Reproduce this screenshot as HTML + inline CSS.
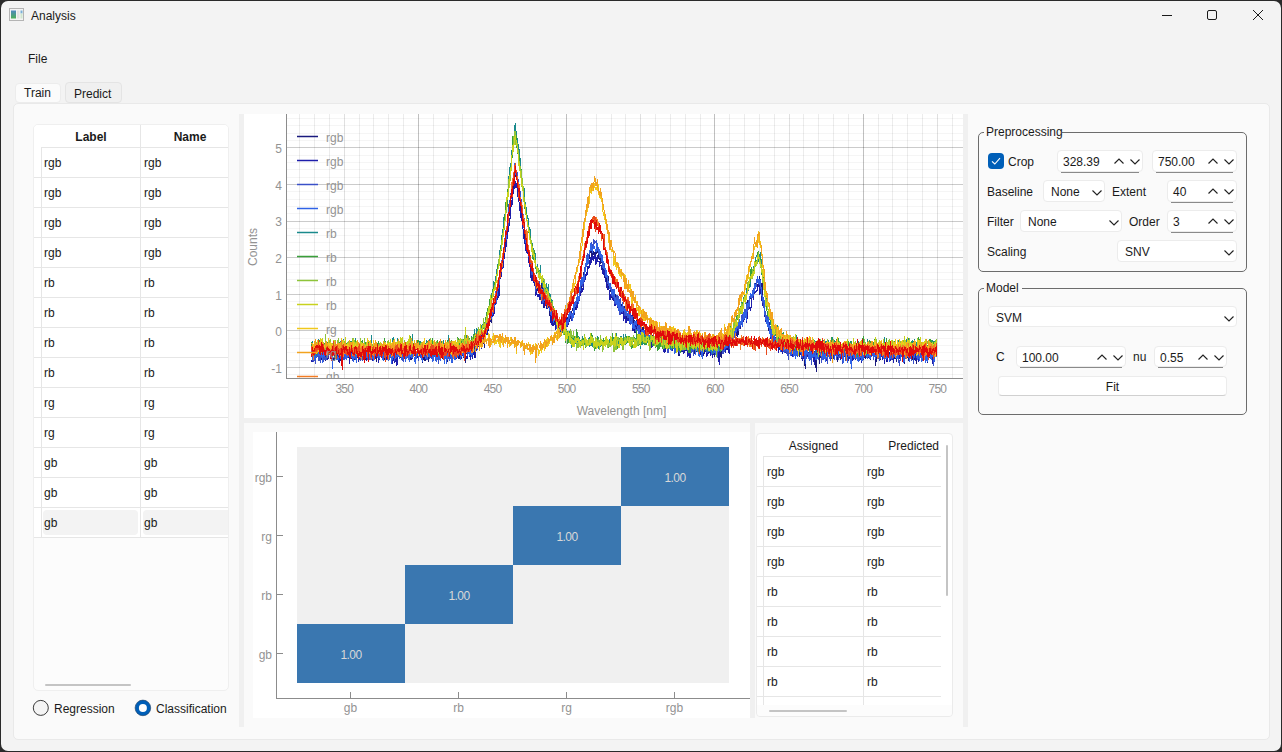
<!DOCTYPE html>
<html><head><meta charset="utf-8"><style>
html,body{margin:0;padding:0;}
body{width:1282px;height:752px;position:relative;overflow:hidden;background:#2a2a2a;font-family:"Liberation Sans",sans-serif;}
.t{position:absolute;white-space:nowrap;line-height:14px;font-family:"Liberation Sans",sans-serif;}
.r{position:absolute;}
</style></head><body>
<div class="r" style="left:1px;top:1px;width:1280px;height:750px;background:#f3f3f3;border-radius:7px;"></div>
<svg class="r" style="left:9px;top:8px" width="16" height="14" viewBox="0 0 16 14"><rect x="0.5" y="0.5" width="14" height="12" fill="#f4f4f4" stroke="#b4b4b4"/><defs><linearGradient id="ig" x1="0" y1="0" x2="0" y2="1"><stop offset="0" stop-color="#4f88c0"/><stop offset="1" stop-color="#4caf58"/></linearGradient></defs><rect x="2" y="2.5" width="5" height="8" fill="url(#ig)"/><rect x="8" y="2.5" width="2.5" height="8" fill="#e2e2e2"/><rect x="11.5" y="2.5" width="2" height="3" fill="#7ab0d8"/><rect x="11.5" y="5.5" width="2" height="5" fill="#cfe6cf"/></svg>
<div class="t" style="left:31px;top:8.86px;font-size:12px;color:#1a1a1a;font-weight:normal;">Analysis</div>
<svg class="r" style="left:1150px;top:0px" width="130" height="30" viewBox="0 0 130 30"><line x1="12" y1="15.5" x2="22" y2="15.5" stroke="#1a1a1a" stroke-width="1"/><rect x="57.5" y="10.5" width="9" height="9" rx="1.5" fill="none" stroke="#1a1a1a" stroke-width="1"/><path d="M103 10 L113 20 M113 10 L103 20" stroke="#1a1a1a" stroke-width="1"/></svg>
<div class="t" style="left:28px;top:51.86px;font-size:12px;color:#1a1a1a;font-weight:normal;">File</div>
<div class="r" style="left:13px;top:103px;width:1257px;height:637px;background:#fafafa;border:1px solid #e9e9e9;border-radius:5px;box-sizing:border-box;"></div>
<div class="r" style="left:15px;top:83px;width:46px;height:20px;background:#fbfbfb;border:1px solid #ececec;border-radius:4px;box-sizing:border-box;"></div>
<div class="r" style="left:65px;top:82px;width:57px;height:21px;background:#f0f0f0;border:1px solid #e4e4e4;border-radius:4px;box-sizing:border-box;"></div>
<div class="t" style="left:24px;top:85.86px;font-size:12px;color:#1a1a1a;font-weight:normal;">Train</div>
<div class="t" style="left:74px;top:86.86px;font-size:12px;color:#1a1a1a;font-weight:normal;">Predict</div>
<div class="r" style="left:33px;top:124px;width:196px;height:567px;background:#fcfcfc;border:1px solid #efefef;border-radius:5px;box-sizing:border-box;"></div>
<div class="r" style="left:34px;top:125px;width:194px;height:412px;background:#fff;border-radius:4px 4px 0 0;"></div>
<div class="t" style="left:41.0px;top:129.86px;width:100px;text-align:center;font-size:12px;color:#1a1a1a;font-weight:bold;">Label</div>
<div class="t" style="left:140.0px;top:129.86px;width:100px;text-align:center;font-size:12px;color:#1a1a1a;font-weight:bold;">Name</div>
<div class="r" style="left:140px;top:125px;width:1px;height:412px;background:#e6e6e6;"></div>
<div class="r" style="left:41px;top:147px;width:1px;height:390px;background:#e6e6e6;"></div>
<div class="r" style="left:41px;top:147px;width:187px;height:1px;background:#e6e6e6;"></div>
<div class="t" style="left:44px;top:155.86px;font-size:12px;color:#1a1a1a;font-weight:normal;">rgb</div>
<div class="t" style="left:144px;top:155.86px;font-size:12px;color:#1a1a1a;font-weight:normal;">rgb</div>
<div class="r" style="left:34px;top:177px;width:194px;height:1px;background:#e6e6e6;"></div>
<div class="t" style="left:44px;top:185.86px;font-size:12px;color:#1a1a1a;font-weight:normal;">rgb</div>
<div class="t" style="left:144px;top:185.86px;font-size:12px;color:#1a1a1a;font-weight:normal;">rgb</div>
<div class="r" style="left:34px;top:207px;width:194px;height:1px;background:#e6e6e6;"></div>
<div class="t" style="left:44px;top:215.86px;font-size:12px;color:#1a1a1a;font-weight:normal;">rgb</div>
<div class="t" style="left:144px;top:215.86px;font-size:12px;color:#1a1a1a;font-weight:normal;">rgb</div>
<div class="r" style="left:34px;top:237px;width:194px;height:1px;background:#e6e6e6;"></div>
<div class="t" style="left:44px;top:245.86px;font-size:12px;color:#1a1a1a;font-weight:normal;">rgb</div>
<div class="t" style="left:144px;top:245.86px;font-size:12px;color:#1a1a1a;font-weight:normal;">rgb</div>
<div class="r" style="left:34px;top:267px;width:194px;height:1px;background:#e6e6e6;"></div>
<div class="t" style="left:44px;top:275.86px;font-size:12px;color:#1a1a1a;font-weight:normal;">rb</div>
<div class="t" style="left:144px;top:275.86px;font-size:12px;color:#1a1a1a;font-weight:normal;">rb</div>
<div class="r" style="left:34px;top:297px;width:194px;height:1px;background:#e6e6e6;"></div>
<div class="t" style="left:44px;top:305.86px;font-size:12px;color:#1a1a1a;font-weight:normal;">rb</div>
<div class="t" style="left:144px;top:305.86px;font-size:12px;color:#1a1a1a;font-weight:normal;">rb</div>
<div class="r" style="left:34px;top:327px;width:194px;height:1px;background:#e6e6e6;"></div>
<div class="t" style="left:44px;top:335.86px;font-size:12px;color:#1a1a1a;font-weight:normal;">rb</div>
<div class="t" style="left:144px;top:335.86px;font-size:12px;color:#1a1a1a;font-weight:normal;">rb</div>
<div class="r" style="left:34px;top:357px;width:194px;height:1px;background:#e6e6e6;"></div>
<div class="t" style="left:44px;top:365.86px;font-size:12px;color:#1a1a1a;font-weight:normal;">rb</div>
<div class="t" style="left:144px;top:365.86px;font-size:12px;color:#1a1a1a;font-weight:normal;">rb</div>
<div class="r" style="left:34px;top:387px;width:194px;height:1px;background:#e6e6e6;"></div>
<div class="t" style="left:44px;top:395.86px;font-size:12px;color:#1a1a1a;font-weight:normal;">rg</div>
<div class="t" style="left:144px;top:395.86px;font-size:12px;color:#1a1a1a;font-weight:normal;">rg</div>
<div class="r" style="left:34px;top:417px;width:194px;height:1px;background:#e6e6e6;"></div>
<div class="t" style="left:44px;top:425.86px;font-size:12px;color:#1a1a1a;font-weight:normal;">rg</div>
<div class="t" style="left:144px;top:425.86px;font-size:12px;color:#1a1a1a;font-weight:normal;">rg</div>
<div class="r" style="left:34px;top:447px;width:194px;height:1px;background:#e6e6e6;"></div>
<div class="t" style="left:44px;top:455.86px;font-size:12px;color:#1a1a1a;font-weight:normal;">gb</div>
<div class="t" style="left:144px;top:455.86px;font-size:12px;color:#1a1a1a;font-weight:normal;">gb</div>
<div class="r" style="left:34px;top:477px;width:194px;height:1px;background:#e6e6e6;"></div>
<div class="t" style="left:44px;top:485.86px;font-size:12px;color:#1a1a1a;font-weight:normal;">gb</div>
<div class="t" style="left:144px;top:485.86px;font-size:12px;color:#1a1a1a;font-weight:normal;">gb</div>
<div class="r" style="left:34px;top:507px;width:194px;height:1px;background:#e6e6e6;"></div>
<div class="r" style="left:43px;top:510px;width:95px;height:25px;background:#f3f3f3;border-radius:4px;"></div>
<div class="r" style="left:143px;top:510px;width:85px;height:25px;background:#f3f3f3;border-radius:4px 0 0 4px;"></div>
<div class="t" style="left:44px;top:515.86px;font-size:12px;color:#1a1a1a;font-weight:normal;">gb</div>
<div class="t" style="left:144px;top:515.86px;font-size:12px;color:#1a1a1a;font-weight:normal;">gb</div>
<div class="r" style="left:34px;top:537px;width:194px;height:1px;background:#e6e6e6;"></div>
<div class="r" style="left:45px;top:684px;width:86px;height:2px;background:#c4c4c4;border-radius:1px;"></div>
<svg class="r" style="left:32px;top:699px" width="18" height="18"><circle cx="8.8" cy="8.9" r="7.5" fill="#f4f4f4" stroke="#3b3b3b" stroke-width="1"/></svg>
<div class="t" style="left:54px;top:701.86px;font-size:12px;color:#1a1a1a;font-weight:normal;">Regression</div>
<svg class="r" style="left:134px;top:699px" width="18" height="18"><circle cx="8.9" cy="8.9" r="7.8" fill="#005fb8" stroke="#1c3a5e" stroke-width="0.6"/><circle cx="8.9" cy="8.9" r="4" fill="#fff"/></svg>
<div class="t" style="left:156px;top:701.86px;font-size:12px;color:#1a1a1a;font-weight:normal;">Classification</div>
<div class="r" style="left:239px;top:114px;width:5px;height:613px;background:#f0f0f0;"></div>
<div class="r" style="left:963px;top:114px;width:5px;height:613px;background:#f0f0f0;"></div>
<div class="r" style="left:244px;top:418px;width:719px;height:5px;background:#f0f0f0;"></div>
<div class="r" style="left:750px;top:423px;width:5px;height:295px;background:#f0f0f0;"></div>
<div class="r" style="left:244px;top:114px;width:719px;height:304px;background:#fff;"></div>
<svg class="r" style="left:0;top:0" width="1282" height="752" viewBox="0 0 1282 752"><defs><clipPath id="pc"><rect x="287" y="114" width="676" height="264"/></clipPath></defs><g clip-path="url(#pc)"><g shape-rendering="crispEdges"><line x1="299.5" y1="114" x2="299.5" y2="378" stroke="#000" stroke-opacity="0.075" stroke-width="1"/><line x1="314.5" y1="114" x2="314.5" y2="378" stroke="#000" stroke-opacity="0.075" stroke-width="1"/><line x1="329.5" y1="114" x2="329.5" y2="378" stroke="#000" stroke-opacity="0.075" stroke-width="1"/><line x1="344.5" y1="114" x2="344.5" y2="378" stroke="#000" stroke-opacity="0.122" stroke-width="1"/><line x1="359.5" y1="114" x2="359.5" y2="378" stroke="#000" stroke-opacity="0.075" stroke-width="1"/><line x1="373.5" y1="114" x2="373.5" y2="378" stroke="#000" stroke-opacity="0.075" stroke-width="1"/><line x1="388.5" y1="114" x2="388.5" y2="378" stroke="#000" stroke-opacity="0.075" stroke-width="1"/><line x1="403.5" y1="114" x2="403.5" y2="378" stroke="#000" stroke-opacity="0.075" stroke-width="1"/><line x1="418.5" y1="114" x2="418.5" y2="378" stroke="#000" stroke-opacity="0.247" stroke-width="1"/><line x1="433.5" y1="114" x2="433.5" y2="378" stroke="#000" stroke-opacity="0.075" stroke-width="1"/><line x1="448.5" y1="114" x2="448.5" y2="378" stroke="#000" stroke-opacity="0.075" stroke-width="1"/><line x1="462.5" y1="114" x2="462.5" y2="378" stroke="#000" stroke-opacity="0.075" stroke-width="1"/><line x1="477.5" y1="114" x2="477.5" y2="378" stroke="#000" stroke-opacity="0.075" stroke-width="1"/><line x1="492.5" y1="114" x2="492.5" y2="378" stroke="#000" stroke-opacity="0.122" stroke-width="1"/><line x1="507.5" y1="114" x2="507.5" y2="378" stroke="#000" stroke-opacity="0.075" stroke-width="1"/><line x1="522.5" y1="114" x2="522.5" y2="378" stroke="#000" stroke-opacity="0.075" stroke-width="1"/><line x1="537.5" y1="114" x2="537.5" y2="378" stroke="#000" stroke-opacity="0.075" stroke-width="1"/><line x1="551.5" y1="114" x2="551.5" y2="378" stroke="#000" stroke-opacity="0.075" stroke-width="1"/><line x1="566.5" y1="114" x2="566.5" y2="378" stroke="#000" stroke-opacity="0.247" stroke-width="1"/><line x1="581.5" y1="114" x2="581.5" y2="378" stroke="#000" stroke-opacity="0.075" stroke-width="1"/><line x1="596.5" y1="114" x2="596.5" y2="378" stroke="#000" stroke-opacity="0.075" stroke-width="1"/><line x1="611.5" y1="114" x2="611.5" y2="378" stroke="#000" stroke-opacity="0.075" stroke-width="1"/><line x1="625.5" y1="114" x2="625.5" y2="378" stroke="#000" stroke-opacity="0.075" stroke-width="1"/><line x1="640.5" y1="114" x2="640.5" y2="378" stroke="#000" stroke-opacity="0.122" stroke-width="1"/><line x1="655.5" y1="114" x2="655.5" y2="378" stroke="#000" stroke-opacity="0.075" stroke-width="1"/><line x1="670.5" y1="114" x2="670.5" y2="378" stroke="#000" stroke-opacity="0.075" stroke-width="1"/><line x1="685.5" y1="114" x2="685.5" y2="378" stroke="#000" stroke-opacity="0.075" stroke-width="1"/><line x1="700.5" y1="114" x2="700.5" y2="378" stroke="#000" stroke-opacity="0.075" stroke-width="1"/><line x1="714.5" y1="114" x2="714.5" y2="378" stroke="#000" stroke-opacity="0.247" stroke-width="1"/><line x1="729.5" y1="114" x2="729.5" y2="378" stroke="#000" stroke-opacity="0.075" stroke-width="1"/><line x1="744.5" y1="114" x2="744.5" y2="378" stroke="#000" stroke-opacity="0.075" stroke-width="1"/><line x1="759.5" y1="114" x2="759.5" y2="378" stroke="#000" stroke-opacity="0.075" stroke-width="1"/><line x1="774.5" y1="114" x2="774.5" y2="378" stroke="#000" stroke-opacity="0.075" stroke-width="1"/><line x1="789.5" y1="114" x2="789.5" y2="378" stroke="#000" stroke-opacity="0.122" stroke-width="1"/><line x1="803.5" y1="114" x2="803.5" y2="378" stroke="#000" stroke-opacity="0.075" stroke-width="1"/><line x1="818.5" y1="114" x2="818.5" y2="378" stroke="#000" stroke-opacity="0.075" stroke-width="1"/><line x1="833.5" y1="114" x2="833.5" y2="378" stroke="#000" stroke-opacity="0.075" stroke-width="1"/><line x1="848.5" y1="114" x2="848.5" y2="378" stroke="#000" stroke-opacity="0.075" stroke-width="1"/><line x1="863.5" y1="114" x2="863.5" y2="378" stroke="#000" stroke-opacity="0.247" stroke-width="1"/><line x1="878.5" y1="114" x2="878.5" y2="378" stroke="#000" stroke-opacity="0.075" stroke-width="1"/><line x1="892.5" y1="114" x2="892.5" y2="378" stroke="#000" stroke-opacity="0.075" stroke-width="1"/><line x1="907.5" y1="114" x2="907.5" y2="378" stroke="#000" stroke-opacity="0.075" stroke-width="1"/><line x1="922.5" y1="114" x2="922.5" y2="378" stroke="#000" stroke-opacity="0.075" stroke-width="1"/><line x1="937.5" y1="114" x2="937.5" y2="378" stroke="#000" stroke-opacity="0.122" stroke-width="1"/><line x1="952.5" y1="114" x2="952.5" y2="378" stroke="#000" stroke-opacity="0.075" stroke-width="1"/><line x1="287" y1="374.5" x2="963" y2="374.5" stroke="#000" stroke-opacity="0.04" stroke-width="1"/><line x1="287" y1="367.5" x2="963" y2="367.5" stroke="#000" stroke-opacity="0.204" stroke-width="1"/><line x1="287" y1="360.5" x2="963" y2="360.5" stroke="#000" stroke-opacity="0.04" stroke-width="1"/><line x1="287" y1="352.5" x2="963" y2="352.5" stroke="#000" stroke-opacity="0.04" stroke-width="1"/><line x1="287" y1="345.5" x2="963" y2="345.5" stroke="#000" stroke-opacity="0.04" stroke-width="1"/><line x1="287" y1="338.5" x2="963" y2="338.5" stroke="#000" stroke-opacity="0.04" stroke-width="1"/><line x1="287" y1="330.5" x2="963" y2="330.5" stroke="#000" stroke-opacity="0.204" stroke-width="1"/><line x1="287" y1="323.5" x2="963" y2="323.5" stroke="#000" stroke-opacity="0.04" stroke-width="1"/><line x1="287" y1="316.5" x2="963" y2="316.5" stroke="#000" stroke-opacity="0.04" stroke-width="1"/><line x1="287" y1="308.5" x2="963" y2="308.5" stroke="#000" stroke-opacity="0.04" stroke-width="1"/><line x1="287" y1="301.5" x2="963" y2="301.5" stroke="#000" stroke-opacity="0.04" stroke-width="1"/><line x1="287" y1="294.5" x2="963" y2="294.5" stroke="#000" stroke-opacity="0.204" stroke-width="1"/><line x1="287" y1="286.5" x2="963" y2="286.5" stroke="#000" stroke-opacity="0.04" stroke-width="1"/><line x1="287" y1="279.5" x2="963" y2="279.5" stroke="#000" stroke-opacity="0.04" stroke-width="1"/><line x1="287" y1="272.5" x2="963" y2="272.5" stroke="#000" stroke-opacity="0.04" stroke-width="1"/><line x1="287" y1="264.5" x2="963" y2="264.5" stroke="#000" stroke-opacity="0.04" stroke-width="1"/><line x1="287" y1="257.5" x2="963" y2="257.5" stroke="#000" stroke-opacity="0.204" stroke-width="1"/><line x1="287" y1="250.5" x2="963" y2="250.5" stroke="#000" stroke-opacity="0.04" stroke-width="1"/><line x1="287" y1="242.5" x2="963" y2="242.5" stroke="#000" stroke-opacity="0.04" stroke-width="1"/><line x1="287" y1="235.5" x2="963" y2="235.5" stroke="#000" stroke-opacity="0.04" stroke-width="1"/><line x1="287" y1="228.5" x2="963" y2="228.5" stroke="#000" stroke-opacity="0.04" stroke-width="1"/><line x1="287" y1="221.5" x2="963" y2="221.5" stroke="#000" stroke-opacity="0.204" stroke-width="1"/><line x1="287" y1="213.5" x2="963" y2="213.5" stroke="#000" stroke-opacity="0.04" stroke-width="1"/><line x1="287" y1="206.5" x2="963" y2="206.5" stroke="#000" stroke-opacity="0.04" stroke-width="1"/><line x1="287" y1="199.5" x2="963" y2="199.5" stroke="#000" stroke-opacity="0.04" stroke-width="1"/><line x1="287" y1="191.5" x2="963" y2="191.5" stroke="#000" stroke-opacity="0.04" stroke-width="1"/><line x1="287" y1="184.5" x2="963" y2="184.5" stroke="#000" stroke-opacity="0.204" stroke-width="1"/><line x1="287" y1="177.5" x2="963" y2="177.5" stroke="#000" stroke-opacity="0.04" stroke-width="1"/><line x1="287" y1="169.5" x2="963" y2="169.5" stroke="#000" stroke-opacity="0.04" stroke-width="1"/><line x1="287" y1="162.5" x2="963" y2="162.5" stroke="#000" stroke-opacity="0.04" stroke-width="1"/><line x1="287" y1="155.5" x2="963" y2="155.5" stroke="#000" stroke-opacity="0.04" stroke-width="1"/><line x1="287" y1="147.5" x2="963" y2="147.5" stroke="#000" stroke-opacity="0.204" stroke-width="1"/><line x1="287" y1="140.5" x2="963" y2="140.5" stroke="#000" stroke-opacity="0.04" stroke-width="1"/><line x1="287" y1="133.5" x2="963" y2="133.5" stroke="#000" stroke-opacity="0.04" stroke-width="1"/><line x1="287" y1="125.5" x2="963" y2="125.5" stroke="#000" stroke-opacity="0.04" stroke-width="1"/><line x1="287" y1="118.5" x2="963" y2="118.5" stroke="#000" stroke-opacity="0.04" stroke-width="1"/></g><path d="M311.6 350.2L312.1 350.7L312.6 356.7L313.1 356.0L313.6 356.8L314.1 353.0L314.6 355.2L315.1 352.4L315.6 361.4L316.1 349.5L316.6 355.3L317.1 352.6L317.6 355.4L318.1 356.3L318.6 353.3L319.1 352.1L319.6 355.7L320.1 355.5L320.6 352.6L321.1 358.0L321.6 360.2L322.1 353.6L322.6 357.3L323.1 361.6L323.6 357.8L324.1 356.6L324.6 359.1L325.1 360.1L325.6 354.8L326.1 351.8L326.6 355.8L327.1 357.5L327.6 352.8L328.1 352.5L328.6 356.0L329.1 353.1L329.6 351.3L330.1 355.7L330.6 357.8L331.1 353.7L331.6 354.1L332.1 351.1L332.6 359.4L333.1 357.3L333.6 357.9L334.1 361.0L334.6 354.5L335.1 353.1L335.6 357.5L336.1 350.1L336.6 352.1L337.1 352.8L337.6 353.6L338.1 351.6L338.6 362.4L339.1 352.8L339.6 352.9L340.1 361.1L340.6 353.7L341.1 355.8L341.6 352.2L342.1 356.5L342.6 355.0L343.1 353.8L343.6 358.0L344.1 352.9L344.6 355.3L345.1 353.2L345.6 356.8L346.1 351.2L346.6 352.9L347.1 355.6L347.6 352.8L348.1 350.6L348.6 348.7L349.1 360.4L349.6 351.9L350.1 353.3L350.6 355.3L351.1 358.5L351.6 350.6L352.1 359.3L352.6 353.0L353.1 350.4L353.6 360.5L354.1 356.0L354.6 359.5L355.1 354.1L355.6 349.7L356.1 343.7L356.6 361.1L357.1 357.0L357.6 352.5L358.1 349.5L358.6 353.5L359.1 357.6L359.6 353.9L360.1 355.0L360.6 355.7L361.2 357.5L361.7 353.6L362.2 353.9L362.7 355.3L363.2 355.7L363.7 359.4L364.2 356.6L364.7 350.8L365.2 355.6L365.7 360.0L366.2 350.3L366.7 353.1L367.2 347.6L367.7 354.7L368.2 356.6L368.7 360.0L369.2 350.4L369.7 346.0L370.2 357.8L370.7 357.2L371.2 352.9L371.7 357.8L372.2 355.9L372.7 356.2L373.2 353.9L373.7 351.1L374.2 354.9L374.7 351.8L375.2 356.4L375.7 353.8L376.2 362.4L376.7 360.0L377.2 352.2L377.7 357.0L378.2 352.9L378.7 353.1L379.2 350.4L379.7 350.4L380.2 351.4L380.7 355.3L381.2 357.4L381.7 357.5L382.2 356.7L382.7 358.9L383.2 356.9L383.7 355.3L384.2 353.6L384.7 356.1L385.2 361.6L385.7 355.2L386.2 354.2L386.7 351.2L387.2 351.7L387.7 358.5L388.2 357.5L388.7 348.0L389.2 352.3L389.7 348.6L390.2 347.6L390.7 357.8L391.2 353.6L391.7 353.4L392.2 353.0L392.7 353.1L393.2 354.3L393.7 354.4L394.2 360.2L394.7 355.5L395.2 357.6L395.7 354.5L396.2 356.6L396.7 352.8L397.2 352.1L397.7 353.9L398.2 353.9L398.7 354.6L399.2 356.5L399.7 355.5L400.2 356.7L400.7 353.6L401.2 354.9L401.7 352.9L402.2 359.6L402.7 351.9L403.2 357.6L403.7 357.5L404.2 355.6L404.7 356.9L405.2 353.9L405.7 357.0L406.2 358.7L406.7 357.9L407.2 350.4L407.7 354.8L408.2 359.0L408.7 354.9L409.2 360.4L409.7 345.0L410.2 360.3L410.7 353.3L411.2 353.1L411.7 360.0L412.2 353.9L412.7 351.5L413.2 353.3L413.7 354.0L414.2 351.7L414.7 354.4L415.2 353.8L415.7 355.4L416.2 352.8L416.7 358.2L417.2 352.2L417.7 356.7L418.2 358.7L418.7 353.7L419.2 349.1L419.7 351.6L420.2 356.7L420.7 352.5L421.2 356.5L421.7 355.4L422.2 354.6L422.7 363.0L423.2 354.3L423.7 358.5L424.2 357.4L424.7 360.1L425.2 360.2L425.7 358.2L426.2 352.1L426.7 349.2L427.2 355.0L427.7 351.2L428.2 355.9L428.7 361.6L429.2 354.4L429.7 353.4L430.2 357.3L430.7 353.9L431.2 353.0L431.7 358.0L432.2 360.1L432.7 355.7L433.2 355.7L433.7 356.2L434.2 351.5L434.7 349.0L435.2 356.4L435.7 352.5L436.2 351.7L436.7 352.5L437.2 351.3L437.7 356.3L438.2 352.4L438.7 347.9L439.2 352.2L439.7 357.1L440.2 351.6L440.7 350.6L441.2 353.7L441.7 356.9L442.2 349.6L442.7 359.3L443.2 353.2L443.7 355.0L444.3 359.1L444.8 350.7L445.3 353.7L445.8 359.0L446.3 352.9L446.8 356.5L447.3 361.6L447.8 357.4L448.3 354.0L448.8 352.7L449.3 354.4L449.8 354.8L450.3 353.3L450.8 355.7L451.3 350.9L451.8 354.4L452.3 353.9L452.8 353.1L453.3 358.6L453.8 357.3L454.3 349.4L454.8 353.4L455.3 355.5L455.8 353.2L456.3 356.0L456.8 353.2L457.3 356.4L457.8 353.0L458.3 359.4L458.8 349.1L459.3 355.5L459.8 359.1L460.3 354.2L460.8 354.7L461.3 352.7L461.8 357.1L462.3 351.7L462.8 340.4L463.3 357.3L463.8 351.6L464.3 353.7L464.8 351.9L465.3 362.5L465.8 356.3L466.3 350.6L466.8 352.3L467.3 346.3L467.8 354.4L468.3 351.2L468.8 341.6L469.3 354.3L469.8 354.7L470.3 351.6L470.8 351.5L471.3 347.9L471.8 349.9L472.3 352.5L472.8 348.7L473.3 339.8L473.8 344.0L474.3 357.6L474.8 348.0L475.3 350.1L475.8 344.4L476.3 346.7L476.8 338.8L477.3 341.8L477.8 341.5L478.3 343.5L478.8 343.8L479.3 342.0L479.8 338.2L480.3 340.3L480.8 342.9L481.3 336.8L481.8 340.1L482.3 340.5L482.8 342.5L483.3 341.3L483.8 341.0L484.3 347.8L484.8 332.9L485.3 332.8L485.8 333.9L486.3 327.9L486.8 328.4L487.3 327.0L487.8 335.3L488.3 325.9L488.8 321.6L489.3 316.2L489.8 313.8L490.3 313.6L490.8 321.0L491.3 322.9L491.8 311.7L492.3 311.9L492.8 307.1L493.3 309.5L493.8 306.4L494.3 310.7L494.8 302.3L495.3 303.8L495.8 298.6L496.3 295.4L496.8 294.7L497.3 290.4L497.8 288.8L498.3 283.3L498.8 281.5L499.3 282.4L499.8 279.7L500.3 268.9L500.8 272.5L501.3 266.0L501.8 265.3L502.3 265.8L502.8 263.1L503.3 256.5L503.8 252.5L504.3 247.7L504.8 250.8L505.3 244.9L505.8 239.6L506.3 230.2L506.8 240.4L507.3 227.2L507.8 226.9L508.3 219.6L508.8 218.9L509.3 212.0L509.8 204.0L510.3 204.3L510.8 200.1L511.3 196.4L511.8 196.7L512.3 189.0L512.8 188.4L513.3 187.3L513.8 181.4L514.3 178.8L514.8 172.2L515.3 172.0L515.8 176.6L516.3 172.6L516.8 177.1L517.3 179.0L517.8 184.1L518.3 189.5L518.8 194.3L519.3 196.4L519.8 195.0L520.3 201.5L520.8 210.7L521.3 209.3L521.8 217.7L522.3 215.9L522.8 224.3L523.3 228.1L523.8 226.8L524.3 230.5L524.8 239.0L525.3 233.6L525.8 231.7L526.3 247.4L526.9 239.0L527.4 252.1L527.9 253.0L528.4 254.9L528.9 262.4L529.4 255.8L529.9 260.7L530.4 267.0L530.9 267.4L531.4 273.7L531.9 271.6L532.4 269.1L532.9 280.3L533.4 277.9L533.9 277.9L534.4 276.7L534.9 277.7L535.4 285.9L535.9 288.8L536.4 285.8L536.9 289.4L537.4 290.7L537.9 285.9L538.4 284.6L538.9 290.3L539.4 292.6L539.9 290.7L540.4 300.1L540.9 294.3L541.4 298.7L541.9 282.5L542.4 294.0L542.9 296.8L543.4 298.8L543.9 307.7L544.4 297.3L544.9 294.9L545.4 303.9L545.9 299.8L546.4 300.5L546.9 309.2L547.4 301.4L547.9 300.8L548.4 305.9L548.9 308.2L549.4 306.3L549.9 315.6L550.4 311.0L550.9 308.7L551.4 317.8L551.9 311.0L552.4 317.9L552.9 323.8L553.4 318.0L553.9 322.1L554.4 318.6L554.9 324.9L555.4 318.2L555.9 325.5L556.4 322.7L556.9 327.1L557.4 327.2L557.9 323.0L558.4 327.3L558.9 329.6L559.4 332.7L559.9 324.5L560.4 326.2L560.9 330.0L561.4 328.2L561.9 332.2L562.4 331.4L562.9 330.0L563.4 325.2L563.9 324.7L564.4 327.5L564.9 321.6L565.4 320.7L565.9 322.1L566.4 318.4L566.9 322.2L567.4 320.9L567.9 318.1L568.4 319.1L568.9 315.5L569.4 321.9L569.9 311.8L570.4 318.8L570.9 315.9L571.4 319.2L571.9 311.4L572.4 308.1L572.9 307.9L573.4 307.8L573.9 315.2L574.4 313.2L574.9 309.4L575.4 309.7L575.9 301.2L576.4 303.2L576.9 302.6L577.4 299.5L577.9 303.2L578.4 301.8L578.9 300.4L579.4 293.9L579.9 292.3L580.4 289.4L580.9 285.5L581.4 291.8L581.9 286.9L582.4 282.3L582.9 285.3L583.4 280.3L583.9 272.8L584.4 270.3L584.9 268.3L585.4 269.7L585.9 268.8L586.4 262.6L586.9 266.0L587.4 261.9L587.9 256.9L588.4 261.1L588.9 260.3L589.4 256.6L589.9 252.8L590.4 252.1L590.9 252.7L591.4 250.8L591.9 257.8L592.4 254.7L592.9 250.6L593.4 253.8L593.9 254.8L594.4 253.8L594.9 252.9L595.4 250.9L595.9 254.5L596.4 250.7L596.9 246.3L597.4 253.3L597.9 249.0L598.4 253.0L598.9 258.5L599.4 256.2L599.9 260.2L600.4 253.9L600.9 263.7L601.4 256.5L601.9 260.6L602.4 271.1L602.9 262.7L603.4 261.5L603.9 271.1L604.4 266.5L604.9 278.0L605.4 272.7L605.9 281.2L606.4 275.5L606.9 285.2L607.4 290.0L607.9 281.2L608.4 276.5L608.9 288.3L609.4 285.2L610.0 289.1L610.5 291.6L611.0 289.3L611.5 286.7L612.0 297.6L612.5 292.3L613.0 294.1L613.5 301.2L614.0 291.6L614.5 291.3L615.0 302.4L615.5 294.0L616.0 300.8L616.5 302.5L617.0 297.6L617.5 302.7L618.0 303.0L618.5 299.5L619.0 301.0L619.5 303.0L620.0 311.6L620.5 312.8L621.0 304.1L621.5 311.9L622.0 308.8L622.5 313.7L623.0 311.2L623.5 315.7L624.0 306.2L624.5 316.1L625.0 313.6L625.5 314.5L626.0 310.3L626.5 320.0L627.0 315.8L627.5 317.1L628.0 315.1L628.5 315.9L629.0 320.8L629.5 318.0L630.0 320.7L630.5 318.4L631.0 321.0L631.5 323.6L632.0 322.0L632.5 321.3L633.0 315.3L633.5 325.5L634.0 323.3L634.5 319.9L635.0 332.9L635.5 332.3L636.0 331.0L636.5 327.9L637.0 319.6L637.5 327.4L638.0 325.2L638.5 330.8L639.0 339.2L639.5 339.3L640.0 326.2L640.5 331.8L641.0 337.6L641.5 329.8L642.0 339.5L642.5 330.5L643.0 326.6L643.5 337.6L644.0 339.1L644.5 332.6L645.0 339.6L645.5 333.0L646.0 340.4L646.5 333.7L647.0 336.5L647.5 338.6L648.0 340.5L648.5 336.8L649.0 344.4L649.5 339.1L650.0 339.8L650.5 336.3L651.0 343.3L651.5 333.2L652.0 340.5L652.5 343.7L653.0 335.2L653.5 334.5L654.0 341.2L654.5 343.9L655.0 341.0L655.5 343.7L656.0 342.6L656.5 336.4L657.0 340.7L657.5 341.5L658.0 341.3L658.5 342.8L659.0 339.8L659.5 339.7L660.0 344.2L660.5 342.6L661.0 334.7L661.5 341.7L662.0 343.9L662.5 336.2L663.0 343.4L663.5 349.6L664.0 341.3L664.5 346.9L665.0 345.6L665.5 342.8L666.0 344.5L666.5 346.8L667.0 346.1L667.5 346.4L668.0 340.3L668.5 347.0L669.0 346.6L669.5 337.6L670.0 346.7L670.5 339.7L671.0 340.4L671.5 345.6L672.0 350.1L672.5 343.7L673.0 343.0L673.5 342.1L674.0 345.3L674.5 341.4L675.0 340.9L675.5 349.5L676.0 341.0L676.5 345.4L677.0 348.1L677.5 347.3L678.0 339.8L678.5 343.0L679.0 356.4L679.5 346.3L680.0 347.2L680.5 347.4L681.0 348.7L681.5 352.0L682.0 344.1L682.5 352.4L683.0 348.5L683.5 349.4L684.0 351.5L684.5 343.4L685.0 346.3L685.5 350.0L686.0 351.0L686.5 349.4L687.0 344.4L687.5 347.4L688.0 347.1L688.5 349.0L689.0 348.8L689.5 347.2L690.0 354.4L690.5 342.4L691.0 350.8L691.5 350.1L692.0 340.7L692.6 347.4L693.1 348.1L693.6 350.3L694.1 353.7L694.6 347.7L695.1 344.2L695.6 351.6L696.1 343.7L696.6 352.4L697.1 351.1L697.6 346.8L698.1 348.6L698.6 346.2L699.1 351.3L699.6 352.3L700.1 355.2L700.6 353.0L701.1 352.6L701.6 353.8L702.1 347.8L702.6 351.3L703.1 355.9L703.6 340.4L704.1 352.0L704.6 353.5L705.1 344.8L705.6 345.1L706.1 353.2L706.6 354.4L707.1 352.8L707.6 345.4L708.1 350.4L708.6 352.2L709.1 349.6L709.6 345.3L710.1 354.3L710.6 350.9L711.1 354.4L711.6 342.1L712.1 343.3L712.6 346.4L713.1 350.2L713.6 347.5L714.1 357.1L714.6 348.8L715.1 354.5L715.6 354.5L716.1 352.3L716.6 351.1L717.1 347.9L717.6 347.2L718.1 348.5L718.6 352.5L719.1 346.7L719.6 349.2L720.1 344.5L720.6 351.6L721.1 357.8L721.6 349.6L722.1 340.2L722.6 345.9L723.1 348.0L723.6 344.0L724.1 345.1L724.6 345.0L725.1 348.2L725.6 345.9L726.1 345.2L726.6 347.6L727.1 348.7L727.6 343.8L728.1 340.4L728.6 341.0L729.1 341.0L729.6 340.5L730.1 332.7L730.6 340.3L731.1 337.0L731.6 333.3L732.1 339.2L732.6 337.6L733.1 334.0L733.6 330.9L734.1 334.8L734.6 333.7L735.1 333.8L735.6 337.4L736.1 328.4L736.6 332.3L737.1 336.5L737.6 330.2L738.1 334.7L738.6 331.2L739.1 326.6L739.6 328.8L740.1 320.8L740.6 328.6L741.1 321.6L741.6 319.5L742.1 315.4L742.6 316.2L743.1 317.6L743.6 317.1L744.1 316.5L744.6 311.3L745.1 316.2L745.6 310.7L746.1 311.5L746.6 309.0L747.1 309.4L747.6 299.7L748.1 308.1L748.6 303.6L749.1 302.1L749.6 299.6L750.1 298.8L750.6 297.6L751.1 294.3L751.6 301.7L752.1 295.2L752.6 298.3L753.1 291.9L753.6 295.6L754.1 293.6L754.6 289.3L755.1 283.0L755.6 283.5L756.1 284.6L756.6 279.6L757.1 286.6L757.6 289.5L758.1 282.5L758.6 281.7L759.1 278.1L759.6 276.6L760.1 290.3L760.6 278.7L761.1 284.2L761.6 289.2L762.1 293.3L762.6 283.5L763.1 299.6L763.6 304.9L764.1 306.2L764.6 314.8L765.1 311.8L765.6 317.1L766.1 317.1L766.6 318.5L767.1 325.0L767.6 318.3L768.1 327.9L768.6 321.0L769.1 333.0L769.6 327.7L770.1 333.4L770.6 331.7L771.1 335.2L771.6 341.6L772.1 338.9L772.6 335.9L773.1 335.0L773.6 343.4L774.1 346.7L774.6 343.4L775.1 341.7L775.7 343.6L776.2 344.6L776.7 339.3L777.2 339.3L777.7 340.5L778.2 346.8L778.7 343.7L779.2 345.1L779.7 349.8L780.2 342.2L780.7 345.4L781.2 347.8L781.7 341.6L782.2 344.3L782.7 344.4L783.2 343.6L783.7 345.7L784.2 353.1L784.7 350.4L785.2 346.0L785.7 352.3L786.2 349.6L786.7 348.5L787.2 345.0L787.7 345.6L788.2 347.1L788.7 351.0L789.2 347.2L789.7 348.7L790.2 351.2L790.7 346.0L791.2 349.2L791.7 353.6L792.2 346.7L792.7 352.1L793.2 349.3L793.7 356.7L794.2 351.6L794.7 355.0L795.2 355.2L795.7 358.5L796.2 344.6L796.7 352.6L797.2 351.4L797.7 348.5L798.2 352.9L798.7 350.8L799.2 357.4L799.7 352.1L800.2 354.4L800.7 351.3L801.2 352.5L801.7 358.1L802.2 359.8L802.7 357.0L803.2 351.0L803.7 352.1L804.2 352.2L804.7 360.6L805.2 368.6L805.7 355.8L806.2 354.8L806.7 355.7L807.2 352.4L807.7 354.3L808.2 357.8L808.7 356.8L809.2 353.2L809.7 353.5L810.2 354.0L810.7 345.9L811.2 354.7L811.7 353.4L812.2 357.2L812.7 355.0L813.2 352.0L813.7 351.9L814.2 354.4L814.7 352.5L815.2 353.7L815.7 360.4L816.2 372.1L816.7 345.9L817.2 351.0L817.7 354.1L818.2 360.0L818.7 358.4L819.2 349.2L819.7 363.7L820.2 355.1L820.7 351.0L821.2 353.5L821.7 351.4L822.2 354.5L822.7 345.7L823.2 357.6L823.7 358.8L824.2 353.1L824.7 349.1L825.2 354.3L825.7 350.5L826.2 356.0L826.7 358.3L827.2 349.3L827.7 348.7L828.2 348.8L828.7 355.7L829.2 358.2L829.7 358.3L830.2 355.0L830.7 352.2L831.2 352.5L831.7 359.2L832.2 353.6L832.7 354.2L833.2 353.8L833.7 354.4L834.2 355.0L834.7 352.3L835.2 353.9L835.7 353.6L836.2 356.8L836.7 353.0L837.2 354.8L837.7 361.8L838.2 352.7L838.7 355.3L839.2 351.2L839.7 355.0L840.2 354.8L840.7 353.7L841.2 354.5L841.7 356.0L842.2 360.7L842.7 348.1L843.2 360.0L843.7 355.7L844.2 352.3L844.7 353.2L845.2 352.6L845.7 351.9L846.2 350.2L846.7 353.6L847.2 344.5L847.7 358.2L848.2 353.9L848.7 355.9L849.2 356.6L849.7 353.7L850.2 349.6L850.7 357.2L851.2 357.2L851.7 352.2L852.2 352.8L852.7 347.9L853.2 351.2L853.7 354.0L854.2 355.9L854.7 354.0L855.2 355.4L855.7 359.6L856.2 354.8L856.7 355.5L857.2 355.7L857.7 356.4L858.3 349.0L858.8 352.5L859.3 351.6L859.8 357.0L860.3 358.5L860.8 355.9L861.3 354.1L861.8 356.2L862.3 355.6L862.8 351.6L863.3 353.9L863.8 358.4L864.3 356.4L864.8 357.2L865.3 354.3L865.8 359.0L866.3 355.6L866.8 352.5L867.3 354.9L867.8 358.1L868.3 357.1L868.8 354.5L869.3 353.3L869.8 352.0L870.3 355.5L870.8 359.5L871.3 350.0L871.8 353.9L872.3 353.5L872.8 353.9L873.3 358.6L873.8 356.1L874.3 354.1L874.8 351.4L875.3 354.7L875.8 365.8L876.3 355.8L876.8 353.7L877.3 350.5L877.8 352.5L878.3 346.3L878.8 350.0L879.3 350.3L879.8 351.7L880.3 359.8L880.8 352.0L881.3 352.9L881.8 356.8L882.3 352.9L882.8 353.5L883.3 356.6L883.8 355.4L884.3 355.9L884.8 354.2L885.3 356.4L885.8 353.1L886.3 361.6L886.8 355.9L887.3 360.8L887.8 356.6L888.3 353.2L888.8 354.9L889.3 355.3L889.8 354.7L890.3 349.5L890.8 358.8L891.3 351.9L891.8 360.2L892.3 356.6L892.8 354.4L893.3 357.9L893.8 354.2L894.3 352.4L894.8 359.1L895.3 355.2L895.8 356.3L896.3 361.7L896.8 355.6L897.3 357.7L897.8 350.3L898.3 358.0L898.8 349.0L899.3 356.8L899.8 348.2L900.3 352.0L900.8 353.4L901.3 352.2L901.8 351.8L902.3 350.1L902.8 348.9L903.3 356.2L903.8 359.3L904.3 364.2L904.8 356.3L905.3 352.3L905.8 353.6L906.3 354.6L906.8 356.2L907.3 357.2L907.8 355.9L908.3 353.6L908.8 361.1L909.3 352.4L909.8 360.0L910.3 355.5L910.8 357.2L911.3 356.2L911.8 358.6L912.3 359.0L912.8 355.8L913.3 358.7L913.8 346.4L914.3 356.4L914.8 358.6L915.3 356.9L915.8 358.7L916.3 363.5L916.8 356.4L917.3 353.9L917.8 360.2L918.3 355.0L918.8 359.2L919.3 355.1L919.8 353.7L920.3 353.3L920.8 353.5L921.3 357.4L921.8 351.9L922.3 356.5L922.8 353.8L923.3 352.5L923.8 356.0L924.3 359.5L924.8 352.9L925.3 358.9L925.8 358.1L926.3 358.8L926.8 352.1L927.3 355.6L927.8 362.8L928.3 352.4L928.8 343.5L929.3 348.7L929.8 357.0L930.3 354.7L930.8 353.2L931.3 351.9L931.8 354.9L932.3 358.8L932.8 352.4L933.3 352.9L933.8 359.6L934.3 356.3L934.8 354.1L935.3 355.0L935.8 353.2L936.3 352.2L936.8 353.1" fill="none" stroke="#1a1a7e" stroke-width="1" shape-rendering="crispEdges"/><path d="M311.6 360.0L312.1 361.8L312.6 354.6L313.1 353.9L313.6 356.1L314.1 350.5L314.6 350.1L315.1 355.0L315.6 355.7L316.1 355.9L316.6 356.5L317.1 350.4L317.6 354.1L318.1 356.8L318.6 355.8L319.1 353.0L319.6 356.4L320.1 353.9L320.6 355.1L321.1 350.2L321.6 350.9L322.1 359.9L322.6 355.5L323.1 352.5L323.6 356.5L324.1 352.1L324.6 353.1L325.1 352.9L325.6 355.2L326.1 353.9L326.6 353.1L327.1 360.1L327.6 358.2L328.1 358.5L328.6 349.1L329.1 353.9L329.6 353.6L330.1 354.3L330.6 356.8L331.1 359.1L331.6 352.0L332.1 356.3L332.6 349.4L333.1 354.3L333.6 354.6L334.1 355.7L334.6 355.2L335.1 354.8L335.6 349.6L336.1 346.8L336.6 359.0L337.1 354.0L337.6 351.0L338.1 358.1L338.6 357.1L339.1 356.5L339.6 363.3L340.1 352.7L340.6 355.1L341.1 355.3L341.6 354.6L342.1 354.1L342.6 346.8L343.1 354.3L343.6 352.0L344.1 356.7L344.6 353.7L345.1 356.0L345.6 355.4L346.1 358.1L346.6 357.8L347.1 353.3L347.6 352.3L348.1 353.3L348.6 357.3L349.1 353.8L349.6 363.8L350.1 351.6L350.6 355.1L351.1 354.0L351.6 350.8L352.1 356.4L352.6 351.6L353.1 356.4L353.6 353.0L354.1 356.3L354.6 353.8L355.1 349.8L355.6 357.2L356.1 357.0L356.6 356.0L357.1 353.8L357.6 345.3L358.1 358.1L358.6 362.0L359.1 357.1L359.6 360.4L360.1 356.8L360.6 354.7L361.2 358.2L361.7 357.2L362.2 361.4L362.7 354.2L363.2 357.5L363.7 351.1L364.2 351.2L364.7 359.6L365.2 356.8L365.7 354.7L366.2 352.2L366.7 360.7L367.2 355.1L367.7 348.3L368.2 355.1L368.7 354.1L369.2 354.8L369.7 359.0L370.2 351.5L370.7 353.9L371.2 354.3L371.7 352.3L372.2 352.1L372.7 361.4L373.2 353.1L373.7 356.8L374.2 354.3L374.7 357.3L375.2 357.8L375.7 351.5L376.2 354.8L376.7 355.8L377.2 355.8L377.7 354.5L378.2 354.8L378.7 363.0L379.2 357.8L379.7 355.6L380.2 352.2L380.7 350.0L381.2 358.0L381.7 348.0L382.2 354.4L382.7 353.0L383.2 356.6L383.7 356.8L384.2 349.7L384.7 355.5L385.2 355.1L385.7 350.7L386.2 348.7L386.7 359.9L387.2 355.3L387.7 354.7L388.2 348.4L388.7 346.1L389.2 354.8L389.7 353.4L390.2 351.6L390.7 350.6L391.2 355.8L391.7 351.7L392.2 357.1L392.7 364.0L393.2 359.4L393.7 353.9L394.2 351.9L394.7 362.5L395.2 360.9L395.7 354.7L396.2 366.4L396.7 352.6L397.2 351.0L397.7 365.0L398.2 351.9L398.7 355.2L399.2 349.6L399.7 353.6L400.2 355.4L400.7 354.1L401.2 351.2L401.7 353.9L402.2 354.4L402.7 359.5L403.2 352.8L403.7 354.4L404.2 348.1L404.7 354.5L405.2 354.8L405.7 356.7L406.2 352.0L406.7 355.3L407.2 356.9L407.7 348.9L408.2 348.3L408.7 356.0L409.2 358.0L409.7 350.5L410.2 358.8L410.7 344.6L411.2 354.9L411.7 348.8L412.2 359.0L412.7 354.6L413.2 350.6L413.7 352.9L414.2 356.3L414.7 345.9L415.2 351.9L415.7 355.2L416.2 356.5L416.7 355.4L417.2 349.7L417.7 357.1L418.2 354.3L418.7 357.3L419.2 350.0L419.7 355.0L420.2 351.4L420.7 352.4L421.2 356.4L421.7 352.0L422.2 351.1L422.7 358.4L423.2 352.0L423.7 342.0L424.2 355.5L424.7 352.2L425.2 359.1L425.7 352.8L426.2 356.5L426.7 351.7L427.2 354.6L427.7 358.5L428.2 350.6L428.7 355.2L429.2 358.0L429.7 354.2L430.2 357.8L430.7 353.0L431.2 354.6L431.7 355.7L432.2 352.1L432.7 358.9L433.2 351.0L433.7 361.4L434.2 348.8L434.7 353.8L435.2 355.3L435.7 357.0L436.2 352.5L436.7 355.0L437.2 355.0L437.7 350.8L438.2 355.9L438.7 355.2L439.2 352.9L439.7 350.6L440.2 354.9L440.7 353.9L441.2 354.3L441.7 351.8L442.2 349.2L442.7 357.7L443.2 354.9L443.7 354.6L444.3 352.3L444.8 349.1L445.3 354.5L445.8 353.7L446.3 350.4L446.8 358.8L447.3 357.1L447.8 356.0L448.3 354.4L448.8 353.6L449.3 356.2L449.8 348.3L450.3 356.9L450.8 355.1L451.3 350.6L451.8 351.7L452.3 354.5L452.8 353.1L453.3 351.5L453.8 354.3L454.3 351.9L454.8 357.3L455.3 353.8L455.8 359.7L456.3 357.0L456.8 357.8L457.3 349.2L457.8 355.2L458.3 352.4L458.8 356.6L459.3 354.0L459.8 354.2L460.3 356.1L460.8 350.0L461.3 358.8L461.8 350.6L462.3 343.3L462.8 355.5L463.3 352.4L463.8 357.9L464.3 352.4L464.8 358.4L465.3 350.0L465.8 353.8L466.3 358.5L466.8 356.5L467.3 357.4L467.8 352.8L468.3 348.7L468.8 353.0L469.3 355.7L469.8 354.4L470.3 350.9L470.8 359.9L471.3 348.8L471.8 349.0L472.3 358.7L472.8 345.3L473.3 354.9L473.8 349.4L474.3 344.0L474.8 353.6L475.3 357.7L475.8 350.8L476.3 350.3L476.8 346.5L477.3 347.4L477.8 346.9L478.3 346.4L478.8 344.9L479.3 346.8L479.8 342.1L480.3 342.9L480.8 346.0L481.3 335.5L481.8 348.6L482.3 338.4L482.8 343.2L483.3 338.9L483.8 336.6L484.3 335.9L484.8 332.4L485.3 338.9L485.8 324.2L486.3 331.4L486.8 334.2L487.3 334.6L487.8 319.9L488.3 320.9L488.8 325.2L489.3 320.9L489.8 317.4L490.3 320.2L490.8 320.5L491.3 317.6L491.8 313.0L492.3 314.4L492.8 317.3L493.3 308.7L493.8 316.0L494.3 311.0L494.8 302.4L495.3 304.4L495.8 302.1L496.3 300.0L496.8 294.1L497.3 295.4L497.8 299.5L498.3 289.1L498.8 298.3L499.3 292.1L499.8 276.6L500.3 275.9L500.8 278.7L501.3 274.7L501.8 271.6L502.3 265.7L502.8 268.8L503.3 265.9L503.8 261.7L504.3 255.7L504.8 251.9L505.3 250.9L505.8 243.5L506.3 246.5L506.8 239.9L507.3 238.7L507.8 236.4L508.3 224.8L508.8 226.6L509.3 225.4L509.8 218.1L510.3 218.1L510.8 208.8L511.3 204.2L511.8 200.2L512.3 204.6L512.8 198.4L513.3 188.3L513.8 192.6L514.3 184.3L514.8 180.3L515.3 187.9L515.8 181.4L516.3 185.7L516.8 188.0L517.3 184.0L517.8 194.8L518.3 198.9L518.8 199.7L519.3 205.8L519.8 206.0L520.3 218.3L520.8 208.4L521.3 219.9L521.8 219.5L522.3 223.7L522.8 227.8L523.3 231.2L523.8 234.7L524.3 243.5L524.8 242.5L525.3 239.1L525.8 249.8L526.3 252.8L526.9 244.3L527.4 250.4L527.9 251.9L528.4 260.4L528.9 262.2L529.4 263.3L529.9 265.9L530.4 270.1L530.9 276.9L531.4 276.1L531.9 280.8L532.4 271.7L532.9 280.6L533.4 281.9L533.9 281.9L534.4 284.7L534.9 284.8L535.4 290.7L535.9 295.7L536.4 285.2L536.9 294.7L537.4 294.5L537.9 296.4L538.4 296.2L538.9 294.9L539.4 293.1L539.9 300.2L540.4 296.1L540.9 300.3L541.4 294.3L541.9 303.7L542.4 299.7L542.9 298.2L543.4 306.3L543.9 301.9L544.4 302.5L544.9 306.6L545.4 305.4L545.9 301.9L546.4 304.7L546.9 308.4L547.4 308.4L547.9 306.9L548.4 305.1L548.9 307.9L549.4 309.2L549.9 307.4L550.4 319.4L550.9 323.0L551.4 323.9L551.9 314.0L552.4 326.0L552.9 319.1L553.4 315.6L553.9 325.8L554.4 324.2L554.9 323.8L555.4 321.3L555.9 330.2L556.4 324.7L556.9 324.4L557.4 327.3L557.9 328.2L558.4 325.3L558.9 329.0L559.4 330.1L559.9 331.3L560.4 328.0L560.9 331.5L561.4 328.4L561.9 329.9L562.4 325.6L562.9 331.6L563.4 327.9L563.9 326.3L564.4 325.3L564.9 322.1L565.4 324.0L565.9 321.5L566.4 313.0L566.9 320.4L567.4 326.3L567.9 326.9L568.4 318.9L568.9 321.8L569.4 318.8L569.9 319.7L570.4 313.9L570.9 313.6L571.4 320.8L571.9 315.1L572.4 316.2L572.9 318.9L573.4 311.2L573.9 313.1L574.4 310.2L574.9 302.0L575.4 304.8L575.9 304.4L576.4 308.4L576.9 309.9L577.4 300.2L577.9 304.4L578.4 301.9L578.9 302.2L579.4 299.0L579.9 289.0L580.4 296.4L580.9 294.3L581.4 290.6L581.9 287.7L582.4 291.4L582.9 291.4L583.4 285.2L583.9 281.9L584.4 281.9L584.9 280.7L585.4 278.4L585.9 274.9L586.4 272.4L586.9 276.1L587.4 270.8L587.9 266.1L588.4 266.2L588.9 269.0L589.4 264.0L589.9 261.3L590.4 257.5L590.9 265.3L591.4 256.8L591.9 260.3L592.4 257.5L592.9 255.3L593.4 260.2L593.9 259.5L594.4 256.6L594.9 253.8L595.4 258.8L595.9 265.4L596.4 260.5L596.9 257.3L597.4 255.2L597.9 261.6L598.4 261.5L598.9 261.6L599.4 262.1L599.9 266.3L600.4 265.9L600.9 265.0L601.4 266.7L601.9 268.4L602.4 273.3L602.9 273.1L603.4 275.0L603.9 270.3L604.4 270.3L604.9 275.9L605.4 273.3L605.9 281.5L606.4 283.2L606.9 288.3L607.4 284.8L607.9 288.8L608.4 288.6L608.9 289.0L609.4 293.2L610.0 300.0L610.5 294.8L611.0 295.8L611.5 296.3L612.0 295.0L612.5 298.9L613.0 300.0L613.5 294.0L614.0 297.2L614.5 302.1L615.0 305.9L615.5 305.1L616.0 303.1L616.5 302.4L617.0 297.9L617.5 307.6L618.0 306.9L618.5 309.2L619.0 308.2L619.5 310.5L620.0 313.5L620.5 306.9L621.0 310.5L621.5 307.2L622.0 313.9L622.5 311.9L623.0 311.1L623.5 320.4L624.0 319.1L624.5 312.6L625.0 315.4L625.5 322.7L626.0 319.5L626.5 321.2L627.0 319.8L627.5 313.4L628.0 321.3L628.5 312.9L629.0 321.3L629.5 323.6L630.0 316.2L630.5 318.9L631.0 315.2L631.5 316.7L632.0 320.3L632.5 320.3L633.0 331.0L633.5 328.5L634.0 324.7L634.5 326.1L635.0 324.9L635.5 329.6L636.0 324.7L636.5 322.2L637.0 327.7L637.5 327.4L638.0 329.1L638.5 328.2L639.0 331.2L639.5 334.3L640.0 332.4L640.5 333.3L641.0 339.5L641.5 334.1L642.0 335.2L642.5 334.8L643.0 337.7L643.5 334.4L644.0 334.1L644.5 339.0L645.0 335.7L645.5 334.4L646.0 334.7L646.5 340.7L647.0 341.3L647.5 338.0L648.0 341.9L648.5 330.0L649.0 341.6L649.5 341.8L650.0 337.1L650.5 341.2L651.0 347.9L651.5 340.6L652.0 343.8L652.5 342.5L653.0 346.5L653.5 344.3L654.0 342.0L654.5 342.0L655.0 345.8L655.5 344.7L656.0 345.4L656.5 342.3L657.0 343.5L657.5 347.6L658.0 341.2L658.5 345.9L659.0 342.3L659.5 346.9L660.0 342.3L660.5 344.3L661.0 343.8L661.5 342.4L662.0 342.7L662.5 343.7L663.0 343.8L663.5 351.6L664.0 344.8L664.5 352.1L665.0 352.4L665.5 346.6L666.0 345.7L666.5 339.9L667.0 342.8L667.5 341.4L668.0 346.3L668.5 343.8L669.0 341.4L669.5 343.7L670.0 344.4L670.5 345.3L671.0 348.9L671.5 348.9L672.0 350.8L672.5 344.6L673.0 347.0L673.5 348.5L674.0 345.0L674.5 348.3L675.0 342.8L675.5 340.0L676.0 345.0L676.5 349.0L677.0 351.9L677.5 339.9L678.0 344.5L678.5 351.1L679.0 343.4L679.5 352.9L680.0 348.8L680.5 348.2L681.0 348.7L681.5 351.5L682.0 339.4L682.5 349.1L683.0 346.5L683.5 347.8L684.0 353.5L684.5 350.0L685.0 347.4L685.5 345.0L686.0 349.4L686.5 347.0L687.0 349.5L687.5 346.3L688.0 356.9L688.5 346.3L689.0 350.6L689.5 350.5L690.0 358.3L690.5 352.2L691.0 346.5L691.5 340.6L692.0 351.1L692.6 350.9L693.1 347.0L693.6 347.7L694.1 350.8L694.6 349.4L695.1 350.2L695.6 346.7L696.1 346.2L696.6 342.9L697.1 345.8L697.6 346.7L698.1 348.2L698.6 345.8L699.1 352.5L699.6 341.7L700.1 348.2L700.6 344.3L701.1 352.0L701.6 345.7L702.1 347.9L702.6 350.0L703.1 351.7L703.6 352.4L704.1 343.2L704.6 345.2L705.1 349.1L705.6 348.9L706.1 352.1L706.6 356.0L707.1 355.8L707.6 351.8L708.1 350.2L708.6 353.8L709.1 347.0L709.6 348.0L710.1 349.3L710.6 356.0L711.1 350.7L711.6 350.0L712.1 354.4L712.6 357.6L713.1 343.4L713.6 347.9L714.1 351.4L714.6 344.6L715.1 346.3L715.6 348.6L716.1 349.4L716.6 347.5L717.1 345.1L717.6 349.8L718.1 350.6L718.6 347.6L719.1 365.0L719.6 348.9L720.1 350.4L720.6 348.8L721.1 349.2L721.6 347.2L722.1 347.8L722.6 347.7L723.1 348.2L723.6 346.0L724.1 350.2L724.6 341.7L725.1 352.8L725.6 346.0L726.1 344.8L726.6 350.3L727.1 346.9L727.6 340.4L728.1 344.9L728.6 347.1L729.1 353.9L729.6 341.8L730.1 342.2L730.6 339.9L731.1 334.4L731.6 341.1L732.1 339.9L732.6 341.9L733.1 338.9L733.6 338.0L734.1 334.4L734.6 334.3L735.1 338.1L735.6 336.2L736.1 328.9L736.6 336.2L737.1 329.5L737.6 325.6L738.1 326.7L738.6 328.5L739.1 323.6L739.6 326.2L740.1 326.5L740.6 326.2L741.1 320.5L741.6 321.2L742.1 317.2L742.6 322.8L743.1 321.8L743.6 321.2L744.1 317.8L744.6 320.2L745.1 313.3L745.6 314.0L746.1 317.4L746.6 323.0L747.1 317.8L747.6 305.1L748.1 309.1L748.6 307.1L749.1 307.8L749.6 303.7L750.1 310.5L750.6 309.5L751.1 307.0L751.6 299.9L752.1 296.5L752.6 296.2L753.1 297.1L753.6 300.0L754.1 291.6L754.6 294.2L755.1 292.2L755.6 291.3L756.1 291.6L756.6 291.4L757.1 289.9L757.6 291.3L758.1 284.8L758.6 286.0L759.1 283.4L759.6 294.8L760.1 286.0L760.6 291.9L761.1 294.4L761.6 298.9L762.1 301.2L762.6 305.9L763.1 300.2L763.6 307.3L764.1 307.2L764.6 310.0L765.1 317.8L765.6 320.0L766.1 321.8L766.6 318.4L767.1 323.0L767.6 324.3L768.1 323.8L768.6 328.1L769.1 322.1L769.6 333.9L770.1 327.8L770.6 328.4L771.1 340.7L771.6 332.3L772.1 335.4L772.6 334.3L773.1 345.0L773.6 338.5L774.1 343.7L774.6 342.5L775.1 337.0L775.7 342.8L776.2 350.5L776.7 348.0L777.2 347.5L777.7 340.4L778.2 346.7L778.7 353.4L779.2 338.9L779.7 344.6L780.2 344.7L780.7 349.1L781.2 341.7L781.7 347.5L782.2 354.4L782.7 351.9L783.2 351.2L783.7 349.3L784.2 346.4L784.7 352.0L785.2 352.0L785.7 342.3L786.2 349.8L786.7 352.1L787.2 350.2L787.7 354.8L788.2 348.7L788.7 347.3L789.2 352.8L789.7 347.4L790.2 352.0L790.7 350.1L791.2 353.8L791.7 354.1L792.2 356.6L792.7 350.7L793.2 352.6L793.7 352.6L794.2 355.7L794.7 356.0L795.2 355.5L795.7 350.5L796.2 351.2L796.7 354.7L797.2 351.4L797.7 346.4L798.2 352.3L798.7 345.7L799.2 351.4L799.7 348.3L800.2 354.9L800.7 349.1L801.2 357.4L801.7 352.6L802.2 354.7L802.7 360.6L803.2 358.4L803.7 349.7L804.2 352.0L804.7 349.2L805.2 353.0L805.7 363.8L806.2 352.9L806.7 355.7L807.2 356.6L807.7 355.3L808.2 358.1L808.7 357.1L809.2 349.5L809.7 352.3L810.2 356.1L810.7 355.3L811.2 350.5L811.7 352.5L812.2 353.2L812.7 358.2L813.2 355.4L813.7 357.9L814.2 364.6L814.7 350.8L815.2 355.1L815.7 355.4L816.2 357.3L816.7 351.4L817.2 346.7L817.7 352.0L818.2 350.8L818.7 358.4L819.2 353.4L819.7 353.3L820.2 348.9L820.7 354.1L821.2 357.4L821.7 354.3L822.2 355.6L822.7 349.1L823.2 351.8L823.7 353.0L824.2 353.5L824.7 351.2L825.2 355.9L825.7 357.4L826.2 360.8L826.7 350.1L827.2 352.5L827.7 352.0L828.2 354.1L828.7 348.5L829.2 357.7L829.7 350.1L830.2 357.2L830.7 355.9L831.2 358.6L831.7 354.0L832.2 355.4L832.7 352.9L833.2 356.4L833.7 359.2L834.2 352.4L834.7 350.0L835.2 351.9L835.7 354.6L836.2 353.1L836.7 360.4L837.2 355.7L837.7 350.5L838.2 352.9L838.7 357.5L839.2 351.6L839.7 355.0L840.2 352.0L840.7 359.5L841.2 356.4L841.7 353.5L842.2 353.6L842.7 352.7L843.2 354.7L843.7 355.3L844.2 353.0L844.7 351.7L845.2 359.9L845.7 355.8L846.2 355.4L846.7 354.2L847.2 351.2L847.7 359.3L848.2 352.9L848.7 360.8L849.2 357.4L849.7 356.6L850.2 355.7L850.7 356.9L851.2 356.6L851.7 356.0L852.2 355.8L852.7 361.2L853.2 359.7L853.7 356.4L854.2 353.0L854.7 351.4L855.2 345.0L855.7 354.5L856.2 357.6L856.7 354.3L857.2 352.6L857.7 354.5L858.3 358.6L858.8 355.3L859.3 355.1L859.8 359.9L860.3 359.2L860.8 350.9L861.3 362.7L861.8 354.4L862.3 355.9L862.8 350.2L863.3 352.9L863.8 359.9L864.3 350.7L864.8 357.0L865.3 348.1L865.8 349.3L866.3 355.3L866.8 352.3L867.3 354.4L867.8 358.1L868.3 351.3L868.8 353.5L869.3 352.1L869.8 351.3L870.3 350.1L870.8 351.4L871.3 355.3L871.8 354.7L872.3 353.6L872.8 355.4L873.3 356.3L873.8 348.6L874.3 353.3L874.8 348.4L875.3 357.6L875.8 355.1L876.3 356.5L876.8 356.3L877.3 356.0L877.8 355.4L878.3 356.5L878.8 348.8L879.3 352.6L879.8 357.5L880.3 356.8L880.8 352.4L881.3 353.1L881.8 357.1L882.3 351.8L882.8 359.9L883.3 357.6L883.8 349.0L884.3 363.9L884.8 355.7L885.3 351.6L885.8 355.5L886.3 357.7L886.8 358.0L887.3 362.1L887.8 359.5L888.3 354.7L888.8 356.9L889.3 355.0L889.8 355.5L890.3 354.0L890.8 360.7L891.3 356.0L891.8 356.1L892.3 356.0L892.8 358.0L893.3 362.5L893.8 352.8L894.3 352.2L894.8 346.8L895.3 352.4L895.8 349.3L896.3 352.9L896.8 356.3L897.3 353.3L897.8 359.0L898.3 354.1L898.8 355.3L899.3 358.6L899.8 350.8L900.3 351.1L900.8 353.4L901.3 352.1L901.8 349.3L902.3 355.4L902.8 359.6L903.3 358.2L903.8 352.6L904.3 354.2L904.8 360.1L905.3 350.4L905.8 354.2L906.3 349.4L906.8 351.1L907.3 356.4L907.8 354.6L908.3 357.5L908.8 357.8L909.3 356.0L909.8 353.2L910.3 350.2L910.8 358.0L911.3 352.5L911.8 354.8L912.3 355.7L912.8 351.0L913.3 356.1L913.8 350.1L914.3 356.0L914.8 358.1L915.3 352.2L915.8 359.9L916.3 359.0L916.8 355.5L917.3 354.9L917.8 355.8L918.3 361.7L918.8 359.5L919.3 353.1L919.8 353.0L920.3 358.3L920.8 353.9L921.3 354.1L921.8 351.3L922.3 357.4L922.8 346.7L923.3 355.9L923.8 349.9L924.3 351.6L924.8 358.3L925.3 355.9L925.8 353.9L926.3 351.3L926.8 359.6L927.3 357.5L927.8 352.7L928.3 352.1L928.8 358.5L929.3 357.9L929.8 353.4L930.3 358.4L930.8 354.0L931.3 351.7L931.8 354.8L932.3 364.1L932.8 350.8L933.3 350.9L933.8 349.9L934.3 351.9L934.8 360.7L935.3 349.9L935.8 353.6L936.3 351.6L936.8 355.4" fill="none" stroke="#1e1eab" stroke-width="1" shape-rendering="crispEdges"/><path d="M311.6 354.8L312.1 351.4L312.6 355.8L313.1 361.8L313.6 354.4L314.1 354.7L314.6 361.0L315.1 356.7L315.6 363.5L316.1 356.6L316.6 350.6L317.1 357.1L317.6 350.2L318.1 354.1L318.6 357.5L319.1 361.1L319.6 352.2L320.1 352.5L320.6 363.2L321.1 356.4L321.6 351.0L322.1 357.5L322.6 353.5L323.1 361.7L323.6 360.0L324.1 352.3L324.6 359.0L325.1 360.0L325.6 359.8L326.1 356.2L326.6 360.4L327.1 355.3L327.6 352.9L328.1 349.5L328.6 356.3L329.1 349.2L329.6 352.9L330.1 355.7L330.6 353.0L331.1 346.3L331.6 346.4L332.1 352.2L332.6 355.2L333.1 351.9L333.6 354.1L334.1 354.3L334.6 354.0L335.1 348.5L335.6 359.1L336.1 355.1L336.6 358.7L337.1 351.8L337.6 351.0L338.1 350.1L338.6 356.1L339.1 354.7L339.6 352.2L340.1 354.2L340.6 353.8L341.1 353.7L341.6 353.9L342.1 355.3L342.6 353.3L343.1 360.0L343.6 356.3L344.1 359.5L344.6 355.2L345.1 357.4L345.6 353.0L346.1 350.4L346.6 359.2L347.1 357.6L347.6 353.7L348.1 349.8L348.6 352.1L349.1 353.3L349.6 355.1L350.1 356.4L350.6 353.5L351.1 353.1L351.6 354.3L352.1 356.9L352.6 360.5L353.1 357.8L353.6 356.2L354.1 358.9L354.6 353.7L355.1 359.9L355.6 355.9L356.1 353.6L356.6 352.0L357.1 354.0L357.6 350.6L358.1 356.9L358.6 357.6L359.1 351.0L359.6 358.0L360.1 355.4L360.6 360.9L361.2 350.9L361.7 352.3L362.2 357.5L362.7 361.0L363.2 354.0L363.7 353.9L364.2 350.8L364.7 348.4L365.2 354.0L365.7 355.6L366.2 355.7L366.7 355.9L367.2 359.7L367.7 358.0L368.2 355.2L368.7 360.6L369.2 359.5L369.7 350.6L370.2 357.2L370.7 352.1L371.2 351.0L371.7 354.8L372.2 352.0L372.7 355.5L373.2 357.9L373.7 355.3L374.2 354.6L374.7 354.4L375.2 354.6L375.7 356.3L376.2 351.1L376.7 355.6L377.2 356.3L377.7 351.6L378.2 358.4L378.7 354.9L379.2 349.7L379.7 354.6L380.2 349.9L380.7 355.7L381.2 356.6L381.7 355.4L382.2 356.8L382.7 356.1L383.2 356.4L383.7 350.3L384.2 353.4L384.7 355.6L385.2 357.4L385.7 343.6L386.2 355.5L386.7 349.9L387.2 358.9L387.7 357.4L388.2 350.5L388.7 358.7L389.2 358.6L389.7 355.0L390.2 357.4L390.7 355.8L391.2 354.3L391.7 351.8L392.2 354.2L392.7 353.8L393.2 350.2L393.7 349.9L394.2 356.7L394.7 361.3L395.2 358.3L395.7 351.1L396.2 356.5L396.7 357.3L397.2 356.4L397.7 349.2L398.2 354.6L398.7 356.1L399.2 357.2L399.7 358.6L400.2 345.0L400.7 354.9L401.2 354.3L401.7 355.9L402.2 351.1L402.7 360.3L403.2 361.5L403.7 356.8L404.2 353.6L404.7 346.9L405.2 355.1L405.7 357.8L406.2 355.6L406.7 357.5L407.2 357.5L407.7 354.5L408.2 353.8L408.7 357.1L409.2 351.0L409.7 355.1L410.2 354.4L410.7 356.6L411.2 353.5L411.7 353.4L412.2 352.5L412.7 357.6L413.2 352.6L413.7 356.8L414.2 354.4L414.7 352.2L415.2 349.5L415.7 357.2L416.2 358.7L416.7 354.3L417.2 350.5L417.7 355.9L418.2 346.3L418.7 361.4L419.2 349.5L419.7 350.7L420.2 350.9L420.7 357.7L421.2 350.0L421.7 350.7L422.2 350.4L422.7 355.5L423.2 355.6L423.7 350.2L424.2 353.5L424.7 356.0L425.2 357.7L425.7 353.8L426.2 359.5L426.7 352.7L427.2 354.2L427.7 360.2L428.2 353.2L428.7 350.5L429.2 353.9L429.7 359.4L430.2 356.9L430.7 351.8L431.2 359.3L431.7 356.1L432.2 350.8L432.7 355.8L433.2 356.8L433.7 351.9L434.2 349.1L434.7 353.4L435.2 359.4L435.7 360.4L436.2 355.7L436.7 361.1L437.2 355.1L437.7 351.6L438.2 364.1L438.7 355.4L439.2 353.6L439.7 356.7L440.2 353.4L440.7 353.0L441.2 351.1L441.7 345.3L442.2 353.7L442.7 357.9L443.2 358.4L443.7 359.1L444.3 352.3L444.8 353.6L445.3 353.2L445.8 354.1L446.3 349.2L446.8 350.9L447.3 349.0L447.8 357.2L448.3 355.9L448.8 359.4L449.3 357.1L449.8 354.5L450.3 359.1L450.8 357.0L451.3 347.7L451.8 355.4L452.3 363.1L452.8 359.2L453.3 355.0L453.8 351.7L454.3 354.8L454.8 351.4L455.3 353.2L455.8 358.1L456.3 350.5L456.8 355.6L457.3 343.2L457.8 355.9L458.3 354.2L458.8 355.5L459.3 354.4L459.8 351.8L460.3 353.9L460.8 349.0L461.3 351.5L461.8 347.4L462.3 352.6L462.8 348.2L463.3 348.4L463.8 353.0L464.3 343.5L464.8 347.0L465.3 350.3L465.8 352.7L466.3 352.2L466.8 352.4L467.3 350.7L467.8 355.6L468.3 351.3L468.8 353.5L469.3 345.5L469.8 348.5L470.3 345.2L470.8 342.6L471.3 348.8L471.8 342.9L472.3 348.2L472.8 346.8L473.3 351.8L473.8 347.7L474.3 342.5L474.8 345.3L475.3 347.8L475.8 346.0L476.3 348.1L476.8 347.4L477.3 349.6L477.8 340.2L478.3 339.7L478.8 343.4L479.3 347.3L479.8 342.9L480.3 330.2L480.8 345.7L481.3 342.4L481.8 341.7L482.3 336.8L482.8 343.6L483.3 337.7L483.8 341.0L484.3 338.6L484.8 339.9L485.3 332.2L485.8 334.9L486.3 332.7L486.8 325.1L487.3 326.1L487.8 317.4L488.3 322.5L488.8 322.0L489.3 320.2L489.8 309.3L490.3 312.9L490.8 316.6L491.3 312.8L491.8 314.0L492.3 308.2L492.8 310.6L493.3 309.2L493.8 304.0L494.3 299.1L494.8 299.2L495.3 297.9L495.8 297.9L496.3 303.6L496.8 292.9L497.3 290.2L497.8 284.8L498.3 277.7L498.8 278.3L499.3 284.3L499.8 275.2L500.3 273.3L500.8 267.1L501.3 267.0L501.8 270.7L502.3 264.3L502.8 258.8L503.3 261.2L503.8 250.9L504.3 247.8L504.8 239.4L505.3 240.0L505.8 238.1L506.3 232.7L506.8 228.6L507.3 221.6L507.8 224.6L508.3 225.2L508.8 203.6L509.3 206.6L509.8 205.1L510.3 192.8L510.8 201.3L511.3 196.0L511.8 191.1L512.3 184.6L512.8 184.6L513.3 176.9L513.8 177.6L514.3 168.5L514.8 168.1L515.3 172.6L515.8 169.8L516.3 176.7L516.8 176.1L517.3 178.6L517.8 173.6L518.3 185.3L518.8 193.1L519.3 190.0L519.8 198.0L520.3 191.2L520.8 198.9L521.3 199.6L521.8 210.2L522.3 216.2L522.8 215.2L523.3 224.9L523.8 227.0L524.3 229.4L524.8 230.3L525.3 238.3L525.8 243.3L526.3 234.0L526.9 244.1L527.4 245.9L527.9 246.3L528.4 249.9L528.9 256.9L529.4 259.2L529.9 254.1L530.4 257.4L530.9 261.2L531.4 260.0L531.9 274.6L532.4 269.5L532.9 273.0L533.4 280.9L533.9 274.9L534.4 275.9L534.9 279.3L535.4 292.4L535.9 284.9L536.4 284.6L536.9 287.0L537.4 286.0L537.9 286.0L538.4 283.5L538.9 288.5L539.4 280.7L539.9 290.1L540.4 290.6L540.9 289.6L541.4 293.4L541.9 295.1L542.4 290.3L542.9 303.1L543.4 302.6L543.9 285.2L544.4 295.4L544.9 296.9L545.4 298.6L545.9 299.5L546.4 304.7L546.9 303.2L547.4 306.7L547.9 299.8L548.4 302.8L548.9 305.5L549.4 306.1L549.9 309.2L550.4 314.0L550.9 304.9L551.4 309.7L551.9 313.7L552.4 312.1L552.9 310.8L553.4 309.5L553.9 315.1L554.4 315.6L554.9 320.4L555.4 315.9L555.9 318.4L556.4 319.4L556.9 328.5L557.4 322.7L557.9 323.7L558.4 324.2L558.9 336.4L559.4 334.0L559.9 326.6L560.4 331.1L560.9 326.6L561.4 328.4L561.9 324.6L562.4 328.9L562.9 330.0L563.4 323.6L563.9 325.7L564.4 328.1L564.9 330.2L565.4 311.2L565.9 322.9L566.4 321.8L566.9 327.1L567.4 323.0L567.9 319.2L568.4 316.7L568.9 314.3L569.4 319.0L569.9 313.9L570.4 310.7L570.9 315.9L571.4 313.4L571.9 318.6L572.4 314.2L572.9 315.2L573.4 307.0L573.9 309.1L574.4 301.8L574.9 305.6L575.4 302.1L575.9 301.8L576.4 301.6L576.9 304.8L577.4 293.7L577.9 298.6L578.4 303.5L578.9 297.7L579.4 297.9L579.9 287.5L580.4 285.7L580.9 281.8L581.4 277.2L581.9 285.2L582.4 287.4L582.9 281.8L583.4 274.8L583.9 283.7L584.4 274.0L584.9 266.6L585.4 270.4L585.9 266.0L586.4 267.1L586.9 255.9L587.4 253.4L587.9 262.4L588.4 261.8L588.9 254.9L589.4 251.2L589.9 250.4L590.4 248.4L590.9 246.6L591.4 245.3L591.9 242.3L592.4 247.8L592.9 249.6L593.4 247.6L593.9 238.7L594.4 243.1L594.9 243.7L595.4 242.1L595.9 243.1L596.4 239.6L596.9 251.7L597.4 248.7L597.9 247.3L598.4 247.7L598.9 252.7L599.4 257.9L599.9 254.5L600.4 257.5L600.9 256.9L601.4 254.1L601.9 257.0L602.4 267.3L602.9 266.6L603.4 263.3L603.9 261.4L604.4 267.4L604.9 268.2L605.4 276.4L605.9 274.5L606.4 277.5L606.9 275.8L607.4 279.4L607.9 283.4L608.4 286.1L608.9 283.3L609.4 288.3L610.0 283.3L610.5 287.9L611.0 290.4L611.5 287.1L612.0 295.7L612.5 289.1L613.0 297.4L613.5 291.8L614.0 297.8L614.5 299.8L615.0 304.0L615.5 298.2L616.0 297.6L616.5 305.4L617.0 294.9L617.5 302.0L618.0 306.7L618.5 296.2L619.0 305.4L619.5 299.3L620.0 315.4L620.5 298.2L621.0 305.9L621.5 307.3L622.0 306.8L622.5 312.8L623.0 305.9L623.5 308.4L624.0 309.4L624.5 313.3L625.0 316.1L625.5 311.3L626.0 310.3L626.5 313.4L627.0 315.3L627.5 318.1L628.0 313.2L628.5 311.2L629.0 317.6L629.5 320.8L630.0 309.5L630.5 324.6L631.0 318.7L631.5 320.7L632.0 316.2L632.5 322.1L633.0 328.2L633.5 326.9L634.0 323.1L634.5 324.2L635.0 327.1L635.5 327.4L636.0 331.6L636.5 332.0L637.0 329.6L637.5 330.4L638.0 329.1L638.5 333.4L639.0 324.2L639.5 336.8L640.0 328.0L640.5 329.8L641.0 326.7L641.5 328.0L642.0 338.2L642.5 332.5L643.0 331.3L643.5 330.9L644.0 332.7L644.5 336.8L645.0 330.4L645.5 335.7L646.0 337.3L646.5 335.2L647.0 337.7L647.5 338.8L648.0 336.2L648.5 327.5L649.0 336.0L649.5 337.1L650.0 339.3L650.5 336.7L651.0 342.5L651.5 336.8L652.0 337.8L652.5 338.7L653.0 337.6L653.5 340.3L654.0 337.5L654.5 338.2L655.0 337.1L655.5 340.7L656.0 337.8L656.5 341.9L657.0 336.9L657.5 342.2L658.0 337.3L658.5 341.1L659.0 342.2L659.5 345.8L660.0 340.0L660.5 341.1L661.0 342.3L661.5 341.1L662.0 342.2L662.5 346.0L663.0 347.1L663.5 340.7L664.0 342.4L664.5 337.7L665.0 336.1L665.5 340.4L666.0 341.2L666.5 341.5L667.0 343.3L667.5 347.2L668.0 353.2L668.5 341.2L669.0 340.5L669.5 344.0L670.0 343.8L670.5 340.9L671.0 341.2L671.5 343.8L672.0 345.5L672.5 342.6L673.0 342.0L673.5 337.0L674.0 348.3L674.5 343.3L675.0 348.3L675.5 346.9L676.0 337.0L676.5 347.0L677.0 346.0L677.5 347.8L678.0 342.7L678.5 347.4L679.0 351.9L679.5 345.6L680.0 343.2L680.5 346.4L681.0 345.8L681.5 349.0L682.0 350.0L682.5 346.7L683.0 350.9L683.5 348.5L684.0 350.5L684.5 348.0L685.0 344.4L685.5 347.4L686.0 343.3L686.5 346.0L687.0 348.0L687.5 350.7L688.0 347.1L688.5 351.7L689.0 344.9L689.5 352.4L690.0 352.6L690.5 350.7L691.0 353.7L691.5 347.4L692.0 352.1L692.6 350.4L693.1 345.7L693.6 355.8L694.1 348.9L694.6 345.9L695.1 344.4L695.6 347.6L696.1 350.5L696.6 344.8L697.1 344.9L697.6 340.3L698.1 340.6L698.6 349.4L699.1 343.5L699.6 347.6L700.1 352.1L700.6 345.9L701.1 343.8L701.6 356.9L702.1 343.8L702.6 351.6L703.1 342.9L703.6 347.9L704.1 347.8L704.6 343.8L705.1 350.0L705.6 341.4L706.1 352.3L706.6 351.1L707.1 352.9L707.6 347.1L708.1 349.3L708.6 346.2L709.1 345.2L709.6 346.3L710.1 345.4L710.6 345.4L711.1 349.6L711.6 352.0L712.1 352.9L712.6 346.8L713.1 351.4L713.6 353.0L714.1 352.6L714.6 350.4L715.1 348.8L715.6 350.6L716.1 355.6L716.6 347.8L717.1 357.7L717.6 350.7L718.1 345.6L718.6 348.2L719.1 344.6L719.6 348.3L720.1 346.4L720.6 348.1L721.1 349.6L721.6 346.5L722.1 344.1L722.6 354.4L723.1 350.1L723.6 354.4L724.1 350.1L724.6 351.1L725.1 348.1L725.6 347.2L726.1 342.4L726.6 340.9L727.1 347.6L727.6 346.0L728.1 341.5L728.6 345.5L729.1 344.1L729.6 348.7L730.1 339.0L730.6 340.1L731.1 343.9L731.6 344.7L732.1 343.0L732.6 336.7L733.1 339.1L733.6 340.8L734.1 336.7L734.6 331.6L735.1 329.3L735.6 328.1L736.1 331.5L736.6 330.1L737.1 328.5L737.6 326.8L738.1 324.8L738.6 330.5L739.1 328.6L739.6 326.3L740.1 321.4L740.6 324.6L741.1 324.5L741.6 317.1L742.1 314.5L742.6 321.8L743.1 318.0L743.6 312.4L744.1 316.8L744.6 309.2L745.1 318.0L745.6 312.3L746.1 307.8L746.6 303.3L747.1 304.0L747.6 311.7L748.1 310.0L748.6 306.3L749.1 298.9L749.6 297.9L750.1 295.2L750.6 295.2L751.1 298.3L751.6 296.4L752.1 296.9L752.6 289.6L753.1 295.7L753.6 289.7L754.1 287.8L754.6 283.1L755.1 288.9L755.6 283.7L756.1 287.4L756.6 279.1L757.1 282.9L757.6 281.5L758.1 282.6L758.6 281.1L759.1 282.9L759.6 284.5L760.1 279.9L760.6 289.2L761.1 287.2L761.6 287.6L762.1 297.1L762.6 303.3L763.1 296.9L763.6 307.9L764.1 308.3L764.6 309.7L765.1 311.5L765.6 316.8L766.1 319.9L766.6 315.5L767.1 319.8L767.6 315.4L768.1 326.9L768.6 325.6L769.1 327.1L769.6 326.6L770.1 329.3L770.6 331.3L771.1 325.5L771.6 334.1L772.1 333.1L772.6 335.1L773.1 339.0L773.6 335.3L774.1 345.6L774.6 336.1L775.1 346.2L775.7 342.3L776.2 341.3L776.7 343.8L777.2 344.3L777.7 338.7L778.2 334.9L778.7 340.1L779.2 343.7L779.7 346.9L780.2 347.9L780.7 341.3L781.2 342.9L781.7 341.8L782.2 343.4L782.7 342.7L783.2 349.9L783.7 351.0L784.2 352.2L784.7 349.2L785.2 350.7L785.7 349.3L786.2 354.0L786.7 349.3L787.2 347.2L787.7 349.8L788.2 359.7L788.7 350.6L789.2 351.7L789.7 345.5L790.2 351.3L790.7 348.6L791.2 352.3L791.7 349.9L792.2 347.7L792.7 352.2L793.2 350.3L793.7 350.9L794.2 349.5L794.7 352.2L795.2 350.2L795.7 358.4L796.2 352.9L796.7 349.3L797.2 350.0L797.7 355.8L798.2 355.4L798.7 351.3L799.2 351.5L799.7 351.3L800.2 352.8L800.7 352.6L801.2 349.6L801.7 356.6L802.2 358.3L802.7 350.1L803.2 356.4L803.7 351.3L804.2 356.1L804.7 360.0L805.2 348.3L805.7 354.0L806.2 358.7L806.7 354.5L807.2 354.4L807.7 354.5L808.2 353.2L808.7 357.9L809.2 354.9L809.7 352.3L810.2 351.7L810.7 353.5L811.2 356.7L811.7 365.0L812.2 348.8L812.7 357.9L813.2 355.5L813.7 353.9L814.2 352.4L814.7 354.1L815.2 356.9L815.7 354.2L816.2 342.6L816.7 345.3L817.2 354.8L817.7 351.8L818.2 360.2L818.7 353.3L819.2 351.6L819.7 355.2L820.2 347.8L820.7 351.1L821.2 352.0L821.7 363.3L822.2 356.3L822.7 351.7L823.2 355.9L823.7 360.3L824.2 356.2L824.7 348.9L825.2 351.8L825.7 351.2L826.2 353.6L826.7 348.6L827.2 364.0L827.7 358.4L828.2 347.6L828.7 350.6L829.2 353.4L829.7 355.5L830.2 360.6L830.7 355.8L831.2 354.8L831.7 357.6L832.2 349.6L832.7 350.8L833.2 355.4L833.7 351.2L834.2 354.5L834.7 353.5L835.2 356.1L835.7 345.8L836.2 359.7L836.7 355.0L837.2 350.8L837.7 350.9L838.2 360.2L838.7 357.8L839.2 354.8L839.7 357.3L840.2 356.9L840.7 355.4L841.2 355.1L841.7 350.7L842.2 364.1L842.7 350.9L843.2 355.4L843.7 352.6L844.2 355.8L844.7 346.4L845.2 360.9L845.7 350.5L846.2 356.2L846.7 355.5L847.2 349.7L847.7 355.4L848.2 351.5L848.7 349.6L849.2 356.8L849.7 347.7L850.2 350.3L850.7 355.5L851.2 353.5L851.7 357.2L852.2 353.7L852.7 351.7L853.2 351.3L853.7 354.0L854.2 356.6L854.7 357.1L855.2 358.2L855.7 355.8L856.2 352.8L856.7 356.9L857.2 357.3L857.7 358.6L858.3 352.9L858.8 355.8L859.3 360.6L859.8 348.8L860.3 351.3L860.8 354.9L861.3 356.2L861.8 355.1L862.3 358.2L862.8 351.5L863.3 350.2L863.8 351.4L864.3 354.2L864.8 354.2L865.3 353.1L865.8 349.0L866.3 357.8L866.8 355.1L867.3 357.4L867.8 359.2L868.3 353.8L868.8 351.0L869.3 358.7L869.8 351.6L870.3 352.7L870.8 353.4L871.3 350.3L871.8 357.3L872.3 349.4L872.8 356.2L873.3 353.1L873.8 360.4L874.3 351.6L874.8 354.9L875.3 357.0L875.8 358.6L876.3 354.3L876.8 350.4L877.3 353.2L877.8 356.2L878.3 357.7L878.8 358.7L879.3 356.2L879.8 360.6L880.3 356.3L880.8 351.2L881.3 355.2L881.8 355.6L882.3 357.1L882.8 352.5L883.3 352.8L883.8 350.1L884.3 357.5L884.8 358.9L885.3 357.2L885.8 359.3L886.3 355.2L886.8 356.6L887.3 358.1L887.8 355.2L888.3 351.6L888.8 352.6L889.3 357.3L889.8 355.0L890.3 353.4L890.8 351.5L891.3 356.3L891.8 359.6L892.3 353.9L892.8 358.5L893.3 357.2L893.8 356.0L894.3 351.9L894.8 356.7L895.3 354.5L895.8 355.8L896.3 357.0L896.8 352.0L897.3 356.7L897.8 353.4L898.3 354.1L898.8 361.5L899.3 360.8L899.8 366.0L900.3 354.1L900.8 354.2L901.3 356.9L901.8 356.9L902.3 356.2L902.8 357.3L903.3 355.2L903.8 355.2L904.3 358.2L904.8 350.1L905.3 351.6L905.8 356.5L906.3 347.5L906.8 346.6L907.3 350.8L907.8 350.9L908.3 357.1L908.8 356.2L909.3 360.6L909.8 356.5L910.3 351.7L910.8 356.5L911.3 360.9L911.8 349.5L912.3 348.2L912.8 349.8L913.3 363.6L913.8 352.2L914.3 357.9L914.8 355.5L915.3 352.6L915.8 349.7L916.3 357.2L916.8 356.3L917.3 359.4L917.8 355.0L918.3 358.4L918.8 356.8L919.3 352.4L919.8 355.1L920.3 354.6L920.8 354.1L921.3 352.2L921.8 350.2L922.3 359.1L922.8 360.6L923.3 353.2L923.8 352.6L924.3 350.2L924.8 352.3L925.3 349.0L925.8 353.2L926.3 357.2L926.8 351.5L927.3 358.1L927.8 357.4L928.3 353.6L928.8 355.9L929.3 351.8L929.8 356.3L930.3 348.7L930.8 358.6L931.3 352.6L931.8 356.6L932.3 350.1L932.8 357.0L933.3 352.3L933.8 366.1L934.3 357.6L934.8 349.2L935.3 354.3L935.8 354.7L936.3 351.9L936.8 346.6" fill="none" stroke="#3a50c8" stroke-width="1" shape-rendering="crispEdges"/><path d="M311.6 351.2L312.1 355.8L312.6 360.0L313.1 353.1L313.6 355.1L314.1 360.3L314.6 347.8L315.1 352.6L315.6 358.6L316.1 358.0L316.6 352.4L317.1 348.5L317.6 351.8L318.1 353.2L318.6 356.4L319.1 347.7L319.6 356.0L320.1 354.2L320.6 353.7L321.1 356.6L321.6 352.2L322.1 349.5L322.6 362.8L323.1 355.7L323.6 350.5L324.1 347.0L324.6 356.6L325.1 352.6L325.6 354.3L326.1 354.4L326.6 357.2L327.1 351.4L327.6 350.7L328.1 349.3L328.6 354.0L329.1 354.4L329.6 350.9L330.1 343.2L330.6 355.7L331.1 355.2L331.6 348.7L332.1 358.9L332.6 369.1L333.1 351.4L333.6 349.9L334.1 350.2L334.6 351.3L335.1 351.0L335.6 357.3L336.1 351.1L336.6 358.3L337.1 360.4L337.6 355.6L338.1 359.4L338.6 358.7L339.1 357.1L339.6 356.3L340.1 354.4L340.6 358.5L341.1 357.0L341.6 355.4L342.1 354.3L342.6 353.2L343.1 352.2L343.6 354.1L344.1 353.3L344.6 352.5L345.1 355.0L345.6 354.2L346.1 360.0L346.6 354.1L347.1 351.4L347.6 357.2L348.1 350.3L348.6 356.7L349.1 351.1L349.6 349.0L350.1 354.1L350.6 356.3L351.1 353.3L351.6 356.3L352.1 358.1L352.6 349.0L353.1 361.6L353.6 351.7L354.1 357.6L354.6 351.6L355.1 356.7L355.6 348.5L356.1 356.7L356.6 362.8L357.1 344.6L357.6 354.8L358.1 355.4L358.6 354.9L359.1 356.0L359.6 353.9L360.1 357.6L360.6 347.2L361.2 357.4L361.7 352.6L362.2 350.2L362.7 355.7L363.2 351.9L363.7 356.8L364.2 358.4L364.7 357.8L365.2 351.1L365.7 351.2L366.2 358.1L366.7 351.3L367.2 358.1L367.7 354.3L368.2 352.5L368.7 362.2L369.2 352.8L369.7 356.0L370.2 360.2L370.7 352.6L371.2 353.9L371.7 353.7L372.2 355.9L372.7 358.8L373.2 359.6L373.7 355.8L374.2 358.7L374.7 356.6L375.2 353.6L375.7 352.2L376.2 353.5L376.7 354.0L377.2 356.0L377.7 351.7L378.2 350.9L378.7 356.8L379.2 356.6L379.7 358.5L380.2 356.1L380.7 356.6L381.2 348.1L381.7 350.2L382.2 359.8L382.7 352.3L383.2 355.9L383.7 361.2L384.2 354.1L384.7 357.4L385.2 353.9L385.7 353.2L386.2 357.3L386.7 349.8L387.2 354.5L387.7 357.8L388.2 360.8L388.7 347.2L389.2 359.6L389.7 354.8L390.2 354.0L390.7 351.9L391.2 359.8L391.7 363.6L392.2 354.7L392.7 360.3L393.2 356.1L393.7 343.5L394.2 357.2L394.7 352.7L395.2 359.0L395.7 344.5L396.2 356.4L396.7 353.7L397.2 356.0L397.7 357.2L398.2 351.3L398.7 355.9L399.2 358.3L399.7 357.0L400.2 356.2L400.7 354.8L401.2 354.7L401.7 358.0L402.2 357.0L402.7 347.9L403.2 356.1L403.7 350.4L404.2 357.9L404.7 354.0L405.2 357.5L405.7 362.2L406.2 357.2L406.7 352.2L407.2 350.8L407.7 349.4L408.2 357.3L408.7 356.5L409.2 362.0L409.7 354.4L410.2 352.5L410.7 354.6L411.2 358.0L411.7 353.9L412.2 355.0L412.7 352.9L413.2 356.0L413.7 354.6L414.2 357.9L414.7 358.3L415.2 364.3L415.7 354.6L416.2 354.8L416.7 358.7L417.2 349.9L417.7 348.6L418.2 349.2L418.7 355.7L419.2 356.2L419.7 354.1L420.2 351.9L420.7 349.9L421.2 358.6L421.7 355.8L422.2 362.4L422.7 356.8L423.2 352.0L423.7 352.8L424.2 346.8L424.7 351.4L425.2 356.7L425.7 357.8L426.2 354.2L426.7 349.3L427.2 359.6L427.7 358.5L428.2 354.9L428.7 356.4L429.2 352.0L429.7 356.8L430.2 355.0L430.7 355.2L431.2 354.4L431.7 350.3L432.2 359.7L432.7 361.3L433.2 360.4L433.7 356.2L434.2 354.7L434.7 353.3L435.2 354.0L435.7 354.7L436.2 361.5L436.7 357.5L437.2 353.6L437.7 359.5L438.2 356.9L438.7 356.7L439.2 353.4L439.7 358.3L440.2 361.1L440.7 356.5L441.2 356.2L441.7 352.2L442.2 357.3L442.7 356.0L443.2 357.0L443.7 356.9L444.3 347.8L444.8 364.2L445.3 353.1L445.8 358.0L446.3 354.9L446.8 364.0L447.3 354.5L447.8 358.0L448.3 353.2L448.8 350.3L449.3 359.6L449.8 360.9L450.3 351.1L450.8 348.3L451.3 355.1L451.8 362.5L452.3 360.7L452.8 351.8L453.3 348.9L453.8 355.5L454.3 359.7L454.8 350.7L455.3 359.5L455.8 357.0L456.3 356.7L456.8 356.6L457.3 352.4L457.8 357.6L458.3 353.5L458.8 350.1L459.3 350.0L459.8 349.0L460.3 355.0L460.8 359.6L461.3 352.7L461.8 352.1L462.3 352.2L462.8 354.5L463.3 351.4L463.8 356.5L464.3 349.9L464.8 346.4L465.3 352.1L465.8 352.2L466.3 350.1L466.8 350.3L467.3 350.1L467.8 350.9L468.3 352.9L468.8 346.2L469.3 355.9L469.8 347.6L470.3 354.5L470.8 349.7L471.3 354.3L471.8 355.9L472.3 353.6L472.8 352.8L473.3 344.2L473.8 350.6L474.3 350.4L474.8 350.9L475.3 347.1L475.8 346.6L476.3 344.0L476.8 347.9L477.3 349.2L477.8 344.7L478.3 340.9L478.8 340.9L479.3 346.5L479.8 344.3L480.3 340.8L480.8 344.9L481.3 346.0L481.8 339.8L482.3 341.3L482.8 338.5L483.3 336.1L483.8 340.3L484.3 341.8L484.8 338.8L485.3 331.7L485.8 332.4L486.3 328.3L486.8 330.6L487.3 325.1L487.8 327.7L488.3 326.6L488.8 322.7L489.3 321.4L489.8 320.1L490.3 317.4L490.8 312.6L491.3 316.6L491.8 318.7L492.3 309.4L492.8 302.6L493.3 303.8L493.8 310.0L494.3 302.6L494.8 298.6L495.3 297.6L495.8 291.8L496.3 292.4L496.8 302.4L497.3 287.7L497.8 289.6L498.3 287.3L498.8 287.2L499.3 282.8L499.8 276.8L500.3 268.8L500.8 265.7L501.3 264.6L501.8 259.7L502.3 262.6L502.8 260.7L503.3 247.3L503.8 248.8L504.3 248.0L504.8 240.5L505.3 242.1L505.8 230.3L506.3 239.7L506.8 230.5L507.3 225.6L507.8 221.8L508.3 221.5L508.8 210.0L509.3 206.8L509.8 204.8L510.3 199.0L510.8 198.6L511.3 189.5L511.8 191.3L512.3 189.7L512.8 183.3L513.3 180.0L513.8 174.7L514.3 170.3L514.8 163.4L515.3 171.0L515.8 174.9L516.3 171.2L516.8 170.6L517.3 174.5L517.8 181.4L518.3 185.4L518.8 188.0L519.3 183.7L519.8 194.2L520.3 196.0L520.8 205.2L521.3 201.4L521.8 208.8L522.3 213.6L522.8 216.9L523.3 220.0L523.8 213.7L524.3 224.2L524.8 227.1L525.3 235.2L525.8 240.6L526.3 246.3L526.9 243.9L527.4 244.3L527.9 247.2L528.4 256.2L528.9 250.5L529.4 259.3L529.9 255.5L530.4 262.4L530.9 263.4L531.4 268.2L531.9 270.1L532.4 269.6L532.9 269.8L533.4 271.3L533.9 278.4L534.4 282.3L534.9 278.5L535.4 277.6L535.9 285.7L536.4 286.7L536.9 288.4L537.4 285.6L537.9 284.2L538.4 291.6L538.9 287.6L539.4 284.9L539.9 288.6L540.4 294.2L540.9 297.3L541.4 292.9L541.9 289.1L542.4 290.0L542.9 290.3L543.4 297.4L543.9 296.8L544.4 300.7L544.9 296.8L545.4 300.2L545.9 303.1L546.4 302.6L546.9 300.1L547.4 299.9L547.9 301.1L548.4 296.8L548.9 303.5L549.4 310.6L549.9 304.8L550.4 312.7L550.9 314.6L551.4 309.4L551.9 315.0L552.4 314.0L552.9 316.9L553.4 316.9L553.9 323.3L554.4 315.2L554.9 315.2L555.4 321.4L555.9 317.3L556.4 319.7L556.9 319.6L557.4 319.7L557.9 330.2L558.4 324.0L558.9 327.5L559.4 324.6L559.9 328.3L560.4 320.4L560.9 322.0L561.4 328.0L561.9 325.9L562.4 325.9L562.9 325.1L563.4 321.9L563.9 327.8L564.4 331.3L564.9 319.0L565.4 320.9L565.9 322.9L566.4 322.9L566.9 325.0L567.4 320.0L567.9 324.3L568.4 317.1L568.9 315.8L569.4 318.4L569.9 311.7L570.4 311.9L570.9 313.1L571.4 315.4L571.9 314.2L572.4 314.3L572.9 320.8L573.4 309.1L573.9 304.0L574.4 312.6L574.9 304.9L575.4 305.6L575.9 303.0L576.4 299.6L576.9 297.6L577.4 301.8L577.9 295.5L578.4 298.2L578.9 304.3L579.4 286.6L579.9 291.4L580.4 290.4L580.9 279.6L581.4 283.3L581.9 284.6L582.4 279.7L582.9 277.1L583.4 276.7L583.9 282.1L584.4 271.1L584.9 272.7L585.4 270.8L585.9 265.1L586.4 256.1L586.9 266.1L587.4 259.1L587.9 263.7L588.4 262.4L588.9 256.4L589.4 250.2L589.9 250.8L590.4 249.6L590.9 243.2L591.4 247.8L591.9 251.0L592.4 251.8L592.9 249.0L593.4 246.1L593.9 248.0L594.4 247.1L594.9 248.4L595.4 249.9L595.9 251.9L596.4 251.1L596.9 242.7L597.4 245.8L597.9 245.4L598.4 250.4L598.9 251.9L599.4 249.3L599.9 255.8L600.4 251.2L600.9 256.2L601.4 255.4L601.9 262.4L602.4 254.8L602.9 261.9L603.4 261.8L603.9 268.2L604.4 269.7L604.9 266.7L605.4 276.7L605.9 268.5L606.4 276.8L606.9 273.2L607.4 280.8L607.9 280.5L608.4 281.9L608.9 280.9L609.4 288.9L610.0 285.5L610.5 287.4L611.0 286.7L611.5 293.3L612.0 291.4L612.5 295.0L613.0 294.7L613.5 290.6L614.0 288.7L614.5 299.6L615.0 297.9L615.5 298.6L616.0 302.6L616.5 301.6L617.0 304.9L617.5 299.9L618.0 305.9L618.5 298.3L619.0 310.7L619.5 302.5L620.0 303.1L620.5 308.2L621.0 312.5L621.5 306.6L622.0 312.2L622.5 302.5L623.0 308.9L623.5 310.0L624.0 310.2L624.5 308.6L625.0 312.0L625.5 310.7L626.0 312.0L626.5 315.7L627.0 310.7L627.5 309.6L628.0 311.9L628.5 316.0L629.0 314.7L629.5 321.4L630.0 323.0L630.5 322.1L631.0 321.7L631.5 317.4L632.0 323.8L632.5 323.8L633.0 327.5L633.5 325.3L634.0 329.3L634.5 321.1L635.0 325.3L635.5 322.2L636.0 321.3L636.5 325.1L637.0 326.2L637.5 327.5L638.0 330.1L638.5 336.8L639.0 329.3L639.5 333.0L640.0 334.6L640.5 333.8L641.0 332.6L641.5 330.7L642.0 337.0L642.5 338.2L643.0 330.4L643.5 332.5L644.0 331.9L644.5 335.9L645.0 343.0L645.5 330.9L646.0 331.5L646.5 338.1L647.0 334.9L647.5 332.8L648.0 328.3L648.5 333.0L649.0 335.5L649.5 338.4L650.0 339.5L650.5 338.4L651.0 340.7L651.5 336.5L652.0 338.5L652.5 340.0L653.0 343.0L653.5 339.4L654.0 341.2L654.5 339.0L655.0 343.8L655.5 338.5L656.0 341.5L656.5 334.7L657.0 345.8L657.5 335.1L658.0 332.0L658.5 342.2L659.0 335.1L659.5 338.3L660.0 346.5L660.5 344.3L661.0 339.0L661.5 341.5L662.0 339.6L662.5 341.3L663.0 337.8L663.5 343.7L664.0 346.7L664.5 345.4L665.0 343.3L665.5 346.4L666.0 343.5L666.5 344.2L667.0 344.7L667.5 343.9L668.0 345.2L668.5 340.5L669.0 343.7L669.5 341.5L670.0 349.2L670.5 344.2L671.0 346.1L671.5 351.3L672.0 337.6L672.5 349.3L673.0 342.0L673.5 342.3L674.0 341.0L674.5 346.6L675.0 354.0L675.5 343.1L676.0 345.7L676.5 341.7L677.0 346.1L677.5 341.2L678.0 344.0L678.5 347.1L679.0 337.6L679.5 348.1L680.0 353.7L680.5 345.8L681.0 344.7L681.5 344.4L682.0 348.4L682.5 346.7L683.0 349.6L683.5 348.2L684.0 344.6L684.5 348.8L685.0 344.6L685.5 348.0L686.0 346.9L686.5 348.3L687.0 343.3L687.5 346.9L688.0 350.1L688.5 347.0L689.0 343.3L689.5 346.6L690.0 351.2L690.5 350.2L691.0 351.2L691.5 342.9L692.0 347.1L692.6 342.8L693.1 344.9L693.6 349.0L694.1 344.1L694.6 348.3L695.1 346.9L695.6 355.0L696.1 348.4L696.6 349.6L697.1 350.8L697.6 347.5L698.1 352.7L698.6 349.3L699.1 357.2L699.6 349.2L700.1 350.9L700.6 342.6L701.1 348.0L701.6 346.6L702.1 358.8L702.6 350.3L703.1 352.8L703.6 344.3L704.1 345.5L704.6 348.5L705.1 348.4L705.6 348.6L706.1 349.2L706.6 346.9L707.1 347.1L707.6 349.7L708.1 351.7L708.6 343.7L709.1 351.7L709.6 351.8L710.1 336.5L710.6 349.0L711.1 349.9L711.6 354.1L712.1 353.1L712.6 344.7L713.1 350.6L713.6 345.5L714.1 353.3L714.6 346.7L715.1 349.0L715.6 351.0L716.1 355.7L716.6 342.0L717.1 349.0L717.6 349.3L718.1 345.9L718.6 352.3L719.1 343.6L719.6 345.5L720.1 346.1L720.6 345.7L721.1 349.9L721.6 347.9L722.1 345.6L722.6 348.7L723.1 342.0L723.6 343.6L724.1 341.4L724.6 351.2L725.1 340.4L725.6 347.2L726.1 347.8L726.6 345.7L727.1 339.2L727.6 342.0L728.1 341.6L728.6 338.9L729.1 338.2L729.6 334.8L730.1 337.6L730.6 339.3L731.1 338.0L731.6 344.0L732.1 339.1L732.6 345.3L733.1 337.1L733.6 335.5L734.1 337.5L734.6 335.8L735.1 329.5L735.6 333.4L736.1 331.3L736.6 323.8L737.1 328.4L737.6 325.4L738.1 324.9L738.6 324.6L739.1 319.0L739.6 325.2L740.1 320.8L740.6 324.0L741.1 322.7L741.6 318.1L742.1 321.3L742.6 327.2L743.1 317.9L743.6 311.6L744.1 318.5L744.6 311.9L745.1 313.8L745.6 316.4L746.1 310.9L746.6 320.9L747.1 302.9L747.6 307.0L748.1 302.9L748.6 302.9L749.1 306.6L749.6 301.5L750.1 294.6L750.6 292.9L751.1 297.2L751.6 297.2L752.1 293.7L752.6 296.6L753.1 290.0L753.6 295.2L754.1 290.9L754.6 284.2L755.1 285.9L755.6 287.0L756.1 283.0L756.6 283.3L757.1 280.3L757.6 276.3L758.1 279.2L758.6 284.4L759.1 278.8L759.6 284.7L760.1 279.7L760.6 282.0L761.1 287.8L761.6 288.7L762.1 297.8L762.6 301.3L763.1 299.4L763.6 300.6L764.1 300.6L764.6 311.0L765.1 315.4L765.6 318.5L766.1 319.7L766.6 318.1L767.1 325.2L767.6 319.3L768.1 328.0L768.6 317.3L769.1 327.1L769.6 328.0L770.1 335.5L770.6 330.2L771.1 338.8L771.6 330.5L772.1 336.7L772.6 334.2L773.1 335.0L773.6 334.6L774.1 334.3L774.6 336.1L775.1 338.1L775.7 343.1L776.2 345.4L776.7 339.4L777.2 341.2L777.7 344.6L778.2 343.4L778.7 340.5L779.2 341.0L779.7 346.6L780.2 349.5L780.7 352.0L781.2 347.5L781.7 347.4L782.2 351.3L782.7 343.6L783.2 341.2L783.7 350.7L784.2 346.0L784.7 349.4L785.2 347.4L785.7 348.9L786.2 350.1L786.7 346.5L787.2 347.5L787.7 351.4L788.2 348.4L788.7 352.3L789.2 350.5L789.7 348.4L790.2 348.9L790.7 356.0L791.2 348.8L791.7 355.0L792.2 350.3L792.7 348.7L793.2 356.4L793.7 355.0L794.2 348.7L794.7 350.5L795.2 358.8L795.7 348.5L796.2 354.0L796.7 356.1L797.2 351.3L797.7 354.5L798.2 352.3L798.7 351.6L799.2 344.3L799.7 349.6L800.2 352.0L800.7 352.6L801.2 351.9L801.7 351.5L802.2 355.5L802.7 351.7L803.2 355.9L803.7 355.5L804.2 353.8L804.7 350.1L805.2 350.7L805.7 363.7L806.2 349.5L806.7 353.4L807.2 353.4L807.7 348.6L808.2 356.1L808.7 357.2L809.2 360.5L809.7 357.7L810.2 350.9L810.7 358.2L811.2 357.3L811.7 352.4L812.2 357.3L812.7 356.4L813.2 356.6L813.7 352.5L814.2 356.2L814.7 355.6L815.2 354.5L815.7 360.2L816.2 354.8L816.7 360.1L817.2 358.1L817.7 355.6L818.2 353.6L818.7 354.9L819.2 350.4L819.7 353.7L820.2 352.1L820.7 355.7L821.2 356.3L821.7 348.4L822.2 359.8L822.7 350.2L823.2 358.4L823.7 351.9L824.2 358.6L824.7 352.5L825.2 353.1L825.7 361.5L826.2 356.4L826.7 352.1L827.2 350.8L827.7 353.3L828.2 356.2L828.7 354.5L829.2 358.8L829.7 357.7L830.2 353.6L830.7 354.4L831.2 352.0L831.7 353.5L832.2 352.4L832.7 354.7L833.2 352.3L833.7 346.0L834.2 359.9L834.7 354.0L835.2 356.0L835.7 352.7L836.2 352.9L836.7 357.2L837.2 353.9L837.7 353.7L838.2 354.8L838.7 353.4L839.2 349.7L839.7 352.4L840.2 355.4L840.7 353.7L841.2 347.7L841.7 356.6L842.2 350.7L842.7 356.8L843.2 363.3L843.7 356.9L844.2 353.4L844.7 355.4L845.2 357.0L845.7 357.3L846.2 357.9L846.7 358.2L847.2 356.7L847.7 363.2L848.2 353.2L848.7 353.7L849.2 354.3L849.7 351.6L850.2 356.7L850.7 354.8L851.2 369.0L851.7 354.1L852.2 356.1L852.7 352.7L853.2 351.9L853.7 355.4L854.2 359.1L854.7 353.7L855.2 352.0L855.7 351.8L856.2 356.7L856.7 358.1L857.2 355.9L857.7 358.5L858.3 362.3L858.8 353.7L859.3 353.5L859.8 352.8L860.3 357.9L860.8 355.2L861.3 359.2L861.8 360.1L862.3 353.5L862.8 361.3L863.3 356.3L863.8 347.0L864.3 350.9L864.8 352.8L865.3 353.0L865.8 355.8L866.3 357.1L866.8 348.2L867.3 355.7L867.8 357.1L868.3 352.8L868.8 355.2L869.3 350.6L869.8 357.2L870.3 357.9L870.8 356.4L871.3 346.3L871.8 351.8L872.3 354.1L872.8 354.7L873.3 353.8L873.8 358.3L874.3 353.2L874.8 356.7L875.3 353.7L875.8 354.9L876.3 353.9L876.8 356.5L877.3 351.7L877.8 353.7L878.3 357.6L878.8 353.4L879.3 356.1L879.8 353.6L880.3 352.0L880.8 357.6L881.3 355.0L881.8 354.7L882.3 354.8L882.8 343.8L883.3 353.7L883.8 358.8L884.3 354.5L884.8 356.8L885.3 346.6L885.8 357.1L886.3 358.7L886.8 350.9L887.3 356.7L887.8 356.2L888.3 355.7L888.8 357.2L889.3 356.3L889.8 362.4L890.3 355.2L890.8 352.7L891.3 348.5L891.8 354.7L892.3 352.1L892.8 357.3L893.3 349.9L893.8 347.2L894.3 353.7L894.8 356.0L895.3 354.7L895.8 349.6L896.3 359.1L896.8 350.5L897.3 358.2L897.8 357.6L898.3 353.9L898.8 352.6L899.3 351.5L899.8 350.0L900.3 358.7L900.8 354.6L901.3 352.2L901.8 353.9L902.3 351.0L902.8 354.7L903.3 355.8L903.8 362.5L904.3 361.2L904.8 352.1L905.3 358.7L905.8 353.8L906.3 352.6L906.8 355.2L907.3 351.4L907.8 357.0L908.3 352.8L908.8 355.2L909.3 359.9L909.8 361.7L910.3 355.5L910.8 349.3L911.3 350.9L911.8 353.2L912.3 352.1L912.8 351.8L913.3 355.7L913.8 350.4L914.3 353.9L914.8 356.6L915.3 341.6L915.8 352.5L916.3 355.2L916.8 352.2L917.3 359.0L917.8 359.0L918.3 348.3L918.8 352.7L919.3 358.5L919.8 360.4L920.3 355.2L920.8 358.4L921.3 350.3L921.8 361.5L922.3 350.7L922.8 358.4L923.3 359.2L923.8 354.7L924.3 359.3L924.8 357.0L925.3 356.9L925.8 363.3L926.3 359.0L926.8 353.8L927.3 362.1L927.8 359.7L928.3 358.2L928.8 351.8L929.3 351.8L929.8 349.8L930.3 358.3L930.8 352.2L931.3 354.2L931.8 359.5L932.3 353.2L932.8 355.0L933.3 357.3L933.8 361.0L934.3 360.6L934.8 353.3L935.3 353.5L935.8 356.0L936.3 356.3L936.8 357.1" fill="none" stroke="#2f62e6" stroke-width="1" shape-rendering="crispEdges"/><path d="M311.6 348.5L312.1 341.0L312.6 344.4L313.1 348.2L313.6 346.9L314.1 346.7L314.6 356.0L315.1 343.9L315.6 347.2L316.1 343.6L316.6 355.7L317.1 343.7L317.6 346.0L318.1 349.9L318.6 339.5L319.1 343.4L319.6 349.3L320.1 348.8L320.6 344.2L321.1 340.1L321.6 344.4L322.1 347.6L322.6 340.0L323.1 348.1L323.6 341.7L324.1 343.8L324.6 346.5L325.1 348.1L325.6 348.0L326.1 346.2L326.6 341.4L327.1 346.3L327.6 349.1L328.1 341.6L328.6 342.6L329.1 345.8L329.6 341.9L330.1 345.4L330.6 339.9L331.1 346.4L331.6 348.6L332.1 347.6L332.6 345.7L333.1 345.6L333.6 348.0L334.1 347.9L334.6 350.5L335.1 347.9L335.6 340.6L336.1 346.8L336.6 349.4L337.1 348.4L337.6 348.7L338.1 346.5L338.6 349.0L339.1 342.2L339.6 349.0L340.1 347.0L340.6 341.2L341.1 346.3L341.6 341.9L342.1 346.8L342.6 343.5L343.1 338.8L343.6 349.3L344.1 344.4L344.6 349.9L345.1 346.3L345.6 348.4L346.1 345.8L346.6 350.2L347.1 353.3L347.6 344.2L348.1 345.8L348.6 341.8L349.1 345.5L349.6 345.8L350.1 349.1L350.6 350.8L351.1 345.7L351.6 350.1L352.1 338.7L352.6 341.3L353.1 344.4L353.6 342.0L354.1 346.5L354.6 348.0L355.1 338.0L355.6 347.0L356.1 341.8L356.6 348.9L357.1 344.8L357.6 341.5L358.1 351.9L358.6 351.3L359.1 348.6L359.6 347.4L360.1 346.0L360.6 348.8L361.2 350.2L361.7 349.7L362.2 349.7L362.7 344.9L363.2 348.0L363.7 349.9L364.2 350.2L364.7 348.9L365.2 351.7L365.7 345.5L366.2 344.8L366.7 350.8L367.2 348.1L367.7 347.5L368.2 343.5L368.7 348.8L369.2 347.4L369.7 349.7L370.2 349.5L370.7 348.5L371.2 335.0L371.7 342.4L372.2 345.0L372.7 345.3L373.2 351.4L373.7 349.6L374.2 343.6L374.7 346.1L375.2 342.4L375.7 346.2L376.2 344.3L376.7 345.8L377.2 344.4L377.7 344.9L378.2 342.4L378.7 348.0L379.2 346.9L379.7 348.5L380.2 346.2L380.7 344.6L381.2 345.9L381.7 352.8L382.2 348.6L382.7 348.0L383.2 347.3L383.7 348.4L384.2 347.4L384.7 343.0L385.2 344.1L385.7 341.3L386.2 351.8L386.7 349.8L387.2 350.5L387.7 342.7L388.2 343.8L388.7 348.2L389.2 348.0L389.7 345.2L390.2 341.7L390.7 340.9L391.2 348.4L391.7 343.1L392.2 346.8L392.7 340.7L393.2 337.2L393.7 344.3L394.2 344.1L394.7 355.0L395.2 344.2L395.7 352.0L396.2 348.2L396.7 343.2L397.2 351.6L397.7 338.0L398.2 348.0L398.7 343.5L399.2 348.0L399.7 343.8L400.2 348.2L400.7 346.4L401.2 354.2L401.7 342.8L402.2 343.8L402.7 347.4L403.2 347.2L403.7 349.9L404.2 348.7L404.7 344.9L405.2 345.1L405.7 343.6L406.2 342.2L406.7 342.7L407.2 344.8L407.7 345.0L408.2 346.9L408.7 339.3L409.2 348.7L409.7 348.9L410.2 345.0L410.7 351.1L411.2 347.3L411.7 351.4L412.2 349.1L412.7 334.1L413.2 351.8L413.7 342.8L414.2 348.2L414.7 350.1L415.2 351.3L415.7 344.1L416.2 347.5L416.7 346.1L417.2 340.5L417.7 350.9L418.2 353.6L418.7 345.7L419.2 341.4L419.7 345.6L420.2 341.3L420.7 342.2L421.2 345.0L421.7 348.8L422.2 345.6L422.7 342.2L423.2 344.4L423.7 346.2L424.2 344.8L424.7 346.1L425.2 343.3L425.7 346.9L426.2 340.4L426.7 344.7L427.2 345.0L427.7 352.2L428.2 353.5L428.7 346.7L429.2 347.6L429.7 339.4L430.2 348.6L430.7 349.4L431.2 341.6L431.7 357.3L432.2 345.8L432.7 350.6L433.2 355.8L433.7 352.4L434.2 346.7L434.7 346.2L435.2 347.1L435.7 349.4L436.2 346.1L436.7 345.3L437.2 346.1L437.7 340.6L438.2 342.9L438.7 349.5L439.2 348.5L439.7 349.5L440.2 345.8L440.7 342.7L441.2 340.9L441.7 345.7L442.2 348.4L442.7 350.0L443.2 351.9L443.7 340.3L444.3 347.5L444.8 348.0L445.3 339.9L445.8 348.5L446.3 346.6L446.8 344.8L447.3 352.6L447.8 350.9L448.3 335.0L448.8 345.0L449.3 353.0L449.8 348.2L450.3 346.6L450.8 344.1L451.3 346.5L451.8 350.3L452.3 346.2L452.8 342.3L453.3 348.2L453.8 350.0L454.3 349.7L454.8 353.7L455.3 341.3L455.8 344.4L456.3 345.7L456.8 344.7L457.3 340.8L457.8 347.1L458.3 349.5L458.8 341.0L459.3 352.6L459.8 345.7L460.3 340.3L460.8 338.9L461.3 344.4L461.8 344.3L462.3 344.3L462.8 344.7L463.3 344.0L463.8 338.7L464.3 341.7L464.8 337.3L465.3 341.2L465.8 344.3L466.3 343.8L466.8 335.2L467.3 344.7L467.8 338.9L468.3 345.7L468.8 340.3L469.3 343.3L469.8 343.5L470.3 344.9L470.8 344.3L471.3 340.7L471.8 335.9L472.3 338.7L472.8 342.6L473.3 337.4L473.8 347.0L474.3 338.0L474.8 329.4L475.3 344.9L475.8 337.1L476.3 332.0L476.8 328.3L477.3 329.9L477.8 335.2L478.3 327.4L478.8 327.0L479.3 333.1L479.8 331.0L480.3 333.9L480.8 331.2L481.3 324.8L481.8 333.1L482.3 324.3L482.8 326.6L483.3 326.0L483.8 328.8L484.3 323.1L484.8 324.3L485.3 322.5L485.8 325.5L486.3 317.8L486.8 317.3L487.3 311.0L487.8 311.6L488.3 310.4L488.8 310.0L489.3 308.3L489.8 308.3L490.3 299.8L490.8 305.4L491.3 303.5L491.8 295.5L492.3 289.5L492.8 291.4L493.3 291.2L493.8 281.2L494.3 285.5L494.8 286.7L495.3 281.8L495.8 276.2L496.3 277.8L496.8 270.3L497.3 271.0L497.8 266.0L498.3 262.0L498.8 268.4L499.3 252.2L499.8 251.1L500.3 248.3L500.8 245.9L501.3 244.1L501.8 235.2L502.3 236.6L502.8 229.5L503.3 234.2L503.8 217.1L504.3 219.0L504.8 214.5L505.3 214.8L505.8 210.2L506.3 201.3L506.8 210.0L507.3 189.9L507.8 194.2L508.3 188.0L508.8 180.4L509.3 169.2L509.8 170.4L510.3 162.6L510.8 166.2L511.3 159.2L511.8 149.7L512.3 152.9L512.8 154.2L513.3 143.6L513.8 138.6L514.3 134.2L514.8 127.1L515.3 122.7L515.8 131.0L516.3 131.0L516.8 136.8L517.3 139.4L517.8 146.6L518.3 144.4L518.8 151.4L519.3 149.4L519.8 162.7L520.3 158.2L520.8 170.6L521.3 169.4L521.8 179.1L522.3 182.8L522.8 181.5L523.3 194.0L523.8 187.7L524.3 188.8L524.8 197.3L525.3 208.8L525.8 203.7L526.3 211.0L526.9 213.7L527.4 218.2L527.9 217.8L528.4 219.2L528.9 227.6L529.4 227.4L529.9 236.5L530.4 228.9L530.9 243.0L531.4 248.2L531.9 245.7L532.4 244.0L532.9 245.7L533.4 257.1L533.9 253.1L534.4 255.0L534.9 249.8L535.4 262.2L535.9 268.4L536.4 271.0L536.9 267.4L537.4 265.6L537.9 267.6L538.4 269.8L538.9 273.3L539.4 271.8L539.9 272.6L540.4 265.0L540.9 275.2L541.4 279.8L541.9 278.7L542.4 279.0L542.9 286.7L543.4 280.5L543.9 280.7L544.4 282.3L544.9 287.4L545.4 286.0L545.9 285.3L546.4 284.5L546.9 287.5L547.4 294.3L547.9 288.4L548.4 283.8L548.9 294.8L549.4 304.6L549.9 294.2L550.4 295.0L550.9 300.2L551.4 303.3L551.9 299.4L552.4 302.1L552.9 306.6L553.4 308.7L553.9 309.0L554.4 307.7L554.9 312.4L555.4 318.6L555.9 318.2L556.4 317.1L556.9 317.9L557.4 322.8L557.9 318.2L558.4 326.0L558.9 321.0L559.4 319.0L559.9 322.6L560.4 325.6L560.9 324.5L561.4 334.5L561.9 322.5L562.4 331.3L562.9 332.3L563.4 330.8L563.9 333.4L564.4 330.6L564.9 332.2L565.4 331.9L565.9 328.2L566.4 331.4L566.9 335.4L567.4 334.5L567.9 339.4L568.4 331.4L568.9 339.3L569.4 337.5L569.9 330.8L570.4 338.1L570.9 337.0L571.4 336.3L571.9 348.1L572.4 338.4L572.9 336.2L573.4 339.5L573.9 338.6L574.4 344.3L574.9 341.3L575.4 342.6L575.9 341.5L576.4 346.2L576.9 343.8L577.4 340.0L577.9 343.9L578.4 339.9L578.9 336.5L579.4 340.9L579.9 341.5L580.4 339.8L580.9 345.0L581.4 343.7L581.9 345.7L582.4 345.0L582.9 336.2L583.4 344.8L583.9 342.2L584.4 343.4L584.9 343.7L585.4 343.3L585.9 343.0L586.4 341.1L586.9 343.4L587.4 341.0L587.9 342.9L588.4 343.4L588.9 343.1L589.4 336.7L589.9 346.6L590.4 343.1L590.9 340.2L591.4 340.7L591.9 346.0L592.4 346.4L592.9 342.9L593.4 338.7L593.9 340.2L594.4 343.0L594.9 344.0L595.4 343.6L595.9 343.4L596.4 347.6L596.9 347.6L597.4 343.2L597.9 336.5L598.4 342.2L598.9 348.9L599.4 346.8L599.9 343.3L600.4 346.5L600.9 342.3L601.4 345.6L601.9 345.8L602.4 347.6L602.9 341.8L603.4 342.1L603.9 341.9L604.4 340.9L604.9 343.6L605.4 339.0L605.9 346.5L606.4 340.5L606.9 344.3L607.4 344.5L607.9 346.7L608.4 340.8L608.9 342.0L609.4 338.9L610.0 345.6L610.5 341.8L611.0 345.7L611.5 340.6L612.0 337.5L612.5 345.4L613.0 338.5L613.5 345.5L614.0 337.1L614.5 341.5L615.0 340.1L615.5 345.6L616.0 333.2L616.5 342.1L617.0 343.3L617.5 338.4L618.0 344.3L618.5 342.5L619.0 342.8L619.5 344.2L620.0 337.8L620.5 335.8L621.0 344.6L621.5 336.0L622.0 337.6L622.5 342.5L623.0 339.1L623.5 334.5L624.0 344.6L624.5 343.0L625.0 344.4L625.5 334.0L626.0 337.6L626.5 343.7L627.0 341.4L627.5 338.7L628.0 341.7L628.5 336.9L629.0 340.6L629.5 336.6L630.0 339.6L630.5 340.0L631.0 342.7L631.5 339.5L632.0 337.9L632.5 345.9L633.0 338.7L633.5 336.2L634.0 337.4L634.5 339.1L635.0 341.1L635.5 344.1L636.0 343.5L636.5 341.7L637.0 344.0L637.5 340.1L638.0 342.9L638.5 341.9L639.0 336.3L639.5 339.7L640.0 338.1L640.5 349.4L641.0 337.2L641.5 344.6L642.0 335.1L642.5 345.4L643.0 343.0L643.5 337.7L644.0 333.6L644.5 345.4L645.0 341.2L645.5 343.0L646.0 335.2L646.5 333.7L647.0 339.5L647.5 337.4L648.0 342.6L648.5 344.3L649.0 338.8L649.5 342.0L650.0 338.0L650.5 341.8L651.0 336.3L651.5 341.2L652.0 340.7L652.5 337.6L653.0 340.2L653.5 336.3L654.0 342.9L654.5 344.0L655.0 338.0L655.5 339.4L656.0 343.0L656.5 344.8L657.0 344.6L657.5 341.4L658.0 342.2L658.5 345.0L659.0 344.3L659.5 339.7L660.0 337.9L660.5 336.6L661.0 344.3L661.5 345.4L662.0 339.9L662.5 342.9L663.0 339.4L663.5 339.0L664.0 343.4L664.5 342.6L665.0 347.5L665.5 347.4L666.0 340.0L666.5 335.6L667.0 348.1L667.5 347.3L668.0 344.2L668.5 340.3L669.0 348.9L669.5 342.8L670.0 338.4L670.5 350.4L671.0 346.8L671.5 339.4L672.0 339.5L672.5 345.9L673.0 340.3L673.5 340.2L674.0 347.9L674.5 343.7L675.0 345.3L675.5 344.5L676.0 342.8L676.5 347.3L677.0 349.9L677.5 348.3L678.0 348.1L678.5 344.5L679.0 340.8L679.5 345.6L680.0 347.8L680.5 345.7L681.0 341.6L681.5 344.5L682.0 344.0L682.5 346.4L683.0 344.4L683.5 345.6L684.0 340.5L684.5 344.2L685.0 340.4L685.5 343.0L686.0 343.6L686.5 350.3L687.0 345.3L687.5 347.7L688.0 341.4L688.5 343.6L689.0 343.4L689.5 345.3L690.0 340.4L690.5 351.5L691.0 342.5L691.5 346.3L692.0 348.4L692.6 347.5L693.1 345.3L693.6 344.2L694.1 341.5L694.6 347.4L695.1 349.3L695.6 341.9L696.1 341.5L696.6 348.7L697.1 347.7L697.6 344.3L698.1 346.4L698.6 343.2L699.1 348.0L699.6 347.7L700.1 335.3L700.6 341.8L701.1 340.2L701.6 344.2L702.1 347.7L702.6 341.6L703.1 340.4L703.6 346.2L704.1 346.5L704.6 343.7L705.1 346.0L705.6 350.8L706.1 343.4L706.6 343.0L707.1 351.7L707.6 339.7L708.1 349.6L708.6 350.0L709.1 349.0L709.6 346.0L710.1 346.3L710.6 351.7L711.1 345.6L711.6 344.6L712.1 348.4L712.6 354.0L713.1 350.0L713.6 348.5L714.1 343.6L714.6 347.8L715.1 344.7L715.6 336.6L716.1 346.2L716.6 346.9L717.1 341.4L717.6 341.6L718.1 340.9L718.6 345.1L719.1 349.2L719.6 351.1L720.1 347.3L720.6 345.2L721.1 347.8L721.6 348.5L722.1 344.3L722.6 344.4L723.1 344.5L723.6 336.0L724.1 338.7L724.6 346.1L725.1 338.1L725.6 341.5L726.1 343.2L726.6 341.8L727.1 329.9L727.6 338.8L728.1 340.8L728.6 337.5L729.1 333.7L729.6 335.1L730.1 335.6L730.6 337.4L731.1 335.7L731.6 337.5L732.1 331.7L732.6 328.8L733.1 327.8L733.6 328.3L734.1 322.3L734.6 324.3L735.1 322.5L735.6 327.0L736.1 323.4L736.6 322.4L737.1 316.0L737.6 318.9L738.1 317.7L738.6 316.5L739.1 309.1L739.6 314.8L740.1 314.2L740.6 309.3L741.1 309.0L741.6 302.6L742.1 302.0L742.6 303.5L743.1 303.7L743.6 301.6L744.1 295.6L744.6 297.4L745.1 294.8L745.6 303.5L746.1 297.4L746.6 292.2L747.1 287.7L747.6 285.8L748.1 285.9L748.6 290.5L749.1 282.3L749.6 283.7L750.1 286.6L750.6 280.4L751.1 277.0L751.6 273.2L752.1 269.6L752.6 269.9L753.1 268.9L753.6 269.0L754.1 265.7L754.6 267.8L755.1 259.9L755.6 260.8L756.1 255.7L756.6 255.8L757.1 257.5L757.6 255.0L758.1 253.2L758.6 252.6L759.1 263.6L759.6 260.2L760.1 252.3L760.6 260.8L761.1 259.3L761.6 269.2L762.1 275.9L762.6 275.5L763.1 278.7L763.6 284.6L764.1 282.1L764.6 285.7L765.1 297.5L765.6 292.5L766.1 298.1L766.6 307.3L767.1 301.7L767.6 305.9L768.1 309.1L768.6 316.7L769.1 311.7L769.6 317.8L770.1 311.0L770.6 322.4L771.1 325.4L771.6 320.0L772.1 327.0L772.6 319.2L773.1 328.9L773.6 324.6L774.1 331.9L774.6 331.6L775.1 330.1L775.7 333.6L776.2 329.3L776.7 334.7L777.2 324.9L777.7 330.2L778.2 339.4L778.7 327.5L779.2 333.8L779.7 338.4L780.2 334.4L780.7 336.1L781.2 334.3L781.7 334.7L782.2 334.0L782.7 343.1L783.2 338.3L783.7 342.0L784.2 345.8L784.7 343.7L785.2 345.1L785.7 340.3L786.2 342.8L786.7 340.6L787.2 342.3L787.7 341.7L788.2 340.6L788.7 345.2L789.2 343.1L789.7 343.3L790.2 344.6L790.7 346.4L791.2 342.1L791.7 341.0L792.2 336.9L792.7 342.4L793.2 342.7L793.7 347.5L794.2 344.1L794.7 339.6L795.2 337.2L795.7 342.5L796.2 335.1L796.7 338.6L797.2 337.2L797.7 342.0L798.2 346.9L798.7 344.3L799.2 340.8L799.7 347.1L800.2 345.4L800.7 348.3L801.2 347.5L801.7 350.7L802.2 341.8L802.7 348.3L803.2 345.7L803.7 344.3L804.2 347.1L804.7 349.9L805.2 348.2L805.7 349.8L806.2 345.8L806.7 349.6L807.2 342.3L807.7 347.4L808.2 344.4L808.7 349.4L809.2 352.4L809.7 347.4L810.2 342.9L810.7 342.8L811.2 342.1L811.7 347.7L812.2 347.5L812.7 345.8L813.2 347.4L813.7 344.4L814.2 343.3L814.7 343.0L815.2 349.0L815.7 341.2L816.2 352.9L816.7 347.4L817.2 348.2L817.7 346.5L818.2 347.3L818.7 342.4L819.2 349.0L819.7 343.8L820.2 350.3L820.7 346.4L821.2 345.1L821.7 343.0L822.2 350.4L822.7 354.0L823.2 340.4L823.7 349.6L824.2 347.3L824.7 346.9L825.2 341.5L825.7 343.8L826.2 342.1L826.7 341.7L827.2 344.6L827.7 347.1L828.2 341.6L828.7 340.8L829.2 345.2L829.7 352.6L830.2 348.3L830.7 344.7L831.2 347.9L831.7 343.0L832.2 337.0L832.7 345.9L833.2 345.0L833.7 343.2L834.2 340.0L834.7 353.6L835.2 347.9L835.7 341.3L836.2 346.3L836.7 352.2L837.2 344.4L837.7 350.8L838.2 343.0L838.7 342.8L839.2 347.5L839.7 350.3L840.2 344.4L840.7 347.4L841.2 347.2L841.7 348.3L842.2 347.9L842.7 349.6L843.2 343.3L843.7 342.2L844.2 349.2L844.7 350.7L845.2 343.5L845.7 341.7L846.2 344.3L846.7 342.2L847.2 343.4L847.7 345.9L848.2 347.1L848.7 348.8L849.2 346.5L849.7 352.3L850.2 341.1L850.7 350.1L851.2 345.3L851.7 344.9L852.2 346.5L852.7 346.3L853.2 348.9L853.7 347.6L854.2 343.6L854.7 343.8L855.2 350.8L855.7 346.4L856.2 352.3L856.7 346.5L857.2 346.0L857.7 350.9L858.3 341.2L858.8 351.0L859.3 342.0L859.8 352.0L860.3 343.7L860.8 352.9L861.3 348.0L861.8 350.8L862.3 345.2L862.8 349.2L863.3 347.0L863.8 345.5L864.3 349.8L864.8 348.4L865.3 345.5L865.8 349.7L866.3 345.0L866.8 356.4L867.3 339.3L867.8 342.5L868.3 351.5L868.8 349.2L869.3 347.6L869.8 344.4L870.3 343.8L870.8 342.7L871.3 342.3L871.8 352.7L872.3 345.8L872.8 347.0L873.3 344.3L873.8 346.9L874.3 352.6L874.8 349.2L875.3 337.7L875.8 346.3L876.3 342.2L876.8 346.6L877.3 347.4L877.8 346.3L878.3 347.2L878.8 343.4L879.3 347.9L879.8 352.9L880.3 343.3L880.8 344.5L881.3 347.8L881.8 347.3L882.3 343.7L882.8 345.1L883.3 349.8L883.8 341.6L884.3 337.5L884.8 346.3L885.3 349.8L885.8 342.7L886.3 341.5L886.8 349.5L887.3 351.6L887.8 351.1L888.3 348.1L888.8 350.2L889.3 348.0L889.8 348.0L890.3 352.2L890.8 345.4L891.3 341.7L891.8 353.6L892.3 347.5L892.8 348.2L893.3 349.3L893.8 346.5L894.3 350.4L894.8 343.9L895.3 347.9L895.8 350.3L896.3 345.3L896.8 346.5L897.3 341.8L897.8 346.3L898.3 348.1L898.8 340.2L899.3 346.1L899.8 345.6L900.3 341.7L900.8 348.8L901.3 347.8L901.8 349.5L902.3 340.1L902.8 349.8L903.3 350.7L903.8 350.8L904.3 340.6L904.8 343.1L905.3 349.3L905.8 349.4L906.3 338.8L906.8 349.0L907.3 346.7L907.8 349.3L908.3 338.2L908.8 349.3L909.3 351.8L909.8 346.2L910.3 345.8L910.8 347.9L911.3 349.3L911.8 353.2L912.3 349.9L912.8 340.2L913.3 352.5L913.8 342.3L914.3 338.7L914.8 342.0L915.3 345.4L915.8 342.1L916.3 342.2L916.8 351.3L917.3 344.6L917.8 352.3L918.3 353.8L918.8 343.1L919.3 349.3L919.8 345.6L920.3 351.0L920.8 343.0L921.3 344.4L921.8 347.6L922.3 349.7L922.8 349.1L923.3 346.0L923.8 348.8L924.3 350.1L924.8 344.6L925.3 345.3L925.8 343.0L926.3 343.5L926.8 350.7L927.3 346.2L927.8 349.7L928.3 351.4L928.8 346.1L929.3 347.5L929.8 345.1L930.3 348.1L930.8 344.2L931.3 347.1L931.8 345.7L932.3 342.9L932.8 340.4L933.3 347.8L933.8 353.5L934.3 352.0L934.8 342.2L935.3 340.4L935.8 343.5L936.3 341.2L936.8 347.7" fill="none" stroke="#1a8a8c" stroke-width="1" shape-rendering="crispEdges"/><path d="M311.6 342.3L312.1 349.1L312.6 345.2L313.1 345.8L313.6 351.4L314.1 347.0L314.6 345.8L315.1 342.4L315.6 344.4L316.1 346.3L316.6 343.6L317.1 353.7L317.6 347.8L318.1 349.0L318.6 344.5L319.1 340.1L319.6 343.7L320.1 342.8L320.6 343.3L321.1 340.6L321.6 350.2L322.1 344.6L322.6 349.2L323.1 348.0L323.6 343.7L324.1 343.3L324.6 346.6L325.1 342.4L325.6 346.3L326.1 346.6L326.6 346.1L327.1 346.0L327.6 342.2L328.1 342.5L328.6 347.6L329.1 346.8L329.6 347.9L330.1 344.3L330.6 345.0L331.1 344.5L331.6 350.0L332.1 345.2L332.6 348.3L333.1 349.8L333.6 346.1L334.1 347.4L334.6 344.5L335.1 344.6L335.6 346.3L336.1 344.4L336.6 345.2L337.1 346.4L337.6 349.0L338.1 342.8L338.6 343.0L339.1 342.6L339.6 349.6L340.1 349.6L340.6 345.4L341.1 343.2L341.6 346.1L342.1 342.3L342.6 349.7L343.1 344.2L343.6 352.8L344.1 349.0L344.6 349.9L345.1 344.1L345.6 348.2L346.1 346.1L346.6 343.1L347.1 348.3L347.6 343.0L348.1 349.4L348.6 341.6L349.1 349.5L349.6 350.3L350.1 344.7L350.6 341.4L351.1 352.3L351.6 342.7L352.1 342.1L352.6 344.2L353.1 351.0L353.6 349.7L354.1 344.5L354.6 353.8L355.1 342.4L355.6 340.1L356.1 350.7L356.6 350.2L357.1 343.7L357.6 348.6L358.1 343.8L358.6 347.8L359.1 348.0L359.6 346.6L360.1 343.9L360.6 344.1L361.2 346.4L361.7 341.3L362.2 340.8L362.7 343.4L363.2 351.0L363.7 348.4L364.2 346.9L364.7 344.4L365.2 341.6L365.7 348.3L366.2 341.8L366.7 350.3L367.2 345.1L367.7 347.7L368.2 347.1L368.7 341.8L369.2 347.5L369.7 345.8L370.2 340.1L370.7 345.2L371.2 351.0L371.7 349.9L372.2 347.9L372.7 345.3L373.2 345.2L373.7 352.1L374.2 350.1L374.7 350.7L375.2 346.3L375.7 344.9L376.2 346.9L376.7 344.4L377.2 346.8L377.7 345.9L378.2 341.1L378.7 343.4L379.2 348.0L379.7 347.3L380.2 342.2L380.7 346.3L381.2 348.5L381.7 344.6L382.2 350.6L382.7 345.4L383.2 347.9L383.7 344.9L384.2 338.4L384.7 345.2L385.2 349.8L385.7 352.1L386.2 345.7L386.7 347.1L387.2 350.9L387.7 348.1L388.2 346.2L388.7 350.1L389.2 346.7L389.7 344.5L390.2 348.7L390.7 341.5L391.2 351.1L391.7 350.1L392.2 342.4L392.7 347.7L393.2 348.7L393.7 349.4L394.2 344.7L394.7 348.5L395.2 347.9L395.7 352.5L396.2 351.1L396.7 347.6L397.2 351.2L397.7 347.9L398.2 342.5L398.7 345.9L399.2 342.5L399.7 349.7L400.2 344.2L400.7 347.8L401.2 343.6L401.7 350.2L402.2 345.9L402.7 342.9L403.2 345.6L403.7 345.3L404.2 347.3L404.7 354.6L405.2 349.3L405.7 348.9L406.2 343.0L406.7 345.8L407.2 349.8L407.7 343.0L408.2 344.8L408.7 351.9L409.2 341.6L409.7 344.8L410.2 336.4L410.7 342.5L411.2 351.7L411.7 342.2L412.2 345.4L412.7 347.6L413.2 345.1L413.7 343.9L414.2 347.5L414.7 349.5L415.2 344.0L415.7 344.9L416.2 350.4L416.7 341.6L417.2 347.2L417.7 339.6L418.2 341.0L418.7 346.7L419.2 343.4L419.7 349.8L420.2 345.6L420.7 352.9L421.2 350.2L421.7 346.5L422.2 344.1L422.7 343.2L423.2 342.2L423.7 342.6L424.2 347.9L424.7 346.6L425.2 348.5L425.7 346.1L426.2 352.5L426.7 349.1L427.2 341.3L427.7 345.7L428.2 350.1L428.7 343.8L429.2 345.3L429.7 346.4L430.2 347.6L430.7 349.9L431.2 346.4L431.7 345.9L432.2 346.2L432.7 337.9L433.2 346.2L433.7 345.1L434.2 341.7L434.7 343.2L435.2 353.4L435.7 346.5L436.2 349.9L436.7 350.7L437.2 342.9L437.7 340.5L438.2 344.7L438.7 354.5L439.2 347.9L439.7 347.4L440.2 348.0L440.7 340.6L441.2 343.6L441.7 343.8L442.2 346.0L442.7 343.1L443.2 346.8L443.7 350.9L444.3 346.3L444.8 348.7L445.3 351.7L445.8 353.2L446.3 348.4L446.8 347.8L447.3 339.8L447.8 349.9L448.3 348.8L448.8 346.6L449.3 343.4L449.8 350.8L450.3 347.8L450.8 341.8L451.3 340.5L451.8 349.0L452.3 352.4L452.8 346.8L453.3 347.1L453.8 342.3L454.3 342.9L454.8 345.7L455.3 348.8L455.8 344.5L456.3 348.6L456.8 348.8L457.3 345.5L457.8 338.2L458.3 338.7L458.8 339.7L459.3 350.5L459.8 342.5L460.3 347.3L460.8 342.7L461.3 341.2L461.8 341.7L462.3 346.4L462.8 347.5L463.3 341.3L463.8 339.2L464.3 346.2L464.8 346.5L465.3 343.8L465.8 345.2L466.3 339.7L466.8 339.2L467.3 339.9L467.8 344.9L468.3 345.7L468.8 343.6L469.3 341.9L469.8 339.2L470.3 340.6L470.8 343.2L471.3 339.4L471.8 338.0L472.3 340.7L472.8 343.2L473.3 337.5L473.8 335.2L474.3 335.6L474.8 341.1L475.3 335.4L475.8 336.0L476.3 336.6L476.8 335.7L477.3 336.5L477.8 336.4L478.3 332.4L478.8 332.9L479.3 331.9L479.8 335.9L480.3 330.4L480.8 325.1L481.3 333.9L481.8 329.2L482.3 329.0L482.8 327.4L483.3 325.3L483.8 329.4L484.3 323.3L484.8 322.2L485.3 323.6L485.8 318.4L486.3 314.5L486.8 311.8L487.3 315.6L487.8 310.1L488.3 311.1L488.8 311.9L489.3 298.8L489.8 301.6L490.3 300.6L490.8 302.4L491.3 298.8L491.8 299.2L492.3 289.0L492.8 295.7L493.3 291.7L493.8 286.9L494.3 288.6L494.8 283.0L495.3 283.4L495.8 281.7L496.3 278.2L496.8 282.0L497.3 268.5L497.8 266.5L498.3 264.1L498.8 261.6L499.3 262.6L499.8 255.5L500.3 255.8L500.8 251.4L501.3 250.3L501.8 244.3L502.3 236.2L502.8 234.3L503.3 235.0L503.8 232.4L504.3 219.7L504.8 220.2L505.3 210.4L505.8 201.8L506.3 203.5L506.8 206.6L507.3 206.7L507.8 188.9L508.3 194.7L508.8 190.4L509.3 182.8L509.8 177.6L510.3 169.7L510.8 169.6L511.3 165.8L511.8 155.6L512.3 158.1L512.8 135.7L513.3 152.2L513.8 143.3L514.3 135.7L514.8 135.9L515.3 138.3L515.8 136.0L516.3 135.5L516.8 145.2L517.3 151.6L517.8 149.5L518.3 160.1L518.8 154.3L519.3 156.8L519.8 162.8L520.3 171.6L520.8 168.0L521.3 171.2L521.8 176.1L522.3 185.9L522.8 186.9L523.3 195.4L523.8 192.7L524.3 202.1L524.8 208.3L525.3 208.3L525.8 209.1L526.3 215.0L526.9 218.7L527.4 225.0L527.9 224.8L528.4 229.0L528.9 231.9L529.4 236.2L529.9 238.5L530.4 243.4L530.9 236.4L531.4 250.8L531.9 246.6L532.4 245.7L532.9 258.2L533.4 260.3L533.9 254.2L534.4 250.0L534.9 257.6L535.4 265.1L535.9 268.0L536.4 269.7L536.9 273.2L537.4 272.0L537.9 267.7L538.4 273.0L538.9 271.6L539.4 271.1L539.9 277.3L540.4 277.4L540.9 276.5L541.4 281.0L541.9 278.9L542.4 278.0L542.9 281.2L543.4 288.2L543.9 282.5L544.4 285.3L544.9 285.9L545.4 291.0L545.9 287.8L546.4 289.5L546.9 292.3L547.4 294.1L547.9 293.4L548.4 300.7L548.9 294.7L549.4 298.9L549.9 295.1L550.4 306.6L550.9 303.4L551.4 302.3L551.9 303.9L552.4 307.9L552.9 304.5L553.4 311.1L553.9 309.2L554.4 312.7L554.9 315.0L555.4 318.3L555.9 319.5L556.4 321.8L556.9 319.1L557.4 323.8L557.9 326.9L558.4 322.6L558.9 324.7L559.4 323.8L559.9 325.9L560.4 320.9L560.9 324.7L561.4 326.7L561.9 326.6L562.4 325.3L562.9 328.7L563.4 327.3L563.9 331.0L564.4 325.4L564.9 331.9L565.4 343.0L565.9 330.0L566.4 334.0L566.9 333.9L567.4 331.4L567.9 343.9L568.4 341.1L568.9 335.9L569.4 340.5L569.9 334.2L570.4 335.1L570.9 338.9L571.4 335.0L571.9 345.1L572.4 339.2L572.9 336.3L573.4 335.1L573.9 338.4L574.4 335.7L574.9 339.6L575.4 341.6L575.9 340.0L576.4 332.7L576.9 329.1L577.4 339.9L577.9 339.6L578.4 339.5L578.9 346.5L579.4 343.2L579.9 340.9L580.4 344.2L580.9 342.3L581.4 345.8L581.9 342.0L582.4 338.3L582.9 341.6L583.4 339.0L583.9 342.4L584.4 344.6L584.9 341.5L585.4 348.1L585.9 344.6L586.4 343.2L586.9 344.0L587.4 340.8L587.9 344.8L588.4 339.0L588.9 339.4L589.4 341.8L589.9 344.6L590.4 346.2L590.9 340.2L591.4 343.3L591.9 333.1L592.4 339.5L592.9 337.6L593.4 345.6L593.9 342.7L594.4 344.2L594.9 350.9L595.4 341.8L595.9 344.1L596.4 343.7L596.9 341.4L597.4 339.2L597.9 340.7L598.4 336.8L598.9 345.1L599.4 339.9L599.9 345.4L600.4 343.7L600.9 339.1L601.4 341.1L601.9 342.0L602.4 342.1L602.9 340.6L603.4 338.5L603.9 340.8L604.4 344.4L604.9 340.0L605.4 342.9L605.9 341.8L606.4 341.8L606.9 339.4L607.4 341.8L607.9 343.8L608.4 347.3L608.9 346.9L609.4 341.2L610.0 345.9L610.5 339.3L611.0 342.1L611.5 341.2L612.0 342.3L612.5 333.3L613.0 338.7L613.5 340.2L614.0 339.6L614.5 350.1L615.0 344.9L615.5 337.7L616.0 337.4L616.5 344.4L617.0 348.9L617.5 346.1L618.0 339.8L618.5 342.3L619.0 337.8L619.5 342.3L620.0 340.6L620.5 339.7L621.0 341.8L621.5 342.9L622.0 343.5L622.5 342.0L623.0 341.2L623.5 337.9L624.0 341.0L624.5 343.1L625.0 344.9L625.5 343.8L626.0 339.8L626.5 340.7L627.0 336.5L627.5 341.5L628.0 342.4L628.5 336.2L629.0 337.6L629.5 336.8L630.0 345.1L630.5 341.1L631.0 340.1L631.5 339.8L632.0 348.9L632.5 340.7L633.0 340.9L633.5 337.0L634.0 341.6L634.5 340.6L635.0 341.4L635.5 344.5L636.0 338.6L636.5 330.4L637.0 344.1L637.5 335.5L638.0 334.9L638.5 345.5L639.0 345.2L639.5 343.5L640.0 344.1L640.5 343.3L641.0 344.4L641.5 342.0L642.0 339.3L642.5 338.1L643.0 341.5L643.5 344.3L644.0 339.0L644.5 338.8L645.0 343.6L645.5 339.6L646.0 344.8L646.5 343.4L647.0 340.7L647.5 341.9L648.0 337.3L648.5 341.7L649.0 340.3L649.5 337.3L650.0 346.5L650.5 339.0L651.0 337.3L651.5 342.0L652.0 337.6L652.5 345.2L653.0 344.5L653.5 346.1L654.0 336.0L654.5 344.5L655.0 338.8L655.5 347.5L656.0 338.5L656.5 346.5L657.0 344.3L657.5 350.8L658.0 346.4L658.5 338.6L659.0 349.9L659.5 336.5L660.0 334.4L660.5 342.8L661.0 347.0L661.5 343.5L662.0 341.4L662.5 349.4L663.0 344.6L663.5 341.8L664.0 340.9L664.5 349.1L665.0 342.7L665.5 342.2L666.0 338.7L666.5 341.6L667.0 336.8L667.5 340.8L668.0 345.8L668.5 333.1L669.0 340.5L669.5 342.0L670.0 344.3L670.5 337.5L671.0 342.8L671.5 341.1L672.0 342.4L672.5 344.1L673.0 348.9L673.5 345.4L674.0 337.2L674.5 342.5L675.0 345.9L675.5 346.7L676.0 346.6L676.5 345.1L677.0 344.7L677.5 338.6L678.0 342.5L678.5 337.8L679.0 349.8L679.5 344.6L680.0 350.8L680.5 351.8L681.0 343.3L681.5 350.5L682.0 344.0L682.5 347.4L683.0 340.2L683.5 340.1L684.0 350.0L684.5 341.7L685.0 344.5L685.5 342.7L686.0 346.4L686.5 340.3L687.0 341.1L687.5 344.9L688.0 350.4L688.5 353.3L689.0 341.3L689.5 344.2L690.0 353.2L690.5 348.4L691.0 335.7L691.5 349.0L692.0 343.8L692.6 340.4L693.1 336.8L693.6 344.0L694.1 343.4L694.6 349.4L695.1 343.5L695.6 345.4L696.1 349.2L696.6 349.4L697.1 338.2L697.6 341.5L698.1 335.8L698.6 346.6L699.1 352.7L699.6 338.1L700.1 343.2L700.6 339.3L701.1 348.0L701.6 346.9L702.1 340.1L702.6 348.4L703.1 345.8L703.6 345.6L704.1 342.3L704.6 339.6L705.1 348.4L705.6 342.2L706.1 346.4L706.6 346.0L707.1 345.1L707.6 342.3L708.1 346.0L708.6 343.9L709.1 348.4L709.6 350.8L710.1 349.7L710.6 344.2L711.1 345.4L711.6 344.8L712.1 350.5L712.6 348.5L713.1 345.6L713.6 343.2L714.1 343.9L714.6 346.9L715.1 348.3L715.6 351.2L716.1 347.7L716.6 341.7L717.1 346.6L717.6 347.5L718.1 344.2L718.6 335.1L719.1 346.3L719.6 347.8L720.1 350.1L720.6 351.0L721.1 342.0L721.6 342.0L722.1 345.1L722.6 340.3L723.1 340.1L723.6 344.7L724.1 340.7L724.6 338.3L725.1 346.4L725.6 341.3L726.1 340.0L726.6 346.1L727.1 330.2L727.6 334.4L728.1 330.6L728.6 342.0L729.1 336.3L729.6 331.2L730.1 336.5L730.6 326.5L731.1 337.3L731.6 332.8L732.1 333.0L732.6 336.5L733.1 330.2L733.6 328.2L734.1 330.9L734.6 327.7L735.1 321.3L735.6 320.5L736.1 320.8L736.6 318.7L737.1 315.5L737.6 319.6L738.1 320.2L738.6 316.0L739.1 314.4L739.6 316.0L740.1 311.5L740.6 309.8L741.1 305.8L741.6 311.7L742.1 302.5L742.6 306.3L743.1 309.3L743.6 299.0L744.1 299.7L744.6 299.7L745.1 302.5L745.6 293.6L746.1 298.6L746.6 297.0L747.1 291.7L747.6 286.3L748.1 287.7L748.6 285.8L749.1 287.7L749.6 279.4L750.1 282.3L750.6 277.0L751.1 267.3L751.6 275.1L752.1 278.0L752.6 277.8L753.1 274.6L753.6 273.1L754.1 266.9L754.6 261.5L755.1 264.7L755.6 264.4L756.1 259.6L756.6 263.4L757.1 259.7L757.6 254.1L758.1 251.5L758.6 256.8L759.1 258.9L759.6 261.4L760.1 260.6L760.6 258.2L761.1 266.4L761.6 273.9L762.1 269.0L762.6 272.0L763.1 275.3L763.6 280.8L764.1 289.3L764.6 296.0L765.1 294.6L765.6 301.7L766.1 302.2L766.6 299.8L767.1 312.9L767.6 314.5L768.1 315.6L768.6 314.8L769.1 314.6L769.6 315.0L770.1 320.9L770.6 315.5L771.1 322.0L771.6 319.6L772.1 317.8L772.6 320.9L773.1 328.0L773.6 327.9L774.1 327.1L774.6 327.3L775.1 335.2L775.7 335.5L776.2 335.4L776.7 328.8L777.2 332.4L777.7 334.0L778.2 339.3L778.7 339.7L779.2 334.0L779.7 339.7L780.2 332.9L780.7 340.0L781.2 336.8L781.7 335.3L782.2 336.5L782.7 339.1L783.2 331.8L783.7 340.3L784.2 339.0L784.7 342.3L785.2 337.9L785.7 337.4L786.2 337.6L786.7 340.9L787.2 338.7L787.7 345.9L788.2 343.7L788.7 340.1L789.2 350.5L789.7 348.5L790.2 340.4L790.7 342.3L791.2 344.1L791.7 344.0L792.2 338.0L792.7 341.9L793.2 344.9L793.7 349.1L794.2 343.5L794.7 350.6L795.2 344.9L795.7 347.0L796.2 339.9L796.7 347.1L797.2 344.8L797.7 339.7L798.2 352.9L798.7 346.9L799.2 350.9L799.7 339.6L800.2 343.9L800.7 345.8L801.2 345.1L801.7 343.0L802.2 343.8L802.7 345.6L803.2 342.6L803.7 344.7L804.2 339.0L804.7 350.0L805.2 347.3L805.7 343.3L806.2 343.1L806.7 347.9L807.2 341.3L807.7 342.6L808.2 339.9L808.7 347.5L809.2 341.6L809.7 346.3L810.2 343.8L810.7 343.2L811.2 347.5L811.7 347.1L812.2 339.7L812.7 349.5L813.2 344.0L813.7 341.1L814.2 340.6L814.7 346.6L815.2 349.6L815.7 342.0L816.2 348.0L816.7 346.0L817.2 348.7L817.7 351.1L818.2 348.3L818.7 347.0L819.2 352.5L819.7 341.0L820.2 347.1L820.7 340.3L821.2 342.0L821.7 348.1L822.2 346.2L822.7 347.8L823.2 346.2L823.7 345.8L824.2 344.7L824.7 344.6L825.2 345.5L825.7 348.3L826.2 351.7L826.7 345.4L827.2 346.9L827.7 343.8L828.2 348.3L828.7 345.2L829.2 349.6L829.7 344.8L830.2 347.1L830.7 344.6L831.2 336.9L831.7 343.2L832.2 346.5L832.7 345.1L833.2 346.0L833.7 346.2L834.2 345.7L834.7 346.1L835.2 346.1L835.7 342.5L836.2 340.5L836.7 339.9L837.2 344.4L837.7 344.5L838.2 337.6L838.7 351.2L839.2 345.3L839.7 344.4L840.2 343.8L840.7 348.3L841.2 347.5L841.7 351.2L842.2 348.0L842.7 352.8L843.2 343.3L843.7 346.8L844.2 349.7L844.7 341.2L845.2 346.2L845.7 349.6L846.2 344.5L846.7 347.9L847.2 353.0L847.7 345.9L848.2 340.8L848.7 352.2L849.2 347.7L849.7 343.7L850.2 345.1L850.7 343.0L851.2 347.0L851.7 341.5L852.2 346.1L852.7 346.5L853.2 344.7L853.7 347.2L854.2 347.3L854.7 347.8L855.2 349.1L855.7 348.7L856.2 350.9L856.7 344.2L857.2 345.1L857.7 357.2L858.3 347.7L858.8 346.0L859.3 349.7L859.8 344.7L860.3 348.2L860.8 346.1L861.3 349.5L861.8 345.5L862.3 345.7L862.8 338.1L863.3 337.4L863.8 345.6L864.3 346.0L864.8 345.8L865.3 345.3L865.8 353.8L866.3 346.3L866.8 344.0L867.3 346.1L867.8 350.4L868.3 351.6L868.8 352.6L869.3 340.5L869.8 343.6L870.3 341.5L870.8 347.3L871.3 348.8L871.8 351.7L872.3 344.9L872.8 351.2L873.3 349.0L873.8 342.1L874.3 341.0L874.8 347.1L875.3 341.3L875.8 345.4L876.3 344.5L876.8 350.8L877.3 345.2L877.8 344.8L878.3 344.8L878.8 344.8L879.3 345.8L879.8 344.3L880.3 348.9L880.8 344.9L881.3 349.3L881.8 345.8L882.3 347.7L882.8 348.6L883.3 348.2L883.8 348.1L884.3 343.4L884.8 348.7L885.3 344.9L885.8 344.3L886.3 338.5L886.8 342.7L887.3 349.4L887.8 350.3L888.3 345.9L888.8 344.5L889.3 348.4L889.8 342.8L890.3 352.8L890.8 353.3L891.3 348.7L891.8 344.0L892.3 342.9L892.8 345.6L893.3 341.0L893.8 344.4L894.3 346.6L894.8 340.8L895.3 344.1L895.8 348.9L896.3 345.0L896.8 349.8L897.3 342.2L897.8 346.9L898.3 352.3L898.8 341.6L899.3 344.7L899.8 347.8L900.3 345.5L900.8 343.7L901.3 346.2L901.8 345.2L902.3 342.3L902.8 347.5L903.3 346.1L903.8 339.8L904.3 347.1L904.8 348.4L905.3 345.7L905.8 342.6L906.3 348.8L906.8 346.9L907.3 348.2L907.8 339.9L908.3 341.7L908.8 344.8L909.3 342.0L909.8 350.9L910.3 348.7L910.8 345.1L911.3 341.4L911.8 351.2L912.3 344.2L912.8 347.1L913.3 347.1L913.8 345.7L914.3 352.1L914.8 341.0L915.3 348.0L915.8 344.9L916.3 350.0L916.8 348.5L917.3 352.2L917.8 341.0L918.3 336.8L918.8 345.8L919.3 344.8L919.8 339.0L920.3 348.3L920.8 345.1L921.3 349.9L921.8 343.1L922.3 344.5L922.8 342.2L923.3 342.4L923.8 349.7L924.3 348.1L924.8 345.3L925.3 343.9L925.8 346.3L926.3 343.8L926.8 343.2L927.3 347.5L927.8 345.9L928.3 347.4L928.8 350.1L929.3 342.3L929.8 339.5L930.3 346.6L930.8 339.9L931.3 340.3L931.8 348.0L932.3 347.1L932.8 347.8L933.3 342.5L933.8 341.3L934.3 347.7L934.8 351.2L935.3 345.7L935.8 341.4L936.3 344.5L936.8 345.9" fill="none" stroke="#39a03a" stroke-width="1" shape-rendering="crispEdges"/><path d="M311.6 346.2L312.1 348.6L312.6 352.7L313.1 350.5L313.6 347.5L314.1 343.5L314.6 349.3L315.1 339.1L315.6 346.7L316.1 348.9L316.6 343.6L317.1 342.0L317.6 341.0L318.1 343.2L318.6 344.2L319.1 347.3L319.6 345.5L320.1 345.0L320.6 348.6L321.1 344.6L321.6 352.5L322.1 348.5L322.6 347.7L323.1 346.0L323.6 344.6L324.1 344.8L324.6 345.1L325.1 351.2L325.6 334.1L326.1 347.9L326.6 341.9L327.1 345.3L327.6 345.6L328.1 347.0L328.6 346.4L329.1 351.7L329.6 347.4L330.1 338.6L330.6 343.8L331.1 348.2L331.6 347.6L332.1 347.9L332.6 346.8L333.1 341.7L333.6 344.5L334.1 348.1L334.6 353.7L335.1 340.4L335.6 342.3L336.1 346.3L336.6 344.9L337.1 347.6L337.6 348.5L338.1 337.7L338.6 354.3L339.1 347.2L339.6 344.7L340.1 344.3L340.6 345.9L341.1 347.0L341.6 345.1L342.1 350.0L342.6 350.0L343.1 344.1L343.6 348.8L344.1 343.7L344.6 342.2L345.1 341.2L345.6 342.1L346.1 349.7L346.6 345.9L347.1 346.2L347.6 342.5L348.1 347.2L348.6 341.5L349.1 345.6L349.6 341.5L350.1 345.7L350.6 345.7L351.1 349.8L351.6 347.5L352.1 340.7L352.6 337.7L353.1 354.3L353.6 337.9L354.1 340.1L354.6 348.6L355.1 343.6L355.6 342.9L356.1 354.8L356.6 346.7L357.1 345.7L357.6 346.8L358.1 351.0L358.6 346.6L359.1 344.3L359.6 344.7L360.1 350.0L360.6 338.1L361.2 349.9L361.7 348.4L362.2 344.4L362.7 348.0L363.2 348.2L363.7 348.0L364.2 346.6L364.7 337.9L365.2 347.2L365.7 348.1L366.2 350.2L366.7 345.5L367.2 344.2L367.7 349.1L368.2 347.8L368.7 344.9L369.2 348.3L369.7 349.0L370.2 343.7L370.7 341.8L371.2 347.4L371.7 353.2L372.2 343.8L372.7 351.6L373.2 339.7L373.7 345.3L374.2 344.0L374.7 345.2L375.2 342.7L375.7 343.7L376.2 344.7L376.7 345.4L377.2 351.5L377.7 343.9L378.2 347.2L378.7 345.3L379.2 342.9L379.7 349.1L380.2 348.9L380.7 343.4L381.2 348.7L381.7 347.9L382.2 347.8L382.7 344.1L383.2 347.3L383.7 345.6L384.2 341.5L384.7 344.3L385.2 344.5L385.7 346.4L386.2 347.6L386.7 351.4L387.2 347.0L387.7 342.4L388.2 339.8L388.7 348.2L389.2 346.2L389.7 344.5L390.2 345.2L390.7 347.6L391.2 354.5L391.7 347.9L392.2 348.6L392.7 347.4L393.2 346.8L393.7 348.7L394.2 345.5L394.7 348.6L395.2 351.2L395.7 344.3L396.2 346.6L396.7 344.9L397.2 342.8L397.7 351.5L398.2 347.2L398.7 350.7L399.2 345.6L399.7 351.0L400.2 355.5L400.7 341.9L401.2 350.1L401.7 348.3L402.2 345.0L402.7 343.2L403.2 345.8L403.7 348.6L404.2 339.6L404.7 348.1L405.2 349.4L405.7 345.5L406.2 348.5L406.7 345.2L407.2 349.5L407.7 344.9L408.2 352.0L408.7 345.7L409.2 343.9L409.7 345.7L410.2 346.4L410.7 338.5L411.2 346.1L411.7 349.0L412.2 346.2L412.7 341.7L413.2 347.9L413.7 352.2L414.2 347.4L414.7 350.7L415.2 347.3L415.7 351.9L416.2 341.1L416.7 346.5L417.2 344.2L417.7 346.3L418.2 343.6L418.7 347.3L419.2 347.9L419.7 349.6L420.2 348.5L420.7 343.4L421.2 342.9L421.7 348.2L422.2 351.8L422.7 343.3L423.2 349.5L423.7 348.9L424.2 347.3L424.7 341.1L425.2 345.1L425.7 347.3L426.2 351.5L426.7 346.3L427.2 342.4L427.7 345.8L428.2 343.9L428.7 346.0L429.2 347.1L429.7 345.7L430.2 346.2L430.7 337.9L431.2 345.5L431.7 346.4L432.2 346.2L432.7 345.3L433.2 345.2L433.7 343.3L434.2 343.4L434.7 345.3L435.2 353.1L435.7 343.3L436.2 345.2L436.7 341.2L437.2 354.3L437.7 343.4L438.2 354.0L438.7 346.0L439.2 347.3L439.7 343.1L440.2 353.4L440.7 343.6L441.2 351.9L441.7 347.8L442.2 348.5L442.7 344.3L443.2 347.8L443.7 345.9L444.3 348.8L444.8 348.0L445.3 349.0L445.8 344.9L446.3 348.5L446.8 349.7L447.3 344.0L447.8 344.8L448.3 340.8L448.8 346.5L449.3 343.5L449.8 348.4L450.3 342.8L450.8 341.1L451.3 341.2L451.8 352.4L452.3 350.4L452.8 353.1L453.3 342.6L453.8 341.8L454.3 347.2L454.8 348.9L455.3 347.9L455.8 348.8L456.3 347.6L456.8 348.1L457.3 342.7L457.8 338.0L458.3 345.5L458.8 342.0L459.3 339.3L459.8 339.7L460.3 345.2L460.8 342.5L461.3 339.6L461.8 340.2L462.3 339.1L462.8 346.1L463.3 343.7L463.8 340.5L464.3 344.1L464.8 336.2L465.3 334.5L465.8 346.0L466.3 345.1L466.8 343.1L467.3 341.6L467.8 338.7L468.3 336.0L468.8 345.0L469.3 342.5L469.8 339.3L470.3 343.9L470.8 340.0L471.3 346.2L471.8 339.6L472.3 340.7L472.8 337.2L473.3 342.9L473.8 341.3L474.3 340.0L474.8 342.3L475.3 343.5L475.8 340.3L476.3 333.9L476.8 336.1L477.3 333.8L477.8 334.4L478.3 327.5L478.8 334.6L479.3 332.9L479.8 329.0L480.3 331.0L480.8 329.8L481.3 328.4L481.8 333.0L482.3 333.2L482.8 330.7L483.3 324.7L483.8 318.5L484.3 330.2L484.8 323.3L485.3 330.0L485.8 321.3L486.3 317.7L486.8 316.6L487.3 319.6L487.8 314.5L488.3 305.6L488.8 308.9L489.3 309.8L489.8 304.9L490.3 306.5L490.8 303.3L491.3 300.9L491.8 298.2L492.3 297.3L492.8 292.3L493.3 297.2L493.8 294.4L494.3 285.3L494.8 288.2L495.3 285.2L495.8 283.5L496.3 280.3L496.8 279.3L497.3 271.8L497.8 269.1L498.3 268.9L498.8 262.3L499.3 255.4L499.8 262.7L500.3 249.4L500.8 251.6L501.3 247.7L501.8 242.1L502.3 237.1L502.8 235.3L503.3 229.8L503.8 232.2L504.3 227.9L504.8 223.0L505.3 216.5L505.8 214.6L506.3 210.8L506.8 200.3L507.3 199.3L507.8 199.0L508.3 185.5L508.8 181.0L509.3 176.7L509.8 184.2L510.3 176.0L510.8 171.0L511.3 162.0L511.8 156.4L512.3 152.9L512.8 153.1L513.3 143.3L513.8 136.1L514.3 139.2L514.8 131.9L515.3 131.9L515.8 144.7L516.3 141.3L516.8 144.5L517.3 143.8L517.8 146.2L518.3 154.5L518.8 159.4L519.3 164.3L519.8 163.7L520.3 168.5L520.8 171.4L521.3 170.4L521.8 186.5L522.3 177.8L522.8 189.9L523.3 185.8L523.8 196.8L524.3 198.4L524.8 206.5L525.3 204.4L525.8 211.4L526.3 219.5L526.9 219.1L527.4 224.7L527.9 222.9L528.4 230.6L528.9 229.3L529.4 233.1L529.9 236.0L530.4 242.4L530.9 238.8L531.4 245.4L531.9 248.0L532.4 246.1L532.9 253.7L533.4 250.1L533.9 253.8L534.4 256.8L534.9 261.9L535.4 265.6L535.9 264.5L536.4 271.6L536.9 267.6L537.4 272.9L537.9 266.6L538.4 271.4L538.9 269.3L539.4 277.4L539.9 275.0L540.4 278.2L540.9 277.7L541.4 282.2L541.9 275.9L542.4 283.1L542.9 279.7L543.4 280.4L543.9 278.6L544.4 282.4L544.9 291.5L545.4 289.6L545.9 292.2L546.4 293.5L546.9 293.9L547.4 288.8L547.9 290.1L548.4 292.9L548.9 299.3L549.4 298.9L549.9 296.4L550.4 298.6L550.9 305.7L551.4 302.7L551.9 304.5L552.4 300.9L552.9 308.8L553.4 318.6L553.9 309.7L554.4 308.5L554.9 319.5L555.4 312.3L555.9 312.9L556.4 317.8L556.9 322.0L557.4 321.4L557.9 324.2L558.4 323.5L558.9 320.7L559.4 324.8L559.9 327.7L560.4 324.0L560.9 328.1L561.4 336.2L561.9 327.1L562.4 322.0L562.9 330.4L563.4 328.8L563.9 335.0L564.4 331.0L564.9 332.3L565.4 330.8L565.9 332.1L566.4 333.3L566.9 330.3L567.4 335.9L567.9 337.8L568.4 330.8L568.9 333.1L569.4 338.9L569.9 342.9L570.4 343.0L570.9 329.4L571.4 335.2L571.9 336.6L572.4 336.2L572.9 337.2L573.4 331.2L573.9 338.0L574.4 338.9L574.9 341.8L575.4 337.7L575.9 339.6L576.4 340.3L576.9 350.5L577.4 341.8L577.9 344.3L578.4 338.7L578.9 348.3L579.4 343.5L579.9 345.3L580.4 341.4L580.9 340.9L581.4 340.0L581.9 343.6L582.4 342.7L582.9 346.0L583.4 341.0L583.9 344.0L584.4 337.6L584.9 334.4L585.4 347.2L585.9 342.1L586.4 346.2L586.9 346.1L587.4 341.4L587.9 340.3L588.4 343.0L588.9 339.1L589.4 341.9L589.9 344.1L590.4 336.2L590.9 340.2L591.4 342.1L591.9 339.4L592.4 339.2L592.9 342.8L593.4 338.5L593.9 347.8L594.4 346.6L594.9 341.8L595.4 346.9L595.9 337.0L596.4 342.6L596.9 339.0L597.4 342.2L597.9 344.1L598.4 343.3L598.9 339.5L599.4 343.6L599.9 349.5L600.4 334.8L600.9 343.9L601.4 343.6L601.9 343.4L602.4 346.2L602.9 352.0L603.4 344.8L603.9 345.2L604.4 342.2L604.9 342.3L605.4 344.3L605.9 345.4L606.4 336.8L606.9 341.1L607.4 342.6L607.9 347.5L608.4 344.6L608.9 342.3L609.4 346.2L610.0 345.1L610.5 345.9L611.0 343.2L611.5 341.1L612.0 342.8L612.5 343.1L613.0 340.8L613.5 339.2L614.0 352.1L614.5 345.5L615.0 343.0L615.5 340.8L616.0 349.7L616.5 343.3L617.0 337.4L617.5 341.9L618.0 341.2L618.5 338.4L619.0 339.3L619.5 344.1L620.0 340.9L620.5 344.1L621.0 339.7L621.5 338.9L622.0 337.9L622.5 340.0L623.0 350.3L623.5 341.6L624.0 344.1L624.5 338.6L625.0 337.3L625.5 340.0L626.0 342.8L626.5 339.4L627.0 338.1L627.5 337.0L628.0 337.3L628.5 341.7L629.0 340.2L629.5 340.7L630.0 336.6L630.5 346.0L631.0 346.2L631.5 337.0L632.0 337.0L632.5 338.4L633.0 341.2L633.5 335.3L634.0 341.0L634.5 343.0L635.0 338.5L635.5 344.6L636.0 339.5L636.5 341.6L637.0 340.3L637.5 334.5L638.0 345.5L638.5 339.6L639.0 336.5L639.5 337.6L640.0 339.3L640.5 345.7L641.0 336.0L641.5 342.2L642.0 333.9L642.5 340.8L643.0 337.3L643.5 337.7L644.0 342.5L644.5 341.2L645.0 336.8L645.5 342.3L646.0 338.0L646.5 341.8L647.0 338.7L647.5 340.3L648.0 340.1L648.5 336.4L649.0 344.0L649.5 344.4L650.0 351.4L650.5 330.5L651.0 342.6L651.5 337.2L652.0 342.3L652.5 342.9L653.0 344.0L653.5 334.1L654.0 344.1L654.5 344.9L655.0 340.0L655.5 339.4L656.0 340.2L656.5 345.1L657.0 341.3L657.5 338.7L658.0 344.2L658.5 336.1L659.0 343.5L659.5 340.2L660.0 341.2L660.5 343.0L661.0 338.3L661.5 346.9L662.0 342.3L662.5 346.3L663.0 340.6L663.5 348.5L664.0 339.9L664.5 344.4L665.0 339.1L665.5 343.7L666.0 333.6L666.5 343.3L667.0 343.7L667.5 344.6L668.0 344.1L668.5 347.8L669.0 342.2L669.5 348.9L670.0 343.3L670.5 345.9L671.0 344.3L671.5 346.0L672.0 344.2L672.5 343.6L673.0 342.6L673.5 338.3L674.0 344.5L674.5 340.8L675.0 340.4L675.5 340.7L676.0 344.2L676.5 336.6L677.0 348.6L677.5 345.7L678.0 342.6L678.5 346.1L679.0 343.3L679.5 341.6L680.0 344.1L680.5 345.0L681.0 342.3L681.5 345.3L682.0 346.0L682.5 350.1L683.0 342.0L683.5 338.3L684.0 349.9L684.5 346.5L685.0 339.8L685.5 348.7L686.0 347.9L686.5 342.8L687.0 344.4L687.5 342.4L688.0 349.6L688.5 340.5L689.0 347.0L689.5 340.8L690.0 341.9L690.5 346.6L691.0 341.0L691.5 345.6L692.0 348.4L692.6 346.4L693.1 349.7L693.6 345.8L694.1 348.4L694.6 341.0L695.1 348.7L695.6 340.8L696.1 342.6L696.6 350.9L697.1 345.7L697.6 346.1L698.1 347.4L698.6 346.0L699.1 334.2L699.6 345.9L700.1 349.5L700.6 348.6L701.1 347.2L701.6 337.6L702.1 348.3L702.6 340.5L703.1 350.6L703.6 347.2L704.1 346.9L704.6 347.1L705.1 344.7L705.6 344.2L706.1 346.2L706.6 350.3L707.1 345.1L707.6 345.9L708.1 343.5L708.6 348.9L709.1 341.4L709.6 344.7L710.1 350.1L710.6 343.0L711.1 349.3L711.6 348.3L712.1 346.9L712.6 344.9L713.1 337.9L713.6 346.7L714.1 344.1L714.6 344.3L715.1 346.8L715.6 351.2L716.1 345.8L716.6 357.3L717.1 344.6L717.6 350.6L718.1 343.7L718.6 341.4L719.1 347.2L719.6 342.3L720.1 340.1L720.6 347.5L721.1 350.8L721.6 345.4L722.1 341.9L722.6 346.2L723.1 342.3L723.6 341.2L724.1 339.2L724.6 337.3L725.1 339.7L725.6 343.7L726.1 341.3L726.6 345.2L727.1 336.6L727.6 331.0L728.1 342.2L728.6 335.0L729.1 333.6L729.6 325.0L730.1 327.6L730.6 335.4L731.1 329.8L731.6 329.9L732.1 337.8L732.6 330.0L733.1 330.2L733.6 322.4L734.1 327.8L734.6 324.2L735.1 319.6L735.6 320.0L736.1 326.7L736.6 321.3L737.1 318.8L737.6 317.1L738.1 318.5L738.6 312.9L739.1 317.5L739.6 315.1L740.1 307.2L740.6 311.9L741.1 314.4L741.6 303.3L742.1 311.4L742.6 308.0L743.1 303.3L743.6 300.1L744.1 298.8L744.6 296.6L745.1 295.6L745.6 294.5L746.1 294.6L746.6 294.1L747.1 293.2L747.6 281.6L748.1 284.7L748.6 285.1L749.1 280.1L749.6 280.6L750.1 278.7L750.6 278.1L751.1 275.2L751.6 275.0L752.1 278.5L752.6 271.5L753.1 268.7L753.6 269.1L754.1 268.4L754.6 265.2L755.1 264.6L755.6 266.9L756.1 261.7L756.6 262.6L757.1 263.0L757.6 255.7L758.1 254.7L758.6 252.2L759.1 258.2L759.6 257.7L760.1 260.9L760.6 261.5L761.1 269.2L761.6 264.3L762.1 275.0L762.6 282.6L763.1 279.5L763.6 288.8L764.1 284.5L764.6 296.5L765.1 296.2L765.6 306.3L766.1 301.1L766.6 299.5L767.1 307.5L767.6 304.1L768.1 310.7L768.6 316.0L769.1 315.0L769.6 318.8L770.1 315.8L770.6 317.6L771.1 315.0L771.6 324.9L772.1 323.9L772.6 326.9L773.1 329.0L773.6 328.7L774.1 327.0L774.6 327.9L775.1 327.3L775.7 332.6L776.2 332.5L776.7 334.0L777.2 345.0L777.7 333.6L778.2 334.0L778.7 336.5L779.2 334.6L779.7 332.0L780.2 340.6L780.7 335.5L781.2 339.6L781.7 338.4L782.2 339.1L782.7 339.8L783.2 334.2L783.7 340.4L784.2 341.4L784.7 344.8L785.2 335.9L785.7 340.1L786.2 341.7L786.7 344.9L787.2 343.3L787.7 336.5L788.2 345.3L788.7 345.9L789.2 337.8L789.7 346.2L790.2 340.4L790.7 336.3L791.2 347.4L791.7 346.7L792.2 338.9L792.7 338.9L793.2 336.6L793.7 342.2L794.2 343.2L794.7 348.0L795.2 345.0L795.7 344.4L796.2 343.3L796.7 347.5L797.2 345.4L797.7 341.3L798.2 339.3L798.7 342.9L799.2 342.3L799.7 339.9L800.2 352.2L800.7 338.8L801.2 345.7L801.7 351.6L802.2 344.8L802.7 343.5L803.2 348.1L803.7 341.9L804.2 342.9L804.7 338.0L805.2 346.2L805.7 346.0L806.2 347.8L806.7 349.7L807.2 344.7L807.7 338.5L808.2 348.2L808.7 349.0L809.2 345.2L809.7 348.5L810.2 344.3L810.7 347.0L811.2 347.9L811.7 347.9L812.2 345.9L812.7 341.1L813.2 352.9L813.7 339.5L814.2 344.8L814.7 341.1L815.2 343.0L815.7 344.0L816.2 349.0L816.7 349.1L817.2 343.3L817.7 344.2L818.2 338.9L818.7 357.4L819.2 348.3L819.7 355.3L820.2 339.2L820.7 348.6L821.2 351.3L821.7 343.9L822.2 343.6L822.7 350.6L823.2 348.7L823.7 346.9L824.2 340.9L824.7 348.9L825.2 346.4L825.7 342.7L826.2 345.8L826.7 347.5L827.2 345.9L827.7 338.8L828.2 346.2L828.7 342.7L829.2 349.7L829.7 347.3L830.2 348.5L830.7 342.6L831.2 350.1L831.7 352.1L832.2 344.7L832.7 342.3L833.2 338.8L833.7 351.9L834.2 353.4L834.7 341.7L835.2 344.0L835.7 347.8L836.2 345.2L836.7 342.3L837.2 342.8L837.7 352.5L838.2 346.3L838.7 345.5L839.2 342.3L839.7 341.9L840.2 345.7L840.7 344.3L841.2 347.5L841.7 349.2L842.2 345.4L842.7 351.2L843.2 353.5L843.7 351.0L844.2 344.1L844.7 345.9L845.2 346.6L845.7 340.8L846.2 344.9L846.7 348.0L847.2 342.0L847.7 346.2L848.2 351.9L848.7 348.4L849.2 348.2L849.7 345.3L850.2 346.6L850.7 344.4L851.2 346.2L851.7 347.2L852.2 347.4L852.7 346.9L853.2 347.7L853.7 351.3L854.2 349.1L854.7 344.3L855.2 350.2L855.7 341.5L856.2 344.9L856.7 346.9L857.2 351.8L857.7 346.9L858.3 347.4L858.8 344.4L859.3 342.1L859.8 342.7L860.3 343.7L860.8 343.0L861.3 340.0L861.8 343.7L862.3 344.0L862.8 348.1L863.3 345.8L863.8 344.1L864.3 352.1L864.8 339.4L865.3 346.7L865.8 343.8L866.3 353.9L866.8 345.7L867.3 350.1L867.8 346.5L868.3 350.2L868.8 350.0L869.3 352.1L869.8 341.8L870.3 348.8L870.8 350.1L871.3 351.6L871.8 346.8L872.3 340.7L872.8 346.6L873.3 349.4L873.8 346.7L874.3 348.7L874.8 347.1L875.3 348.9L875.8 341.3L876.3 338.6L876.8 347.5L877.3 349.5L877.8 345.5L878.3 345.8L878.8 342.8L879.3 348.1L879.8 346.8L880.3 346.2L880.8 346.8L881.3 344.8L881.8 344.5L882.3 344.7L882.8 352.5L883.3 344.3L883.8 345.5L884.3 352.9L884.8 346.0L885.3 348.6L885.8 346.6L886.3 350.3L886.8 343.4L887.3 343.9L887.8 342.7L888.3 344.4L888.8 344.4L889.3 344.2L889.8 339.3L890.3 346.0L890.8 343.1L891.3 350.3L891.8 343.4L892.3 346.8L892.8 340.5L893.3 344.4L893.8 349.2L894.3 344.6L894.8 347.6L895.3 342.1L895.8 346.0L896.3 346.6L896.8 346.1L897.3 350.1L897.8 345.8L898.3 347.0L898.8 345.9L899.3 342.3L899.8 350.3L900.3 346.5L900.8 340.9L901.3 346.7L901.8 347.4L902.3 345.4L902.8 341.9L903.3 345.9L903.8 339.6L904.3 349.7L904.8 341.4L905.3 347.2L905.8 343.9L906.3 342.5L906.8 348.4L907.3 339.2L907.8 345.3L908.3 347.6L908.8 340.3L909.3 343.5L909.8 338.3L910.3 345.9L910.8 350.6L911.3 344.7L911.8 352.3L912.3 343.2L912.8 345.8L913.3 354.3L913.8 346.6L914.3 349.4L914.8 352.6L915.3 349.4L915.8 349.2L916.3 345.8L916.8 349.5L917.3 341.8L917.8 338.5L918.3 344.2L918.8 349.2L919.3 346.3L919.8 346.2L920.3 349.3L920.8 347.2L921.3 341.7L921.8 349.0L922.3 343.0L922.8 347.0L923.3 349.7L923.8 347.2L924.3 343.1L924.8 346.5L925.3 349.5L925.8 347.0L926.3 349.8L926.8 345.5L927.3 343.0L927.8 342.6L928.3 339.9L928.8 343.9L929.3 354.0L929.8 344.9L930.3 351.1L930.8 347.7L931.3 348.8L931.8 344.5L932.3 346.4L932.8 347.9L933.3 346.0L933.8 351.8L934.3 349.7L934.8 344.1L935.3 339.9L935.8 348.3L936.3 339.1L936.8 347.1" fill="none" stroke="#8ec43a" stroke-width="1" shape-rendering="crispEdges"/><path d="M311.6 346.1L312.1 346.9L312.6 348.2L313.1 348.9L313.6 351.0L314.1 344.7L314.6 348.2L315.1 342.6L315.6 346.3L316.1 345.5L316.6 347.2L317.1 342.3L317.6 351.2L318.1 346.3L318.6 344.8L319.1 349.4L319.6 347.7L320.1 347.3L320.6 337.7L321.1 341.2L321.6 343.4L322.1 338.1L322.6 339.0L323.1 343.2L323.6 345.6L324.1 350.9L324.6 350.1L325.1 347.4L325.6 347.3L326.1 344.0L326.6 349.6L327.1 342.9L327.6 348.7L328.1 346.2L328.6 350.2L329.1 345.6L329.6 352.7L330.1 346.5L330.6 343.5L331.1 352.5L331.6 347.2L332.1 349.8L332.6 347.7L333.1 348.8L333.6 343.9L334.1 339.7L334.6 344.6L335.1 346.7L335.6 358.8L336.1 349.8L336.6 345.4L337.1 349.0L337.6 343.8L338.1 345.0L338.6 346.0L339.1 346.3L339.6 344.3L340.1 343.7L340.6 348.5L341.1 345.2L341.6 351.7L342.1 344.2L342.6 341.8L343.1 343.4L343.6 345.8L344.1 344.8L344.6 343.9L345.1 346.8L345.6 337.5L346.1 345.2L346.6 345.3L347.1 348.0L347.6 343.5L348.1 346.5L348.6 343.2L349.1 343.1L349.6 351.0L350.1 345.7L350.6 343.2L351.1 342.8L351.6 345.5L352.1 351.7L352.6 349.2L353.1 339.2L353.6 343.8L354.1 342.0L354.6 355.1L355.1 345.9L355.6 344.5L356.1 345.8L356.6 341.5L357.1 341.9L357.6 343.6L358.1 349.7L358.6 351.7L359.1 346.9L359.6 351.9L360.1 346.3L360.6 340.5L361.2 348.9L361.7 343.1L362.2 344.1L362.7 347.7L363.2 346.3L363.7 349.8L364.2 346.2L364.7 343.8L365.2 348.6L365.7 346.4L366.2 347.3L366.7 343.0L367.2 341.2L367.7 348.3L368.2 349.9L368.7 344.7L369.2 346.8L369.7 345.3L370.2 342.9L370.7 345.6L371.2 344.0L371.7 354.4L372.2 347.2L372.7 347.0L373.2 345.2L373.7 345.7L374.2 346.9L374.7 351.3L375.2 344.9L375.7 342.6L376.2 347.2L376.7 345.6L377.2 348.9L377.7 349.3L378.2 348.2L378.7 350.8L379.2 348.3L379.7 353.1L380.2 345.7L380.7 341.9L381.2 344.1L381.7 346.7L382.2 347.8L382.7 351.7L383.2 347.1L383.7 341.9L384.2 344.4L384.7 352.3L385.2 352.0L385.7 345.6L386.2 351.4L386.7 352.0L387.2 342.8L387.7 352.5L388.2 346.8L388.7 344.7L389.2 342.7L389.7 351.3L390.2 346.6L390.7 339.4L391.2 352.9L391.7 349.8L392.2 347.1L392.7 347.5L393.2 347.9L393.7 343.4L394.2 347.2L394.7 347.8L395.2 351.2L395.7 344.4L396.2 343.6L396.7 348.8L397.2 341.0L397.7 347.4L398.2 345.8L398.7 346.6L399.2 345.6L399.7 346.3L400.2 337.3L400.7 346.2L401.2 345.1L401.7 339.1L402.2 337.2L402.7 349.4L403.2 343.5L403.7 345.9L404.2 345.5L404.7 346.8L405.2 347.0L405.7 345.2L406.2 347.0L406.7 343.9L407.2 340.7L407.7 347.8L408.2 348.5L408.7 346.7L409.2 335.4L409.7 344.6L410.2 354.8L410.7 348.9L411.2 350.8L411.7 345.6L412.2 345.1L412.7 347.4L413.2 349.0L413.7 351.3L414.2 340.0L414.7 347.4L415.2 347.8L415.7 345.6L416.2 347.8L416.7 343.3L417.2 348.7L417.7 350.7L418.2 344.4L418.7 346.3L419.2 347.4L419.7 350.6L420.2 349.5L420.7 345.5L421.2 346.9L421.7 343.5L422.2 348.3L422.7 352.7L423.2 346.1L423.7 345.4L424.2 345.0L424.7 345.7L425.2 351.9L425.7 344.5L426.2 355.0L426.7 342.9L427.2 346.1L427.7 343.1L428.2 351.9L428.7 346.0L429.2 352.3L429.7 342.9L430.2 346.2L430.7 350.8L431.2 339.7L431.7 347.4L432.2 350.2L432.7 352.3L433.2 340.7L433.7 346.5L434.2 347.2L434.7 345.1L435.2 347.0L435.7 342.7L436.2 350.3L436.7 345.4L437.2 343.4L437.7 350.5L438.2 345.6L438.7 341.6L439.2 350.8L439.7 342.7L440.2 344.6L440.7 345.7L441.2 344.9L441.7 345.0L442.2 342.6L442.7 343.2L443.2 352.8L443.7 347.1L444.3 351.7L444.8 344.3L445.3 343.2L445.8 347.9L446.3 346.4L446.8 343.2L447.3 344.0L447.8 345.2L448.3 342.6L448.8 351.7L449.3 348.0L449.8 340.7L450.3 347.9L450.8 352.5L451.3 346.5L451.8 347.0L452.3 344.4L452.8 349.6L453.3 344.6L453.8 351.2L454.3 343.8L454.8 343.5L455.3 353.0L455.8 349.2L456.3 342.2L456.8 344.5L457.3 346.3L457.8 347.0L458.3 344.5L458.8 339.8L459.3 342.0L459.8 341.1L460.3 338.1L460.8 349.2L461.3 348.5L461.8 345.0L462.3 341.9L462.8 348.4L463.3 344.9L463.8 343.9L464.3 341.5L464.8 347.4L465.3 327.2L465.8 341.2L466.3 340.1L466.8 343.2L467.3 341.0L467.8 335.8L468.3 344.8L468.8 343.4L469.3 347.4L469.8 344.8L470.3 344.7L470.8 341.8L471.3 340.6L471.8 341.6L472.3 343.6L472.8 343.5L473.3 339.3L473.8 340.0L474.3 342.3L474.8 336.0L475.3 334.4L475.8 335.8L476.3 337.2L476.8 336.1L477.3 337.2L477.8 331.6L478.3 337.1L478.8 329.0L479.3 332.0L479.8 340.7L480.3 324.1L480.8 333.6L481.3 329.4L481.8 331.9L482.3 332.7L482.8 325.7L483.3 326.2L483.8 326.4L484.3 326.3L484.8 325.0L485.3 325.3L485.8 323.5L486.3 321.6L486.8 316.6L487.3 315.5L487.8 312.0L488.3 314.5L488.8 307.1L489.3 306.8L489.8 313.4L490.3 304.6L490.8 295.5L491.3 301.0L491.8 300.7L492.3 299.1L492.8 293.9L493.3 292.9L493.8 289.9L494.3 288.5L494.8 291.4L495.3 287.2L495.8 281.0L496.3 283.0L496.8 276.0L497.3 270.9L497.8 271.7L498.3 264.8L498.8 267.5L499.3 264.7L499.8 262.3L500.3 252.0L500.8 252.6L501.3 246.4L501.8 249.1L502.3 239.0L502.8 239.4L503.3 232.7L503.8 229.8L504.3 226.4L504.8 224.3L505.3 217.4L505.8 216.9L506.3 201.5L506.8 199.7L507.3 192.4L507.8 199.7L508.3 192.9L508.8 192.0L509.3 181.7L509.8 177.5L510.3 171.3L510.8 168.0L511.3 171.4L511.8 162.0L512.3 144.9L512.8 155.1L513.3 148.1L513.8 147.8L514.3 140.0L514.8 138.1L515.3 135.4L515.8 136.8L516.3 144.0L516.8 144.4L517.3 148.8L517.8 150.3L518.3 155.9L518.8 166.1L519.3 163.3L519.8 168.7L520.3 173.8L520.8 172.5L521.3 185.5L521.8 182.7L522.3 185.6L522.8 189.5L523.3 192.4L523.8 199.5L524.3 205.7L524.8 202.3L525.3 209.4L525.8 212.3L526.3 217.0L526.9 220.1L527.4 220.2L527.9 226.0L528.4 231.0L528.9 230.2L529.4 235.2L529.9 239.1L530.4 242.0L530.9 241.3L531.4 251.0L531.9 251.2L532.4 247.1L532.9 254.1L533.4 256.9L533.9 253.4L534.4 256.9L534.9 261.9L535.4 260.9L535.9 266.2L536.4 268.9L536.9 266.6L537.4 267.6L537.9 271.9L538.4 272.5L538.9 278.4L539.4 277.1L539.9 279.5L540.4 273.6L540.9 274.0L541.4 282.8L541.9 277.8L542.4 276.8L542.9 280.3L543.4 287.4L543.9 287.3L544.4 284.0L544.9 283.7L545.4 286.2L545.9 287.3L546.4 289.7L546.9 288.5L547.4 293.9L547.9 291.7L548.4 296.0L548.9 294.7L549.4 305.8L549.9 297.9L550.4 303.2L550.9 300.3L551.4 309.7L551.9 304.4L552.4 310.0L552.9 308.8L553.4 312.1L553.9 318.3L554.4 308.1L554.9 313.8L555.4 317.9L555.9 315.3L556.4 324.7L556.9 321.8L557.4 318.9L557.9 325.8L558.4 324.7L558.9 321.6L559.4 326.6L559.9 326.5L560.4 327.8L560.9 326.4L561.4 326.7L561.9 330.2L562.4 323.5L562.9 330.6L563.4 332.8L563.9 331.7L564.4 328.2L564.9 331.2L565.4 330.4L565.9 341.3L566.4 332.4L566.9 333.5L567.4 338.9L567.9 337.2L568.4 331.9L568.9 331.1L569.4 339.6L569.9 342.3L570.4 337.4L570.9 337.2L571.4 340.3L571.9 344.5L572.4 346.8L572.9 339.0L573.4 341.8L573.9 347.4L574.4 343.8L574.9 341.3L575.4 343.4L575.9 336.0L576.4 342.5L576.9 342.2L577.4 337.7L577.9 339.8L578.4 338.6L578.9 341.7L579.4 346.6L579.9 338.8L580.4 347.5L580.9 342.4L581.4 344.9L581.9 342.6L582.4 342.1L582.9 340.0L583.4 349.5L583.9 340.8L584.4 337.4L584.9 336.3L585.4 343.2L585.9 337.3L586.4 344.7L586.9 342.0L587.4 340.6L587.9 345.6L588.4 342.9L588.9 346.3L589.4 339.1L589.9 342.1L590.4 333.5L590.9 343.2L591.4 342.2L591.9 335.7L592.4 341.0L592.9 340.0L593.4 347.1L593.9 340.1L594.4 346.4L594.9 341.6L595.4 346.7L595.9 339.0L596.4 341.2L596.9 348.7L597.4 346.4L597.9 342.1L598.4 346.2L598.9 343.2L599.4 344.4L599.9 347.1L600.4 343.2L600.9 340.8L601.4 339.9L601.9 344.9L602.4 341.2L602.9 345.8L603.4 342.1L603.9 347.8L604.4 340.9L604.9 343.6L605.4 346.7L605.9 337.6L606.4 336.5L606.9 345.1L607.4 341.2L607.9 339.5L608.4 340.5L608.9 342.3L609.4 343.7L610.0 342.8L610.5 343.6L611.0 336.3L611.5 346.4L612.0 342.8L612.5 340.9L613.0 345.0L613.5 339.3L614.0 343.3L614.5 337.5L615.0 346.9L615.5 332.8L616.0 338.2L616.5 336.2L617.0 339.7L617.5 344.6L618.0 343.7L618.5 345.4L619.0 348.1L619.5 339.8L620.0 343.7L620.5 341.3L621.0 336.8L621.5 346.0L622.0 339.2L622.5 345.5L623.0 342.9L623.5 344.0L624.0 341.2L624.5 345.0L625.0 340.2L625.5 344.3L626.0 341.2L626.5 341.1L627.0 341.2L627.5 336.4L628.0 340.3L628.5 342.6L629.0 343.3L629.5 337.3L630.0 345.8L630.5 343.0L631.0 340.5L631.5 339.5L632.0 340.1L632.5 345.2L633.0 343.9L633.5 346.9L634.0 347.6L634.5 345.8L635.0 339.5L635.5 342.8L636.0 347.6L636.5 341.5L637.0 341.3L637.5 334.7L638.0 338.4L638.5 339.0L639.0 334.3L639.5 338.2L640.0 344.1L640.5 344.8L641.0 335.3L641.5 333.7L642.0 332.2L642.5 334.8L643.0 332.5L643.5 336.1L644.0 341.8L644.5 341.2L645.0 341.3L645.5 342.0L646.0 343.0L646.5 342.5L647.0 335.4L647.5 332.5L648.0 338.2L648.5 344.7L649.0 343.7L649.5 341.1L650.0 340.3L650.5 339.4L651.0 340.0L651.5 334.8L652.0 337.0L652.5 336.9L653.0 339.4L653.5 337.9L654.0 342.7L654.5 341.9L655.0 336.5L655.5 346.6L656.0 345.2L656.5 336.7L657.0 338.7L657.5 343.7L658.0 344.7L658.5 336.3L659.0 342.4L659.5 336.5L660.0 338.2L660.5 340.2L661.0 341.5L661.5 343.8L662.0 344.6L662.5 344.1L663.0 335.8L663.5 338.2L664.0 337.3L664.5 343.8L665.0 343.1L665.5 348.3L666.0 343.4L666.5 343.1L667.0 349.2L667.5 343.6L668.0 348.4L668.5 342.4L669.0 339.1L669.5 343.5L670.0 343.9L670.5 342.2L671.0 343.0L671.5 338.8L672.0 345.9L672.5 341.3L673.0 344.1L673.5 348.4L674.0 342.9L674.5 340.9L675.0 338.4L675.5 348.4L676.0 345.8L676.5 343.3L677.0 352.7L677.5 345.2L678.0 342.3L678.5 337.2L679.0 342.5L679.5 348.3L680.0 342.0L680.5 340.8L681.0 350.7L681.5 342.8L682.0 337.7L682.5 342.6L683.0 344.2L683.5 347.4L684.0 347.0L684.5 337.5L685.0 344.4L685.5 341.4L686.0 340.4L686.5 341.3L687.0 344.0L687.5 343.1L688.0 349.9L688.5 347.9L689.0 344.3L689.5 340.5L690.0 335.8L690.5 345.8L691.0 339.6L691.5 341.5L692.0 346.2L692.6 345.3L693.1 348.9L693.6 341.3L694.1 338.4L694.6 345.7L695.1 344.8L695.6 342.2L696.1 342.2L696.6 347.9L697.1 343.0L697.6 345.7L698.1 337.2L698.6 342.2L699.1 349.1L699.6 344.6L700.1 341.5L700.6 344.2L701.1 348.9L701.6 351.1L702.1 347.9L702.6 347.1L703.1 347.6L703.6 352.0L704.1 343.9L704.6 344.2L705.1 348.5L705.6 341.2L706.1 344.6L706.6 347.3L707.1 344.2L707.6 347.7L708.1 344.3L708.6 350.9L709.1 346.6L709.6 350.8L710.1 343.9L710.6 340.8L711.1 339.1L711.6 346.5L712.1 350.5L712.6 342.8L713.1 343.5L713.6 349.1L714.1 342.6L714.6 344.8L715.1 341.7L715.6 348.2L716.1 349.3L716.6 346.9L717.1 346.6L717.6 342.8L718.1 345.3L718.6 344.5L719.1 341.3L719.6 345.9L720.1 346.6L720.6 340.1L721.1 346.6L721.6 345.9L722.1 344.4L722.6 344.0L723.1 337.5L723.6 348.1L724.1 339.8L724.6 339.3L725.1 344.0L725.6 339.5L726.1 338.1L726.6 335.5L727.1 337.9L727.6 341.1L728.1 331.7L728.6 336.3L729.1 333.4L729.6 334.7L730.1 334.0L730.6 333.0L731.1 338.2L731.6 329.4L732.1 328.1L732.6 328.0L733.1 329.1L733.6 335.8L734.1 330.0L734.6 326.1L735.1 327.5L735.6 322.4L736.1 320.3L736.6 322.5L737.1 325.6L737.6 325.3L738.1 320.9L738.6 313.8L739.1 310.6L739.6 314.1L740.1 310.5L740.6 307.9L741.1 306.9L741.6 311.4L742.1 313.6L742.6 307.4L743.1 306.0L743.6 308.7L744.1 300.0L744.6 297.6L745.1 299.6L745.6 303.2L746.1 292.6L746.6 300.3L747.1 292.9L747.6 287.2L748.1 289.7L748.6 283.4L749.1 283.8L749.6 279.9L750.1 276.1L750.6 276.8L751.1 278.7L751.6 276.3L752.1 277.8L752.6 273.5L753.1 275.7L753.6 271.4L754.1 274.0L754.6 261.1L755.1 264.1L755.6 263.3L756.1 261.3L756.6 265.7L757.1 259.7L757.6 260.5L758.1 256.7L758.6 253.9L759.1 260.1L759.6 263.8L760.1 262.4L760.6 264.2L761.1 267.0L761.6 270.5L762.1 269.7L762.6 276.0L763.1 279.0L763.6 286.3L764.1 291.2L764.6 291.9L765.1 297.8L765.6 307.3L766.1 301.6L766.6 305.6L767.1 305.2L767.6 307.6L768.1 310.9L768.6 316.3L769.1 315.0L769.6 318.0L770.1 318.0L770.6 318.1L771.1 320.5L771.6 326.1L772.1 328.9L772.6 323.7L773.1 335.9L773.6 326.1L774.1 327.9L774.6 333.9L775.1 333.4L775.7 333.7L776.2 334.2L776.7 332.5L777.2 338.1L777.7 332.5L778.2 336.3L778.7 336.7L779.2 333.2L779.7 334.9L780.2 342.3L780.7 339.0L781.2 340.4L781.7 334.5L782.2 339.3L782.7 338.8L783.2 337.9L783.7 335.6L784.2 341.0L784.7 340.3L785.2 338.4L785.7 342.2L786.2 336.7L786.7 339.2L787.2 339.8L787.7 336.6L788.2 341.3L788.7 335.2L789.2 342.5L789.7 340.8L790.2 341.1L790.7 344.0L791.2 343.3L791.7 340.0L792.2 348.6L792.7 342.7L793.2 336.5L793.7 344.7L794.2 342.0L794.7 343.7L795.2 339.2L795.7 334.5L796.2 347.4L796.7 346.4L797.2 342.5L797.7 338.8L798.2 355.6L798.7 345.9L799.2 345.4L799.7 344.9L800.2 339.9L800.7 345.7L801.2 342.9L801.7 350.3L802.2 344.8L802.7 347.4L803.2 340.3L803.7 344.3L804.2 349.9L804.7 346.3L805.2 348.0L805.7 348.5L806.2 346.6L806.7 345.7L807.2 350.1L807.7 351.3L808.2 344.0L808.7 345.0L809.2 345.9L809.7 343.6L810.2 347.6L810.7 346.7L811.2 340.8L811.7 349.3L812.2 337.3L812.7 344.0L813.2 342.2L813.7 346.7L814.2 342.7L814.7 344.9L815.2 349.3L815.7 347.0L816.2 347.6L816.7 344.4L817.2 346.1L817.7 346.5L818.2 349.8L818.7 344.4L819.2 347.8L819.7 349.0L820.2 351.9L820.7 344.8L821.2 347.3L821.7 350.6L822.2 344.6L822.7 348.3L823.2 343.7L823.7 349.5L824.2 341.6L824.7 344.3L825.2 351.3L825.7 345.5L826.2 356.5L826.7 349.1L827.2 342.5L827.7 348.6L828.2 345.6L828.7 343.5L829.2 344.4L829.7 342.0L830.2 349.2L830.7 347.0L831.2 345.3L831.7 344.2L832.2 350.4L832.7 350.9L833.2 351.7L833.7 347.3L834.2 344.7L834.7 347.4L835.2 346.4L835.7 343.5L836.2 352.1L836.7 348.5L837.2 351.8L837.7 342.8L838.2 345.8L838.7 342.1L839.2 354.0L839.7 351.5L840.2 348.9L840.7 345.8L841.2 345.3L841.7 344.4L842.2 344.7L842.7 350.4L843.2 349.3L843.7 349.2L844.2 342.3L844.7 342.9L845.2 344.4L845.7 347.1L846.2 345.4L846.7 345.6L847.2 338.7L847.7 343.7L848.2 348.9L848.7 347.7L849.2 353.1L849.7 342.4L850.2 349.9L850.7 345.7L851.2 353.8L851.7 344.8L852.2 344.9L852.7 346.4L853.2 348.6L853.7 338.0L854.2 344.0L854.7 345.1L855.2 346.6L855.7 346.0L856.2 343.7L856.7 345.8L857.2 343.3L857.7 347.7L858.3 344.4L858.8 346.1L859.3 344.6L859.8 346.0L860.3 347.6L860.8 346.4L861.3 345.9L861.8 345.6L862.3 350.8L862.8 344.3L863.3 347.1L863.8 343.4L864.3 344.7L864.8 348.7L865.3 349.1L865.8 344.5L866.3 346.9L866.8 346.4L867.3 346.8L867.8 342.9L868.3 345.7L868.8 348.1L869.3 348.5L869.8 348.1L870.3 344.7L870.8 351.9L871.3 348.1L871.8 348.1L872.3 344.4L872.8 349.2L873.3 346.9L873.8 347.1L874.3 346.1L874.8 350.1L875.3 342.5L875.8 337.2L876.3 348.8L876.8 343.0L877.3 345.6L877.8 343.1L878.3 346.7L878.8 343.3L879.3 339.8L879.8 341.9L880.3 350.4L880.8 345.1L881.3 341.0L881.8 341.4L882.3 347.1L882.8 348.5L883.3 339.1L883.8 347.2L884.3 345.5L884.8 343.6L885.3 346.3L885.8 349.0L886.3 342.8L886.8 346.4L887.3 346.7L887.8 343.9L888.3 344.4L888.8 341.5L889.3 342.5L889.8 348.8L890.3 342.4L890.8 347.2L891.3 339.7L891.8 350.3L892.3 346.4L892.8 351.2L893.3 341.8L893.8 345.4L894.3 346.5L894.8 349.3L895.3 349.5L895.8 350.3L896.3 350.1L896.8 346.4L897.3 347.4L897.8 341.1L898.3 350.1L898.8 348.4L899.3 347.9L899.8 343.7L900.3 346.6L900.8 348.9L901.3 343.9L901.8 344.3L902.3 352.3L902.8 342.2L903.3 344.7L903.8 346.1L904.3 344.9L904.8 336.3L905.3 344.6L905.8 347.1L906.3 347.6L906.8 349.0L907.3 340.4L907.8 337.5L908.3 342.8L908.8 344.2L909.3 340.2L909.8 348.5L910.3 345.6L910.8 342.1L911.3 345.5L911.8 343.6L912.3 350.2L912.8 353.1L913.3 345.8L913.8 348.1L914.3 341.5L914.8 343.8L915.3 351.3L915.8 344.3L916.3 348.7L916.8 355.9L917.3 338.9L917.8 343.1L918.3 348.1L918.8 347.0L919.3 340.4L919.8 344.3L920.3 336.6L920.8 345.7L921.3 350.0L921.8 346.5L922.3 342.0L922.8 343.9L923.3 347.7L923.8 349.2L924.3 344.8L924.8 342.6L925.3 339.4L925.8 351.4L926.3 349.0L926.8 345.4L927.3 346.3L927.8 347.7L928.3 344.8L928.8 349.7L929.3 354.4L929.8 341.5L930.3 348.2L930.8 348.9L931.3 343.6L931.8 344.3L932.3 349.6L932.8 342.3L933.3 347.1L933.8 345.0L934.3 345.6L934.8 342.7L935.3 342.6L935.8 346.1L936.3 346.4L936.8 339.9" fill="none" stroke="#c8d21e" stroke-width="1" shape-rendering="crispEdges"/><path d="M311.6 349.7L312.1 347.0L312.6 344.1L313.1 344.4L313.6 345.8L314.1 349.1L314.6 345.3L315.1 342.7L315.6 345.4L316.1 353.6L316.6 345.9L317.1 347.7L317.6 340.1L318.1 349.7L318.6 351.9L319.1 348.3L319.6 342.0L320.1 344.2L320.6 345.6L321.1 339.3L321.6 350.3L322.1 350.5L322.6 352.1L323.1 346.9L323.6 349.8L324.1 352.1L324.6 345.0L325.1 347.6L325.6 342.7L326.1 343.2L326.6 350.1L327.1 346.5L327.6 348.8L328.1 351.8L328.6 338.2L329.1 345.8L329.6 348.0L330.1 342.2L330.6 348.2L331.1 347.0L331.6 343.1L332.1 348.1L332.6 345.5L333.1 346.2L333.6 351.4L334.1 344.7L334.6 346.4L335.1 346.4L335.6 343.7L336.1 351.2L336.6 350.3L337.1 350.5L337.6 349.1L338.1 345.8L338.6 345.0L339.1 347.6L339.6 347.4L340.1 343.7L340.6 353.0L341.1 351.0L341.6 337.6L342.1 353.1L342.6 348.5L343.1 347.4L343.6 339.6L344.1 344.2L344.6 349.2L345.1 352.0L345.6 344.3L346.1 348.4L346.6 351.9L347.1 343.8L347.6 351.6L348.1 350.7L348.6 344.6L349.1 351.6L349.6 341.3L350.1 342.2L350.6 354.5L351.1 348.0L351.6 344.2L352.1 345.1L352.6 344.5L353.1 352.4L353.6 341.9L354.1 349.2L354.6 348.8L355.1 348.6L355.6 344.0L356.1 349.1L356.6 347.9L357.1 351.9L357.6 352.1L358.1 345.1L358.6 351.1L359.1 351.5L359.6 343.1L360.1 348.0L360.6 346.9L361.2 344.7L361.7 346.1L362.2 343.5L362.7 344.9L363.2 349.6L363.7 347.6L364.2 348.0L364.7 350.2L365.2 346.8L365.7 349.9L366.2 346.6L366.7 347.1L367.2 349.8L367.7 338.1L368.2 341.8L368.7 341.1L369.2 342.0L369.7 341.5L370.2 345.7L370.7 339.7L371.2 347.5L371.7 348.0L372.2 346.9L372.7 349.7L373.2 347.6L373.7 340.3L374.2 353.3L374.7 352.9L375.2 346.9L375.7 342.0L376.2 347.6L376.7 343.4L377.2 348.7L377.7 347.5L378.2 346.4L378.7 354.0L379.2 351.3L379.7 349.6L380.2 347.4L380.7 345.6L381.2 348.3L381.7 344.6L382.2 350.7L382.7 344.9L383.2 343.8L383.7 346.7L384.2 350.5L384.7 343.8L385.2 342.0L385.7 345.8L386.2 349.1L386.7 345.7L387.2 342.9L387.7 349.5L388.2 353.6L388.7 346.8L389.2 342.2L389.7 347.8L390.2 347.1L390.7 350.2L391.2 352.1L391.7 345.0L392.2 342.2L392.7 347.1L393.2 349.8L393.7 351.1L394.2 338.8L394.7 352.0L395.2 348.2L395.7 346.0L396.2 342.6L396.7 347.9L397.2 352.0L397.7 349.4L398.2 350.9L398.7 347.5L399.2 350.3L399.7 346.2L400.2 351.2L400.7 348.1L401.2 345.0L401.7 344.1L402.2 353.8L402.7 346.1L403.2 347.7L403.7 347.7L404.2 350.4L404.7 352.8L405.2 347.2L405.7 343.2L406.2 353.6L406.7 348.4L407.2 345.5L407.7 344.2L408.2 353.3L408.7 346.9L409.2 354.0L409.7 342.5L410.2 348.3L410.7 345.7L411.2 347.4L411.7 352.6L412.2 340.6L412.7 345.9L413.2 348.9L413.7 354.7L414.2 342.3L414.7 351.3L415.2 347.4L415.7 343.9L416.2 343.3L416.7 348.5L417.2 347.0L417.7 345.2L418.2 346.4L418.7 355.7L419.2 346.7L419.7 349.4L420.2 345.6L420.7 351.8L421.2 348.1L421.7 347.8L422.2 347.7L422.7 351.7L423.2 349.9L423.7 346.4L424.2 337.9L424.7 347.9L425.2 344.3L425.7 346.0L426.2 342.8L426.7 354.5L427.2 355.3L427.7 347.8L428.2 349.1L428.7 349.9L429.2 348.7L429.7 345.2L430.2 339.9L430.7 354.5L431.2 350.5L431.7 346.5L432.2 352.2L432.7 348.5L433.2 349.8L433.7 350.4L434.2 347.6L434.7 350.1L435.2 346.5L435.7 341.7L436.2 350.5L436.7 346.2L437.2 348.9L437.7 350.4L438.2 345.5L438.7 345.9L439.2 348.3L439.7 345.2L440.2 352.7L440.7 347.9L441.2 347.2L441.7 354.5L442.2 341.2L442.7 349.0L443.2 349.0L443.7 344.6L444.3 344.4L444.8 346.4L445.3 346.2L445.8 349.2L446.3 353.1L446.8 352.8L447.3 348.2L447.8 342.8L448.3 351.3L448.8 344.3L449.3 351.2L449.8 347.3L450.3 342.6L450.8 349.0L451.3 355.4L451.8 342.0L452.3 350.9L452.8 340.8L453.3 342.3L453.8 341.1L454.3 346.9L454.8 341.3L455.3 348.5L455.8 340.5L456.3 348.4L456.8 345.2L457.3 344.1L457.8 349.0L458.3 352.2L458.8 346.0L459.3 346.5L459.8 346.9L460.3 344.4L460.8 349.7L461.3 353.9L461.8 352.4L462.3 349.3L462.8 353.0L463.3 347.9L463.8 347.5L464.3 352.9L464.8 345.7L465.3 350.3L465.8 354.1L466.3 345.2L466.8 348.6L467.3 345.7L467.8 344.5L468.3 352.3L468.8 346.7L469.3 340.0L469.8 342.4L470.3 348.5L470.8 345.4L471.3 344.7L471.8 344.3L472.3 349.3L472.8 346.0L473.3 351.9L473.8 342.4L474.3 347.1L474.8 345.0L475.3 339.9L475.8 343.9L476.3 347.8L476.8 344.4L477.3 342.1L477.8 347.4L478.3 338.9L478.8 340.5L479.3 340.4L479.8 345.8L480.3 346.2L480.8 337.8L481.3 341.8L481.8 343.0L482.3 341.4L482.8 340.4L483.3 336.7L483.8 341.2L484.3 338.8L484.8 344.4L485.3 334.0L485.8 338.6L486.3 339.7L486.8 341.3L487.3 340.9L487.8 337.8L488.3 345.7L488.8 333.2L489.3 340.2L489.8 334.1L490.3 343.6L490.8 345.9L491.3 344.2L491.8 340.0L492.3 338.6L492.8 338.9L493.3 333.1L493.8 341.7L494.3 345.4L494.8 342.2L495.3 344.2L495.8 340.3L496.3 340.9L496.8 343.5L497.3 341.1L497.8 339.4L498.3 343.8L498.8 336.9L499.3 346.6L499.8 339.1L500.3 347.6L500.8 340.0L501.3 339.2L501.8 337.2L502.3 344.5L502.8 341.8L503.3 343.3L503.8 336.7L504.3 342.2L504.8 341.1L505.3 341.9L505.8 343.5L506.3 337.0L506.8 341.2L507.3 342.7L507.8 337.2L508.3 343.7L508.8 340.6L509.3 346.9L509.8 343.8L510.3 337.1L510.8 340.0L511.3 341.8L511.8 345.2L512.3 341.7L512.8 341.8L513.3 341.5L513.8 342.9L514.3 344.4L514.8 339.4L515.3 344.1L515.8 343.0L516.3 353.5L516.8 343.1L517.3 343.9L517.8 345.1L518.3 339.6L518.8 344.8L519.3 340.9L519.8 342.2L520.3 342.6L520.8 348.0L521.3 342.8L521.8 340.8L522.3 343.0L522.8 339.7L523.3 348.4L523.8 351.1L524.3 343.9L524.8 343.6L525.3 347.4L525.8 345.6L526.3 349.3L526.9 347.6L527.4 346.3L527.9 347.5L528.4 342.5L528.9 345.3L529.4 349.4L529.9 351.9L530.4 344.0L530.9 354.5L531.4 351.5L531.9 348.3L532.4 353.6L532.9 349.5L533.4 343.7L533.9 345.4L534.4 350.0L534.9 347.5L535.4 347.3L535.9 343.3L536.4 350.1L536.9 350.9L537.4 347.2L537.9 346.7L538.4 355.7L538.9 355.3L539.4 350.6L539.9 352.0L540.4 348.8L540.9 344.8L541.4 353.2L541.9 348.0L542.4 347.3L542.9 350.1L543.4 341.6L543.9 344.5L544.4 350.9L544.9 342.5L545.4 344.8L545.9 340.0L546.4 344.0L546.9 339.7L547.4 337.3L547.9 346.6L548.4 342.4L548.9 342.5L549.4 343.3L549.9 340.6L550.4 338.6L550.9 340.1L551.4 338.8L551.9 340.2L552.4 337.6L552.9 337.7L553.4 337.3L553.9 335.5L554.4 333.9L554.9 331.8L555.4 335.2L555.9 337.9L556.4 339.0L556.9 335.3L557.4 334.3L557.9 324.0L558.4 334.4L558.9 339.4L559.4 333.4L559.9 336.2L560.4 333.4L560.9 334.4L561.4 331.0L561.9 325.6L562.4 322.6L562.9 325.8L563.4 318.8L563.9 321.1L564.4 318.8L564.9 331.1L565.4 320.5L565.9 316.8L566.4 315.1L566.9 313.9L567.4 311.9L567.9 310.9L568.4 303.5L568.9 310.6L569.4 305.0L569.9 298.8L570.4 291.7L570.9 292.6L571.4 297.9L571.9 289.9L572.4 289.2L572.9 283.0L573.4 291.7L573.9 282.2L574.4 284.5L574.9 287.3L575.4 272.3L575.9 272.3L576.4 271.2L576.9 274.4L577.4 265.0L577.9 265.1L578.4 264.7L578.9 263.2L579.4 261.2L579.9 253.1L580.4 248.8L580.9 252.1L581.4 246.1L581.9 248.3L582.4 238.6L582.9 238.2L583.4 227.9L583.9 231.6L584.4 223.1L584.9 222.0L585.4 220.3L585.9 218.7L586.4 205.7L586.9 213.7L587.4 206.6L587.9 209.4L588.4 204.2L588.9 206.8L589.4 194.1L589.9 191.9L590.4 192.1L590.9 187.6L591.4 185.3L591.9 193.5L592.4 183.8L592.9 189.0L593.4 188.0L593.9 185.2L594.4 183.2L594.9 187.1L595.4 188.9L595.9 187.6L596.4 189.2L596.9 187.6L597.4 191.4L597.9 187.2L598.4 184.1L598.9 193.8L599.4 197.1L599.9 197.7L600.4 199.1L600.9 194.8L601.4 197.0L601.9 199.8L602.4 208.8L602.9 210.4L603.4 216.4L603.9 213.5L604.4 213.6L604.9 218.4L605.4 223.5L605.9 220.0L606.4 219.7L606.9 229.3L607.4 231.9L607.9 230.5L608.4 236.7L608.9 242.8L609.4 245.1L610.0 241.6L610.5 243.4L611.0 249.2L611.5 249.8L612.0 251.6L612.5 250.8L613.0 249.9L613.5 254.5L614.0 265.6L614.5 256.4L615.0 257.0L615.5 263.2L616.0 267.4L616.5 269.6L617.0 261.6L617.5 267.7L618.0 264.5L618.5 263.8L619.0 273.6L619.5 271.7L620.0 275.4L620.5 276.6L621.0 269.4L621.5 278.6L622.0 276.1L622.5 272.0L623.0 276.2L623.5 280.6L624.0 277.4L624.5 279.2L625.0 274.3L625.5 286.6L626.0 283.3L626.5 282.6L627.0 284.5L627.5 287.4L628.0 284.6L628.5 288.8L629.0 288.9L629.5 284.3L630.0 283.8L630.5 290.3L631.0 291.5L631.5 295.1L632.0 303.6L632.5 305.2L633.0 293.4L633.5 294.9L634.0 297.6L634.5 302.5L635.0 298.0L635.5 295.4L636.0 301.3L636.5 308.9L637.0 311.1L637.5 307.5L638.0 308.9L638.5 306.0L639.0 316.2L639.5 307.4L640.0 312.2L640.5 307.0L641.0 313.5L641.5 312.2L642.0 316.5L642.5 319.8L643.0 309.5L643.5 318.4L644.0 321.4L644.5 317.5L645.0 316.9L645.5 319.4L646.0 320.2L646.5 319.9L647.0 317.4L647.5 316.1L648.0 318.9L648.5 319.5L649.0 317.9L649.5 325.0L650.0 320.8L650.5 317.1L651.0 324.5L651.5 318.5L652.0 322.7L652.5 319.9L653.0 327.9L653.5 328.0L654.0 320.8L654.5 327.0L655.0 328.3L655.5 326.0L656.0 338.3L656.5 324.6L657.0 322.0L657.5 328.2L658.0 335.9L658.5 337.1L659.0 328.5L659.5 321.8L660.0 328.7L660.5 328.4L661.0 325.9L661.5 331.3L662.0 326.1L662.5 335.6L663.0 330.5L663.5 331.2L664.0 331.2L664.5 338.6L665.0 331.4L665.5 327.5L666.0 332.6L666.5 324.8L667.0 331.4L667.5 330.5L668.0 337.7L668.5 328.3L669.0 330.1L669.5 327.1L670.0 334.8L670.5 331.4L671.0 327.3L671.5 332.2L672.0 332.7L672.5 337.4L673.0 327.1L673.5 326.4L674.0 336.5L674.5 328.9L675.0 327.8L675.5 329.7L676.0 333.2L676.5 333.0L677.0 340.1L677.5 334.8L678.0 336.0L678.5 338.9L679.0 331.3L679.5 335.2L680.0 332.0L680.5 336.6L681.0 340.7L681.5 334.7L682.0 336.1L682.5 332.8L683.0 335.5L683.5 330.4L684.0 337.7L684.5 329.0L685.0 334.4L685.5 332.1L686.0 341.0L686.5 333.4L687.0 335.7L687.5 331.7L688.0 338.5L688.5 336.0L689.0 342.2L689.5 333.9L690.0 332.7L690.5 333.3L691.0 336.9L691.5 333.5L692.0 335.3L692.6 340.0L693.1 336.4L693.6 337.0L694.1 334.4L694.6 334.4L695.1 334.5L695.6 332.5L696.1 342.8L696.6 331.2L697.1 330.7L697.6 334.5L698.1 333.7L698.6 333.0L699.1 337.9L699.6 337.6L700.1 335.1L700.6 333.0L701.1 339.4L701.6 339.2L702.1 338.7L702.6 332.8L703.1 338.4L703.6 339.5L704.1 337.6L704.6 340.2L705.1 340.8L705.6 335.7L706.1 335.8L706.6 340.8L707.1 337.8L707.6 336.0L708.1 344.1L708.6 345.0L709.1 337.2L709.6 343.7L710.1 337.6L710.6 336.9L711.1 339.3L711.6 341.1L712.1 335.7L712.6 334.1L713.1 343.4L713.6 337.8L714.1 335.4L714.6 337.1L715.1 341.4L715.6 341.6L716.1 345.6L716.6 339.1L717.1 342.9L717.6 337.3L718.1 337.0L718.6 338.6L719.1 337.2L719.6 333.5L720.1 338.3L720.6 330.3L721.1 334.7L721.6 339.9L722.1 340.0L722.6 332.6L723.1 334.1L723.6 341.7L724.1 333.8L724.6 324.4L725.1 333.1L725.6 337.6L726.1 330.5L726.6 329.2L727.1 334.5L727.6 329.3L728.1 335.8L728.6 323.0L729.1 327.8L729.6 334.3L730.1 329.2L730.6 328.7L731.1 330.0L731.6 320.7L732.1 321.4L732.6 321.2L733.1 317.8L733.6 322.8L734.1 320.5L734.6 313.9L735.1 313.6L735.6 313.8L736.1 314.2L736.6 311.2L737.1 313.4L737.6 313.8L738.1 314.0L738.6 304.6L739.1 300.2L739.6 304.8L740.1 298.5L740.6 300.1L741.1 301.5L741.6 294.0L742.1 296.9L742.6 295.6L743.1 292.8L743.6 292.6L744.1 294.7L744.6 290.8L745.1 289.2L745.6 283.3L746.1 279.7L746.6 274.9L747.1 276.6L747.6 281.0L748.1 278.4L748.6 272.4L749.1 265.3L749.6 271.7L750.1 265.5L750.6 266.1L751.1 260.8L751.6 261.5L752.1 256.0L752.6 256.7L753.1 251.9L753.6 255.6L754.1 249.0L754.6 248.3L755.1 245.8L755.6 246.6L756.1 241.7L756.6 240.9L757.1 240.9L757.6 235.9L758.1 239.3L758.6 231.1L759.1 244.8L759.6 241.2L760.1 241.4L760.6 247.3L761.1 248.0L761.6 255.1L762.1 254.6L762.6 257.9L763.1 269.9L763.6 276.2L764.1 275.3L764.6 284.6L765.1 284.8L765.6 288.3L766.1 298.0L766.6 294.2L767.1 298.4L767.6 298.0L768.1 306.9L768.6 302.9L769.1 307.0L769.6 315.3L770.1 313.9L770.6 309.2L771.1 313.5L771.6 314.4L772.1 315.7L772.6 320.0L773.1 325.4L773.6 320.6L774.1 327.5L774.6 331.9L775.1 325.9L775.7 323.9L776.2 327.8L776.7 331.6L777.2 336.0L777.7 328.2L778.2 326.2L778.7 334.6L779.2 330.5L779.7 336.9L780.2 335.9L780.7 332.0L781.2 333.4L781.7 337.6L782.2 338.6L782.7 335.9L783.2 336.5L783.7 338.5L784.2 338.1L784.7 334.9L785.2 340.9L785.7 334.9L786.2 338.6L786.7 337.9L787.2 345.1L787.7 342.8L788.2 340.9L788.7 343.7L789.2 335.5L789.7 337.5L790.2 337.5L790.7 342.3L791.2 346.2L791.7 349.9L792.2 339.7L792.7 344.2L793.2 348.3L793.7 343.9L794.2 337.0L794.7 343.1L795.2 343.9L795.7 340.2L796.2 342.6L796.7 344.6L797.2 341.4L797.7 348.7L798.2 351.8L798.7 347.6L799.2 338.9L799.7 341.0L800.2 351.1L800.7 341.7L801.2 350.6L801.7 344.6L802.2 342.9L802.7 348.3L803.2 344.3L803.7 351.1L804.2 340.0L804.7 338.3L805.2 342.6L805.7 349.4L806.2 347.0L806.7 347.6L807.2 345.8L807.7 343.9L808.2 346.5L808.7 342.4L809.2 335.8L809.7 339.3L810.2 342.4L810.7 348.5L811.2 343.6L811.7 351.3L812.2 347.6L812.7 336.7L813.2 341.3L813.7 340.4L814.2 349.4L814.7 347.5L815.2 347.6L815.7 343.5L816.2 345.7L816.7 346.5L817.2 348.3L817.7 351.4L818.2 343.2L818.7 350.0L819.2 348.0L819.7 342.5L820.2 343.4L820.7 345.6L821.2 342.1L821.7 351.1L822.2 343.6L822.7 344.6L823.2 340.6L823.7 346.3L824.2 350.2L824.7 344.9L825.2 351.2L825.7 349.5L826.2 349.5L826.7 342.4L827.2 342.1L827.7 349.8L828.2 345.7L828.7 347.3L829.2 352.5L829.7 343.1L830.2 346.0L830.7 340.7L831.2 345.3L831.7 346.9L832.2 347.8L832.7 350.3L833.2 349.1L833.7 348.7L834.2 345.9L834.7 344.3L835.2 344.6L835.7 349.4L836.2 345.1L836.7 344.2L837.2 337.1L837.7 343.9L838.2 350.3L838.7 348.9L839.2 349.3L839.7 342.7L840.2 348.8L840.7 341.8L841.2 350.2L841.7 346.2L842.2 344.0L842.7 345.9L843.2 341.7L843.7 346.4L844.2 343.2L844.7 344.1L845.2 341.1L845.7 349.4L846.2 354.8L846.7 345.8L847.2 347.9L847.7 347.3L848.2 346.1L848.7 346.6L849.2 349.9L849.7 346.2L850.2 345.3L850.7 345.5L851.2 353.5L851.7 346.0L852.2 352.3L852.7 345.3L853.2 350.7L853.7 349.2L854.2 341.8L854.7 345.4L855.2 344.5L855.7 345.7L856.2 347.9L856.7 342.8L857.2 348.0L857.7 348.0L858.3 343.7L858.8 348.9L859.3 346.1L859.8 344.4L860.3 350.7L860.8 341.4L861.3 343.7L861.8 346.7L862.3 343.8L862.8 348.2L863.3 354.8L863.8 346.1L864.3 345.3L864.8 344.0L865.3 346.4L865.8 347.0L866.3 345.4L866.8 347.5L867.3 349.0L867.8 344.2L868.3 345.2L868.8 344.0L869.3 346.6L869.8 344.4L870.3 347.9L870.8 355.2L871.3 349.5L871.8 344.9L872.3 343.9L872.8 350.7L873.3 345.3L873.8 351.0L874.3 346.0L874.8 340.4L875.3 345.4L875.8 345.4L876.3 343.3L876.8 345.6L877.3 347.5L877.8 348.5L878.3 349.6L878.8 350.7L879.3 348.1L879.8 348.4L880.3 340.8L880.8 347.0L881.3 348.2L881.8 340.0L882.3 347.7L882.8 347.9L883.3 346.3L883.8 346.2L884.3 348.7L884.8 349.2L885.3 343.9L885.8 349.4L886.3 350.2L886.8 347.6L887.3 348.3L887.8 347.8L888.3 348.2L888.8 347.3L889.3 346.9L889.8 345.2L890.3 353.6L890.8 342.2L891.3 341.6L891.8 349.5L892.3 345.8L892.8 350.4L893.3 347.7L893.8 341.9L894.3 342.5L894.8 347.3L895.3 338.7L895.8 344.9L896.3 356.4L896.8 347.5L897.3 340.0L897.8 345.7L898.3 341.6L898.8 346.3L899.3 344.5L899.8 339.5L900.3 347.0L900.8 347.1L901.3 341.1L901.8 341.5L902.3 339.6L902.8 344.2L903.3 342.0L903.8 355.8L904.3 348.5L904.8 347.9L905.3 343.0L905.8 351.8L906.3 346.9L906.8 355.4L907.3 345.8L907.8 341.4L908.3 350.9L908.8 347.7L909.3 350.1L909.8 346.0L910.3 352.7L910.8 345.6L911.3 346.5L911.8 352.1L912.3 343.9L912.8 343.1L913.3 346.6L913.8 344.2L914.3 348.3L914.8 347.8L915.3 341.3L915.8 347.3L916.3 347.7L916.8 352.3L917.3 353.6L917.8 350.9L918.3 339.8L918.8 349.1L919.3 343.6L919.8 344.9L920.3 350.4L920.8 347.9L921.3 348.1L921.8 346.1L922.3 345.1L922.8 346.4L923.3 341.9L923.8 346.7L924.3 342.4L924.8 342.9L925.3 354.2L925.8 345.7L926.3 351.7L926.8 345.4L927.3 346.6L927.8 346.2L928.3 344.9L928.8 348.5L929.3 348.0L929.8 344.6L930.3 344.9L930.8 344.2L931.3 345.5L931.8 342.9L932.3 351.3L932.8 346.1L933.3 345.5L933.8 350.5L934.3 346.7L934.8 351.0L935.3 356.8L935.8 353.9L936.3 344.1L936.8 343.9" fill="none" stroke="#f0c81c" stroke-width="1" shape-rendering="crispEdges"/><path d="M311.6 343.1L312.1 344.2L312.6 344.9L313.1 350.8L313.6 346.2L314.1 352.9L314.6 350.2L315.1 338.9L315.6 350.0L316.1 343.3L316.6 345.8L317.1 347.8L317.6 345.4L318.1 342.4L318.6 350.4L319.1 344.5L319.6 347.2L320.1 348.2L320.6 346.6L321.1 342.4L321.6 344.8L322.1 342.2L322.6 345.9L323.1 343.1L323.6 343.7L324.1 349.3L324.6 348.6L325.1 347.9L325.6 346.7L326.1 341.4L326.6 346.5L327.1 345.9L327.6 342.6L328.1 349.8L328.6 345.3L329.1 349.9L329.6 345.6L330.1 348.9L330.6 354.4L331.1 349.2L331.6 347.2L332.1 345.1L332.6 353.5L333.1 353.4L333.6 345.4L334.1 346.0L334.6 351.5L335.1 344.2L335.6 340.8L336.1 344.9L336.6 347.5L337.1 343.5L337.6 352.8L338.1 346.8L338.6 343.5L339.1 343.8L339.6 346.2L340.1 349.2L340.6 342.4L341.1 348.3L341.6 346.1L342.1 353.1L342.6 346.9L343.1 346.9L343.6 347.8L344.1 349.8L344.6 344.0L345.1 342.6L345.6 344.8L346.1 348.6L346.6 352.7L347.1 345.7L347.6 348.1L348.1 350.5L348.6 346.3L349.1 351.9L349.6 340.3L350.1 358.6L350.6 345.5L351.1 341.7L351.6 345.1L352.1 347.4L352.6 342.4L353.1 351.2L353.6 351.7L354.1 348.4L354.6 349.8L355.1 348.3L355.6 347.2L356.1 353.1L356.6 349.1L357.1 344.3L357.6 339.8L358.1 342.6L358.6 348.7L359.1 343.5L359.6 349.0L360.1 358.1L360.6 344.4L361.2 348.0L361.7 346.7L362.2 347.0L362.7 352.1L363.2 345.9L363.7 343.1L364.2 346.3L364.7 348.9L365.2 352.6L365.7 348.1L366.2 348.9L366.7 347.5L367.2 348.3L367.7 348.9L368.2 347.3L368.7 351.4L369.2 353.0L369.7 349.4L370.2 350.9L370.7 346.2L371.2 343.4L371.7 345.5L372.2 348.7L372.7 348.6L373.2 345.6L373.7 345.6L374.2 344.8L374.7 350.3L375.2 345.1L375.7 339.9L376.2 343.1L376.7 344.0L377.2 347.4L377.7 348.2L378.2 346.3L378.7 349.9L379.2 350.6L379.7 345.5L380.2 353.6L380.7 346.8L381.2 343.5L381.7 350.5L382.2 347.6L382.7 349.8L383.2 340.9L383.7 347.4L384.2 344.4L384.7 351.5L385.2 347.1L385.7 351.0L386.2 349.1L386.7 351.1L387.2 351.6L387.7 344.2L388.2 345.5L388.7 347.7L389.2 346.5L389.7 346.6L390.2 345.8L390.7 353.1L391.2 344.8L391.7 350.0L392.2 347.3L392.7 342.7L393.2 351.1L393.7 340.5L394.2 348.9L394.7 350.4L395.2 342.4L395.7 350.6L396.2 345.8L396.7 352.5L397.2 345.0L397.7 351.6L398.2 350.8L398.7 339.1L399.2 352.0L399.7 346.3L400.2 342.7L400.7 346.6L401.2 346.9L401.7 356.8L402.2 348.4L402.7 341.9L403.2 357.4L403.7 350.3L404.2 342.5L404.7 343.5L405.2 349.6L405.7 347.3L406.2 348.8L406.7 346.1L407.2 346.9L407.7 344.7L408.2 347.1L408.7 346.3L409.2 343.1L409.7 345.6L410.2 351.8L410.7 350.5L411.2 348.8L411.7 338.5L412.2 350.5L412.7 347.3L413.2 356.6L413.7 350.0L414.2 346.1L414.7 342.8L415.2 343.5L415.7 349.7L416.2 340.0L416.7 347.8L417.2 343.3L417.7 348.6L418.2 341.9L418.7 344.9L419.2 347.6L419.7 345.4L420.2 351.7L420.7 345.5L421.2 350.2L421.7 348.0L422.2 342.1L422.7 347.4L423.2 350.1L423.7 351.3L424.2 346.4L424.7 351.6L425.2 350.3L425.7 345.8L426.2 348.0L426.7 345.4L427.2 345.5L427.7 343.0L428.2 348.0L428.7 349.1L429.2 343.0L429.7 341.4L430.2 344.9L430.7 343.5L431.2 343.0L431.7 343.8L432.2 344.2L432.7 344.4L433.2 348.6L433.7 349.0L434.2 344.7L434.7 340.3L435.2 343.4L435.7 346.8L436.2 351.1L436.7 344.5L437.2 350.0L437.7 342.8L438.2 351.0L438.7 343.9L439.2 343.8L439.7 345.5L440.2 338.8L440.7 354.3L441.2 343.2L441.7 346.4L442.2 348.2L442.7 345.4L443.2 348.3L443.7 347.4L444.3 350.8L444.8 350.3L445.3 340.6L445.8 341.2L446.3 347.9L446.8 345.8L447.3 352.8L447.8 342.4L448.3 350.6L448.8 347.0L449.3 341.3L449.8 348.8L450.3 344.2L450.8 349.8L451.3 345.6L451.8 347.0L452.3 343.6L452.8 344.5L453.3 346.5L453.8 347.4L454.3 344.9L454.8 344.7L455.3 354.3L455.8 344.3L456.3 352.7L456.8 344.8L457.3 347.5L457.8 348.6L458.3 345.3L458.8 349.1L459.3 347.9L459.8 346.8L460.3 351.7L460.8 346.1L461.3 343.0L461.8 347.5L462.3 346.7L462.8 345.4L463.3 345.1L463.8 348.2L464.3 346.1L464.8 340.6L465.3 348.7L465.8 348.3L466.3 350.1L466.8 346.3L467.3 343.0L467.8 335.4L468.3 349.6L468.8 349.6L469.3 349.5L469.8 347.1L470.3 344.0L470.8 350.2L471.3 346.4L471.8 346.8L472.3 349.0L472.8 346.3L473.3 344.1L473.8 343.9L474.3 345.6L474.8 344.7L475.3 350.9L475.8 349.9L476.3 343.6L476.8 344.3L477.3 341.9L477.8 341.4L478.3 346.3L478.8 341.3L479.3 351.1L479.8 344.9L480.3 343.6L480.8 340.4L481.3 348.1L481.8 338.9L482.3 347.2L482.8 343.0L483.3 341.7L483.8 330.5L484.3 344.1L484.8 338.7L485.3 336.2L485.8 339.7L486.3 344.0L486.8 340.1L487.3 339.4L487.8 339.4L488.3 337.8L488.8 344.7L489.3 347.9L489.8 335.6L490.3 347.3L490.8 338.9L491.3 339.0L491.8 341.0L492.3 342.0L492.8 341.4L493.3 340.3L493.8 342.3L494.3 340.7L494.8 335.0L495.3 341.1L495.8 336.1L496.3 336.9L496.8 335.8L497.3 337.9L497.8 335.0L498.3 337.3L498.8 341.8L499.3 340.3L499.8 333.6L500.3 342.0L500.8 334.1L501.3 342.5L501.8 339.4L502.3 332.6L502.8 338.2L503.3 341.7L503.8 347.3L504.3 338.1L504.8 340.3L505.3 335.2L505.8 342.9L506.3 340.6L506.8 337.8L507.3 337.6L507.8 348.2L508.3 337.6L508.8 338.5L509.3 343.0L509.8 340.3L510.3 344.9L510.8 346.0L511.3 337.0L511.8 344.1L512.3 339.3L512.8 342.7L513.3 340.1L513.8 343.6L514.3 337.0L514.8 348.2L515.3 340.5L515.8 337.1L516.3 346.7L516.8 350.8L517.3 339.8L517.8 342.5L518.3 344.5L518.8 339.6L519.3 343.4L519.8 341.0L520.3 344.8L520.8 345.5L521.3 343.1L521.8 346.5L522.3 339.9L522.8 344.8L523.3 347.1L523.8 348.5L524.3 355.1L524.8 343.5L525.3 347.8L525.8 346.6L526.3 346.2L526.9 343.0L527.4 346.5L527.9 349.9L528.4 349.9L528.9 347.7L529.4 350.8L529.9 343.6L530.4 350.6L530.9 351.7L531.4 349.5L531.9 347.4L532.4 346.4L532.9 353.6L533.4 346.3L533.9 345.8L534.4 348.9L534.9 347.7L535.4 346.7L535.9 362.5L536.4 344.1L536.9 345.5L537.4 348.5L537.9 345.3L538.4 344.2L538.9 344.9L539.4 347.5L539.9 346.4L540.4 349.6L540.9 341.0L541.4 348.8L541.9 342.8L542.4 346.6L542.9 348.9L543.4 345.3L543.9 344.2L544.4 340.3L544.9 338.9L545.4 347.6L545.9 348.5L546.4 341.1L546.9 344.5L547.4 343.2L547.9 342.4L548.4 342.3L548.9 338.4L549.4 342.2L549.9 339.6L550.4 336.1L550.9 340.4L551.4 338.9L551.9 334.6L552.4 344.8L552.9 336.8L553.4 339.8L553.9 343.0L554.4 341.0L554.9 333.1L555.4 337.8L555.9 334.3L556.4 331.8L556.9 331.6L557.4 341.4L557.9 333.3L558.4 332.8L558.9 329.9L559.4 329.4L559.9 338.2L560.4 333.8L560.9 336.7L561.4 327.5L561.9 320.6L562.4 329.7L562.9 323.8L563.4 327.8L563.9 328.6L564.4 313.5L564.9 319.0L565.4 305.0L565.9 308.1L566.4 314.7L566.9 309.0L567.4 311.0L567.9 303.7L568.4 303.7L568.9 302.7L569.4 299.8L569.9 298.6L570.4 290.8L570.9 297.2L571.4 295.7L571.9 288.8L572.4 292.8L572.9 285.5L573.4 283.5L573.9 280.5L574.4 275.1L574.9 279.4L575.4 277.8L575.9 273.9L576.4 267.1L576.9 268.4L577.4 267.8L577.9 267.2L578.4 261.8L578.9 259.6L579.4 256.2L579.9 251.5L580.4 259.7L580.9 244.8L581.4 238.0L581.9 238.5L582.4 239.1L582.9 229.3L583.4 236.5L583.9 223.2L584.4 218.2L584.9 220.8L585.4 216.6L585.9 210.4L586.4 213.8L586.9 204.4L587.4 207.6L587.9 197.2L588.4 207.6L588.9 196.5L589.4 193.0L589.9 187.8L590.4 186.0L590.9 187.0L591.4 190.5L591.9 183.5L592.4 187.7L592.9 182.6L593.4 190.6L593.9 183.2L594.4 178.5L594.9 176.2L595.4 182.7L595.9 186.0L596.4 184.4L596.9 183.5L597.4 178.7L597.9 187.0L598.4 193.0L598.9 190.4L599.4 191.8L599.9 196.1L600.4 187.9L600.9 195.9L601.4 193.9L601.9 195.6L602.4 204.3L602.9 204.0L603.4 205.3L603.9 208.9L604.4 213.5L604.9 213.6L605.4 216.8L605.9 217.3L606.4 228.6L606.9 224.0L607.4 225.0L607.9 233.3L608.4 234.2L608.9 230.2L609.4 236.5L610.0 249.9L610.5 241.0L611.0 240.1L611.5 245.7L612.0 246.9L612.5 250.6L613.0 251.1L613.5 254.9L614.0 251.4L614.5 251.4L615.0 252.6L615.5 255.5L616.0 262.0L616.5 264.3L617.0 264.6L617.5 263.0L618.0 265.9L618.5 265.7L619.0 272.0L619.5 267.3L620.0 272.9L620.5 271.8L621.0 271.2L621.5 270.4L622.0 275.1L622.5 274.6L623.0 273.1L623.5 276.3L624.0 281.7L624.5 275.8L625.0 289.4L625.5 284.3L626.0 277.7L626.5 278.5L627.0 288.7L627.5 284.3L628.0 292.3L628.5 279.6L629.0 290.2L629.5 292.9L630.0 292.9L630.5 290.6L631.0 296.8L631.5 289.1L632.0 292.2L632.5 298.6L633.0 290.9L633.5 299.3L634.0 301.4L634.5 302.6L635.0 297.0L635.5 299.9L636.0 303.2L636.5 303.8L637.0 306.4L637.5 300.9L638.0 304.8L638.5 310.8L639.0 306.6L639.5 306.7L640.0 308.2L640.5 309.9L641.0 310.2L641.5 317.1L642.0 316.9L642.5 316.2L643.0 313.9L643.5 309.2L644.0 318.1L644.5 311.3L645.0 316.0L645.5 320.8L646.0 311.8L646.5 319.4L647.0 316.8L647.5 323.2L648.0 320.3L648.5 319.7L649.0 320.2L649.5 318.3L650.0 322.9L650.5 318.9L651.0 326.4L651.5 320.0L652.0 320.8L652.5 320.4L653.0 321.7L653.5 321.0L654.0 326.2L654.5 327.0L655.0 326.5L655.5 330.3L656.0 320.9L656.5 330.5L657.0 324.3L657.5 332.9L658.0 332.6L658.5 329.6L659.0 326.8L659.5 325.0L660.0 327.9L660.5 333.2L661.0 328.4L661.5 327.2L662.0 329.6L662.5 326.9L663.0 330.2L663.5 332.0L664.0 326.0L664.5 329.5L665.0 332.4L665.5 326.5L666.0 322.4L666.5 334.7L667.0 343.5L667.5 332.0L668.0 328.4L668.5 334.3L669.0 329.1L669.5 329.6L670.0 326.1L670.5 330.6L671.0 336.5L671.5 329.5L672.0 339.3L672.5 334.7L673.0 331.1L673.5 333.0L674.0 333.8L674.5 332.1L675.0 335.3L675.5 332.1L676.0 331.7L676.5 330.4L677.0 334.0L677.5 338.6L678.0 328.8L678.5 334.0L679.0 338.3L679.5 332.6L680.0 334.0L680.5 334.0L681.0 338.0L681.5 337.4L682.0 338.1L682.5 333.0L683.0 338.5L683.5 338.2L684.0 337.7L684.5 334.7L685.0 338.2L685.5 333.9L686.0 336.0L686.5 338.1L687.0 338.2L687.5 337.3L688.0 338.5L688.5 333.5L689.0 325.8L689.5 335.6L690.0 337.6L690.5 328.9L691.0 332.8L691.5 337.7L692.0 338.9L692.6 336.7L693.1 340.6L693.6 344.6L694.1 330.7L694.6 337.9L695.1 333.4L695.6 345.9L696.1 336.7L696.6 330.5L697.1 333.0L697.6 332.8L698.1 332.8L698.6 337.8L699.1 331.2L699.6 338.2L700.1 334.3L700.6 340.7L701.1 343.6L701.6 337.3L702.1 337.8L702.6 336.2L703.1 338.8L703.6 338.8L704.1 345.3L704.6 334.2L705.1 331.8L705.6 339.0L706.1 344.5L706.6 339.9L707.1 334.6L707.6 338.5L708.1 346.2L708.6 338.1L709.1 341.4L709.6 338.1L710.1 339.0L710.6 341.3L711.1 336.2L711.6 340.0L712.1 343.4L712.6 340.5L713.1 333.8L713.6 339.9L714.1 341.3L714.6 349.6L715.1 342.0L715.6 341.3L716.1 337.5L716.6 343.9L717.1 337.8L717.6 335.0L718.1 342.1L718.6 338.5L719.1 332.1L719.6 336.4L720.1 340.2L720.6 338.1L721.1 328.4L721.6 337.9L722.1 343.9L722.6 337.1L723.1 337.0L723.6 337.1L724.1 333.4L724.6 329.5L725.1 328.3L725.6 327.7L726.1 331.5L726.6 334.1L727.1 333.6L727.6 335.0L728.1 324.2L728.6 331.2L729.1 325.9L729.6 326.2L730.1 322.6L730.6 326.4L731.1 323.4L731.6 320.4L732.1 314.7L732.6 320.6L733.1 318.4L733.6 318.7L734.1 322.4L734.6 313.5L735.1 311.5L735.6 317.2L736.1 308.9L736.6 316.3L737.1 309.4L737.6 311.0L738.1 305.8L738.6 309.6L739.1 295.4L739.6 304.9L740.1 296.4L740.6 294.0L741.1 299.3L741.6 296.6L742.1 291.3L742.6 294.2L743.1 292.4L743.6 294.8L744.1 290.9L744.6 289.5L745.1 283.2L745.6 281.0L746.1 284.1L746.6 280.6L747.1 277.9L747.6 274.1L748.1 274.1L748.6 273.4L749.1 266.5L749.6 264.5L750.1 264.7L750.6 264.8L751.1 260.8L751.6 257.2L752.1 258.3L752.6 257.9L753.1 259.2L753.6 249.6L754.1 243.2L754.6 236.9L755.1 245.0L755.6 243.1L756.1 241.7L756.6 242.8L757.1 248.3L757.6 234.7L758.1 235.2L758.6 235.6L759.1 232.8L759.6 231.8L760.1 245.1L760.6 242.6L761.1 245.8L761.6 246.6L762.1 258.1L762.6 260.7L763.1 265.7L763.6 269.4L764.1 269.3L764.6 284.8L765.1 289.3L765.6 281.6L766.1 292.7L766.6 297.2L767.1 292.8L767.6 297.7L768.1 302.3L768.6 303.1L769.1 303.5L769.6 308.5L770.1 309.2L770.6 312.6L771.1 319.9L771.6 312.8L772.1 312.7L772.6 319.4L773.1 319.5L773.6 320.1L774.1 326.5L774.6 324.8L775.1 329.3L775.7 327.8L776.2 325.5L776.7 336.6L777.2 334.4L777.7 334.4L778.2 333.3L778.7 327.8L779.2 336.7L779.7 331.9L780.2 329.1L780.7 331.5L781.2 328.4L781.7 334.5L782.2 335.6L782.7 335.7L783.2 333.8L783.7 339.3L784.2 335.8L784.7 335.4L785.2 337.8L785.7 342.9L786.2 333.8L786.7 332.3L787.2 334.3L787.7 341.3L788.2 341.6L788.7 339.8L789.2 341.0L789.7 338.2L790.2 334.9L790.7 336.9L791.2 337.3L791.7 338.8L792.2 344.4L792.7 344.5L793.2 340.0L793.7 339.6L794.2 341.1L794.7 340.3L795.2 343.7L795.7 344.5L796.2 340.3L796.7 342.9L797.2 344.5L797.7 344.0L798.2 343.5L798.7 341.2L799.2 345.0L799.7 346.2L800.2 345.8L800.7 341.2L801.2 343.2L801.7 339.7L802.2 350.7L802.7 342.1L803.2 344.3L803.7 341.9L804.2 350.8L804.7 342.5L805.2 348.1L805.7 342.2L806.2 337.3L806.7 344.3L807.2 349.2L807.7 343.4L808.2 348.3L808.7 344.9L809.2 345.1L809.7 345.6L810.2 345.9L810.7 337.4L811.2 343.6L811.7 349.1L812.2 340.3L812.7 347.8L813.2 343.2L813.7 343.6L814.2 345.3L814.7 343.8L815.2 348.0L815.7 346.3L816.2 345.0L816.7 345.4L817.2 340.4L817.7 343.7L818.2 345.1L818.7 347.0L819.2 347.0L819.7 345.5L820.2 342.3L820.7 344.7L821.2 348.2L821.7 345.5L822.2 346.1L822.7 344.8L823.2 346.7L823.7 351.0L824.2 342.3L824.7 338.9L825.2 346.8L825.7 342.7L826.2 348.9L826.7 342.3L827.2 344.0L827.7 345.6L828.2 349.4L828.7 347.4L829.2 348.2L829.7 346.2L830.2 342.0L830.7 340.3L831.2 348.7L831.7 342.2L832.2 362.5L832.7 341.2L833.2 344.0L833.7 349.9L834.2 350.1L834.7 353.9L835.2 343.4L835.7 343.2L836.2 350.1L836.7 343.2L837.2 355.3L837.7 343.7L838.2 345.9L838.7 350.8L839.2 345.3L839.7 348.3L840.2 353.9L840.7 343.9L841.2 348.1L841.7 352.2L842.2 345.6L842.7 343.7L843.2 349.8L843.7 346.2L844.2 341.0L844.7 345.2L845.2 346.9L845.7 349.6L846.2 342.1L846.7 345.6L847.2 345.1L847.7 346.6L848.2 346.9L848.7 347.9L849.2 350.5L849.7 345.6L850.2 344.7L850.7 343.7L851.2 346.0L851.7 346.1L852.2 344.0L852.7 349.0L853.2 351.6L853.7 347.7L854.2 348.8L854.7 348.2L855.2 346.8L855.7 349.2L856.2 348.0L856.7 348.0L857.2 349.2L857.7 346.0L858.3 344.9L858.8 343.0L859.3 345.9L859.8 341.8L860.3 348.7L860.8 344.6L861.3 342.7L861.8 340.9L862.3 348.3L862.8 346.7L863.3 345.2L863.8 345.1L864.3 345.2L864.8 347.6L865.3 347.9L865.8 354.7L866.3 346.2L866.8 345.9L867.3 344.4L867.8 353.8L868.3 340.8L868.8 354.4L869.3 350.9L869.8 349.7L870.3 347.8L870.8 342.6L871.3 348.8L871.8 341.2L872.3 350.3L872.8 341.3L873.3 348.9L873.8 350.8L874.3 352.6L874.8 345.1L875.3 349.0L875.8 350.5L876.3 352.1L876.8 347.5L877.3 347.8L877.8 345.3L878.3 342.9L878.8 349.8L879.3 349.8L879.8 349.6L880.3 348.9L880.8 343.6L881.3 341.0L881.8 347.3L882.3 346.3L882.8 352.9L883.3 353.3L883.8 348.5L884.3 348.9L884.8 352.1L885.3 351.5L885.8 349.5L886.3 343.9L886.8 342.0L887.3 347.4L887.8 343.9L888.3 348.5L888.8 345.6L889.3 345.3L889.8 347.0L890.3 345.8L890.8 347.9L891.3 350.5L891.8 350.8L892.3 347.8L892.8 345.0L893.3 347.2L893.8 349.4L894.3 350.4L894.8 347.1L895.3 347.3L895.8 349.5L896.3 346.1L896.8 347.4L897.3 345.7L897.8 350.3L898.3 345.6L898.8 348.6L899.3 347.6L899.8 351.0L900.3 347.7L900.8 344.3L901.3 353.7L901.8 350.0L902.3 354.8L902.8 350.1L903.3 346.4L903.8 346.7L904.3 348.0L904.8 355.2L905.3 344.7L905.8 350.7L906.3 345.7L906.8 342.2L907.3 345.0L907.8 343.9L908.3 345.0L908.8 352.7L909.3 349.1L909.8 351.1L910.3 349.4L910.8 348.2L911.3 350.0L911.8 347.1L912.3 349.5L912.8 344.1L913.3 349.0L913.8 343.4L914.3 339.6L914.8 346.6L915.3 351.3L915.8 350.4L916.3 346.6L916.8 349.8L917.3 344.4L917.8 347.8L918.3 349.5L918.8 348.8L919.3 342.3L919.8 356.2L920.3 348.4L920.8 346.3L921.3 342.0L921.8 346.9L922.3 351.4L922.8 347.1L923.3 347.3L923.8 345.9L924.3 349.6L924.8 345.0L925.3 349.0L925.8 346.4L926.3 338.9L926.8 351.3L927.3 349.9L927.8 350.3L928.3 339.7L928.8 345.5L929.3 346.1L929.8 343.8L930.3 343.2L930.8 346.8L931.3 352.5L931.8 348.8L932.3 348.4L932.8 347.3L933.3 348.8L933.8 348.7L934.3 355.1L934.8 349.3L935.3 351.3L935.8 346.6L936.3 349.8L936.8 348.1" fill="none" stroke="#f2a31e" stroke-width="1" shape-rendering="crispEdges"/><path d="M311.6 353.8L312.1 351.7L312.6 350.3L313.1 356.7L313.6 359.7L314.1 350.1L314.6 352.0L315.1 351.3L315.6 350.8L316.1 351.3L316.6 351.0L317.1 352.9L317.6 348.0L318.1 349.1L318.6 349.0L319.1 349.0L319.6 351.1L320.1 354.8L320.6 351.0L321.1 348.4L321.6 349.9L322.1 348.1L322.6 349.3L323.1 347.1L323.6 352.0L324.1 350.2L324.6 347.9L325.1 350.2L325.6 356.1L326.1 348.5L326.6 349.4L327.1 356.2L327.6 352.9L328.1 350.2L328.6 354.7L329.1 350.6L329.6 354.1L330.1 350.1L330.6 351.3L331.1 352.5L331.6 354.4L332.1 349.4L332.6 355.4L333.1 351.1L333.6 356.3L334.1 352.0L334.6 345.5L335.1 351.5L335.6 342.1L336.1 347.6L336.6 349.4L337.1 351.6L337.6 353.6L338.1 354.5L338.6 350.0L339.1 352.8L339.6 355.4L340.1 355.5L340.6 350.0L341.1 347.6L341.6 340.1L342.1 353.6L342.6 344.7L343.1 356.8L343.6 351.1L344.1 349.1L344.6 354.2L345.1 350.5L345.6 351.2L346.1 351.5L346.6 353.1L347.1 351.9L347.6 348.6L348.1 353.3L348.6 350.8L349.1 348.8L349.6 354.6L350.1 351.6L350.6 354.5L351.1 346.6L351.6 346.1L352.1 350.8L352.6 352.7L353.1 356.4L353.6 346.7L354.1 352.2L354.6 355.4L355.1 352.1L355.6 353.0L356.1 349.1L356.6 350.5L357.1 349.7L357.6 347.3L358.1 354.1L358.6 352.3L359.1 351.7L359.6 350.9L360.1 348.0L360.6 353.5L361.2 360.1L361.7 346.7L362.2 355.5L362.7 347.3L363.2 355.8L363.7 344.9L364.2 349.9L364.7 351.8L365.2 347.2L365.7 350.2L366.2 350.3L366.7 350.8L367.2 348.5L367.7 349.5L368.2 344.3L368.7 348.0L369.2 350.2L369.7 352.5L370.2 354.1L370.7 356.4L371.2 350.8L371.7 356.9L372.2 349.7L372.7 355.1L373.2 345.7L373.7 356.1L374.2 354.6L374.7 354.8L375.2 350.5L375.7 351.0L376.2 351.0L376.7 355.2L377.2 351.0L377.7 354.3L378.2 348.1L378.7 354.1L379.2 352.3L379.7 348.5L380.2 354.8L380.7 355.2L381.2 351.9L381.7 353.1L382.2 352.0L382.7 349.8L383.2 349.5L383.7 351.3L384.2 347.9L384.7 354.0L385.2 347.8L385.7 354.4L386.2 350.8L386.7 354.8L387.2 349.3L387.7 351.8L388.2 348.7L388.7 359.5L389.2 352.3L389.7 351.5L390.2 352.5L390.7 346.4L391.2 356.7L391.7 350.7L392.2 355.7L392.7 353.2L393.2 351.6L393.7 352.4L394.2 358.0L394.7 351.7L395.2 343.8L395.7 346.2L396.2 349.0L396.7 349.3L397.2 350.3L397.7 352.8L398.2 354.8L398.7 350.7L399.2 353.3L399.7 354.3L400.2 356.8L400.7 352.7L401.2 350.8L401.7 354.6L402.2 347.8L402.7 353.3L403.2 351.5L403.7 357.1L404.2 355.2L404.7 347.6L405.2 354.9L405.7 349.5L406.2 347.8L406.7 352.6L407.2 351.2L407.7 353.4L408.2 352.0L408.7 346.2L409.2 352.8L409.7 342.6L410.2 343.9L410.7 351.0L411.2 353.4L411.7 352.9L412.2 351.3L412.7 349.0L413.2 354.8L413.7 356.9L414.2 346.6L414.7 347.3L415.2 350.0L415.7 350.5L416.2 353.2L416.7 351.6L417.2 351.0L417.7 351.7L418.2 352.6L418.7 352.1L419.2 354.2L419.7 352.1L420.2 354.2L420.7 348.5L421.2 348.1L421.7 351.0L422.2 343.9L422.7 350.9L423.2 350.6L423.7 356.5L424.2 350.3L424.7 354.2L425.2 349.9L425.7 353.4L426.2 345.5L426.7 352.4L427.2 356.7L427.7 349.6L428.2 340.4L428.7 348.0L429.2 348.4L429.7 348.5L430.2 348.5L430.7 353.6L431.2 352.0L431.7 355.2L432.2 351.9L432.7 351.6L433.2 347.1L433.7 350.2L434.2 351.6L434.7 346.4L435.2 350.8L435.7 343.7L436.2 352.6L436.7 357.1L437.2 353.9L437.7 351.5L438.2 347.5L438.7 349.5L439.2 354.3L439.7 352.0L440.2 352.7L440.7 351.7L441.2 346.0L441.7 350.6L442.2 350.3L442.7 349.8L443.2 351.3L443.7 354.5L444.3 342.9L444.8 353.8L445.3 352.2L445.8 353.7L446.3 349.9L446.8 347.5L447.3 351.2L447.8 346.1L448.3 350.9L448.8 352.2L449.3 351.8L449.8 338.2L450.3 353.8L450.8 353.6L451.3 340.9L451.8 351.7L452.3 349.7L452.8 355.4L453.3 357.7L453.8 356.3L454.3 352.1L454.8 352.7L455.3 350.0L455.8 348.8L456.3 352.9L456.8 354.2L457.3 354.5L457.8 350.9L458.3 350.6L458.8 349.9L459.3 348.6L459.8 345.0L460.3 349.8L460.8 352.7L461.3 344.7L461.8 350.0L462.3 350.7L462.8 348.5L463.3 348.3L463.8 345.8L464.3 351.6L464.8 349.0L465.3 350.3L465.8 343.7L466.3 347.4L466.8 353.4L467.3 350.7L467.8 340.8L468.3 343.2L468.8 347.6L469.3 345.9L469.8 346.4L470.3 349.4L470.8 344.0L471.3 347.2L471.8 352.4L472.3 352.1L472.8 349.2L473.3 346.0L473.8 343.9L474.3 344.4L474.8 340.4L475.3 344.8L475.8 338.6L476.3 337.8L476.8 344.7L477.3 343.6L477.8 336.0L478.3 331.2L478.8 341.1L479.3 339.5L479.8 343.0L480.3 338.0L480.8 335.9L481.3 333.2L481.8 331.2L482.3 337.5L482.8 334.9L483.3 338.5L483.8 336.1L484.3 330.6L484.8 334.7L485.3 333.0L485.8 327.5L486.3 333.2L486.8 324.0L487.3 325.7L487.8 318.9L488.3 324.0L488.8 324.4L489.3 320.2L489.8 316.5L490.3 310.5L490.8 320.4L491.3 306.8L491.8 299.7L492.3 311.5L492.8 309.9L493.3 305.4L493.8 298.7L494.3 300.2L494.8 298.0L495.3 296.6L495.8 293.7L496.3 292.4L496.8 290.1L497.3 290.4L497.8 282.0L498.3 276.8L498.8 280.7L499.3 276.3L499.8 272.6L500.3 275.8L500.8 269.6L501.3 270.6L501.8 271.2L502.3 261.5L502.8 253.3L503.3 255.3L503.8 248.6L504.3 253.1L504.8 241.8L505.3 237.2L505.8 240.2L506.3 226.5L506.8 228.3L507.3 227.7L507.8 219.2L508.3 222.6L508.8 218.8L509.3 205.8L509.8 203.5L510.3 202.8L510.8 195.9L511.3 196.1L511.8 184.7L512.3 177.7L512.8 183.7L513.3 171.7L513.8 175.2L514.3 167.1L514.8 166.4L515.3 162.8L515.8 169.6L516.3 170.0L516.8 175.3L517.3 177.5L517.8 180.9L518.3 182.9L518.8 188.0L519.3 185.3L519.8 194.6L520.3 201.1L520.8 199.3L521.3 204.7L521.8 213.4L522.3 205.1L522.8 220.1L523.3 215.6L523.8 215.8L524.3 224.1L524.8 226.9L525.3 234.1L525.8 234.4L526.3 242.9L526.9 229.2L527.4 238.8L527.9 245.6L528.4 245.5L528.9 252.9L529.4 258.5L529.9 257.9L530.4 260.3L530.9 258.4L531.4 264.6L531.9 271.4L532.4 261.4L532.9 269.1L533.4 272.9L533.9 272.2L534.4 280.9L534.9 275.5L535.4 279.0L535.9 284.9L536.4 288.9L536.9 278.5L537.4 284.4L537.9 287.3L538.4 288.4L538.9 284.3L539.4 290.5L539.9 284.7L540.4 292.5L540.9 284.6L541.4 301.1L541.9 291.2L542.4 288.8L542.9 294.6L543.4 291.9L543.9 294.5L544.4 292.2L544.9 291.4L545.4 299.1L545.9 294.4L546.4 298.4L546.9 295.1L547.4 294.7L547.9 308.3L548.4 297.8L548.9 300.9L549.4 302.5L549.9 305.6L550.4 302.1L550.9 312.3L551.4 303.9L551.9 304.6L552.4 310.0L552.9 307.6L553.4 310.5L553.9 313.1L554.4 318.1L554.9 316.9L555.4 310.2L555.9 311.7L556.4 315.1L556.9 317.0L557.4 316.3L557.9 316.6L558.4 325.4L558.9 326.5L559.4 318.8L559.9 316.9L560.4 325.1L560.9 322.5L561.4 318.8L561.9 313.4L562.4 314.6L562.9 321.2L563.4 315.6L563.9 317.6L564.4 309.3L564.9 310.7L565.4 313.7L565.9 311.2L566.4 314.9L566.9 309.3L567.4 315.4L567.9 311.1L568.4 301.6L568.9 304.1L569.4 309.9L569.9 310.3L570.4 296.2L570.9 300.9L571.4 301.6L571.9 295.5L572.4 301.3L572.9 301.8L573.4 296.6L573.9 300.2L574.4 295.5L574.9 289.3L575.4 293.0L575.9 287.1L576.4 287.7L576.9 283.8L577.4 288.2L577.9 281.4L578.4 286.7L578.9 278.2L579.4 279.2L579.9 275.1L580.4 271.4L580.9 272.1L581.4 272.5L581.9 262.6L582.4 256.5L582.9 257.5L583.4 258.7L583.9 250.5L584.4 247.9L584.9 243.4L585.4 245.8L585.9 241.4L586.4 244.5L586.9 238.3L587.4 232.4L587.9 233.8L588.4 225.7L588.9 232.4L589.4 226.1L589.9 223.2L590.4 220.4L590.9 225.9L591.4 227.6L591.9 219.9L592.4 222.4L592.9 216.8L593.4 224.3L593.9 223.0L594.4 218.3L594.9 216.0L595.4 220.0L595.9 220.0L596.4 221.7L596.9 217.3L597.4 225.7L597.9 221.9L598.4 224.4L598.9 226.1L599.4 229.4L599.9 231.4L600.4 227.6L600.9 228.5L601.4 240.7L601.9 232.2L602.4 237.2L602.9 237.5L603.4 233.8L603.9 243.5L604.4 242.7L604.9 249.5L605.4 247.6L605.9 250.4L606.4 251.4L606.9 253.6L607.4 251.6L607.9 257.9L608.4 263.6L608.9 265.0L609.4 269.3L610.0 269.1L610.5 275.5L611.0 274.6L611.5 278.0L612.0 272.1L612.5 281.4L613.0 274.2L613.5 280.8L614.0 278.2L614.5 275.9L615.0 284.5L615.5 276.6L616.0 282.5L616.5 284.6L617.0 279.4L617.5 283.4L618.0 286.5L618.5 288.2L619.0 290.2L619.5 287.5L620.0 289.4L620.5 291.7L621.0 288.0L621.5 291.6L622.0 290.5L622.5 294.4L623.0 290.7L623.5 290.4L624.0 293.6L624.5 296.0L625.0 297.8L625.5 297.8L626.0 309.3L626.5 298.7L627.0 305.8L627.5 300.6L628.0 297.3L628.5 301.1L629.0 309.1L629.5 311.0L630.0 306.9L630.5 306.3L631.0 309.7L631.5 307.4L632.0 308.6L632.5 311.5L633.0 303.4L633.5 311.7L634.0 311.9L634.5 314.5L635.0 310.8L635.5 314.3L636.0 313.2L636.5 316.7L637.0 319.8L637.5 318.4L638.0 319.7L638.5 324.4L639.0 322.4L639.5 322.2L640.0 318.4L640.5 317.9L641.0 322.9L641.5 329.4L642.0 324.8L642.5 321.1L643.0 325.1L643.5 326.1L644.0 324.4L644.5 323.5L645.0 329.0L645.5 333.0L646.0 328.8L646.5 332.5L647.0 334.2L647.5 328.6L648.0 328.9L648.5 329.4L649.0 328.7L649.5 327.6L650.0 332.0L650.5 329.5L651.0 331.7L651.5 326.6L652.0 326.4L652.5 325.9L653.0 331.2L653.5 333.4L654.0 330.8L654.5 328.1L655.0 333.1L655.5 331.0L656.0 326.9L656.5 334.7L657.0 338.5L657.5 335.7L658.0 331.9L658.5 337.6L659.0 334.4L659.5 328.0L660.0 334.6L660.5 334.3L661.0 335.0L661.5 338.1L662.0 334.0L662.5 330.0L663.0 332.2L663.5 331.3L664.0 335.6L664.5 335.6L665.0 333.5L665.5 339.8L666.0 336.5L666.5 339.7L667.0 333.6L667.5 335.2L668.0 337.0L668.5 337.1L669.0 340.0L669.5 340.3L670.0 337.0L670.5 340.0L671.0 339.4L671.5 337.3L672.0 334.1L672.5 337.0L673.0 334.2L673.5 338.1L674.0 335.9L674.5 329.0L675.0 335.8L675.5 336.6L676.0 336.7L676.5 336.6L677.0 330.2L677.5 332.5L678.0 339.1L678.5 337.1L679.0 341.0L679.5 340.6L680.0 337.6L680.5 332.6L681.0 337.7L681.5 337.8L682.0 341.6L682.5 341.2L683.0 339.9L683.5 340.0L684.0 340.4L684.5 339.8L685.0 335.2L685.5 342.8L686.0 340.0L686.5 335.3L687.0 337.7L687.5 336.2L688.0 339.4L688.5 342.5L689.0 343.1L689.5 333.8L690.0 340.0L690.5 338.6L691.0 343.6L691.5 338.9L692.0 339.4L692.6 341.7L693.1 340.3L693.6 331.8L694.1 334.7L694.6 343.2L695.1 341.7L695.6 347.4L696.1 339.8L696.6 341.0L697.1 344.5L697.6 336.9L698.1 335.9L698.6 342.0L699.1 343.2L699.6 340.4L700.1 337.7L700.6 341.9L701.1 335.3L701.6 341.5L702.1 333.7L702.6 342.1L703.1 341.3L703.6 339.9L704.1 337.5L704.6 336.8L705.1 340.3L705.6 335.5L706.1 340.8L706.6 341.1L707.1 343.8L707.6 335.6L708.1 340.9L708.6 339.9L709.1 342.3L709.6 340.4L710.1 335.9L710.6 334.7L711.1 337.3L711.6 341.9L712.1 337.5L712.6 340.0L713.1 342.9L713.6 340.8L714.1 343.4L714.6 342.0L715.1 343.5L715.6 343.4L716.1 337.8L716.6 335.4L717.1 342.5L717.6 343.0L718.1 344.2L718.6 335.1L719.1 343.3L719.6 338.3L720.1 340.6L720.6 342.8L721.1 338.0L721.6 336.1L722.1 342.0L722.6 340.2L723.1 338.4L723.6 344.0L724.1 347.0L724.6 341.7L725.1 341.3L725.6 341.5L726.1 342.5L726.6 339.8L727.1 342.6L727.6 337.8L728.1 338.8L728.6 338.7L729.1 338.7L729.6 341.8L730.1 334.7L730.6 336.2L731.1 348.0L731.6 338.7L732.1 339.7L732.6 343.1L733.1 338.9L733.6 335.6L734.1 341.4L734.6 341.0L735.1 338.7L735.6 333.4L736.1 343.6L736.6 344.8L737.1 342.1L737.6 344.2L738.1 339.6L738.6 338.1L739.1 343.9L739.6 337.8L740.1 341.9L740.6 349.9L741.1 335.4L741.6 338.1L742.1 340.2L742.6 343.3L743.1 345.8L743.6 338.7L744.1 341.7L744.6 342.5L745.1 343.7L745.6 344.1L746.1 341.9L746.6 343.2L747.1 342.3L747.6 340.9L748.1 336.6L748.6 336.2L749.1 346.8L749.6 339.7L750.1 338.3L750.6 344.2L751.1 346.9L751.6 344.2L752.1 345.8L752.6 344.4L753.1 349.5L753.6 345.6L754.1 344.2L754.6 349.7L755.1 340.2L755.6 342.9L756.1 340.3L756.6 344.7L757.1 341.6L757.6 341.1L758.1 348.5L758.6 344.6L759.1 346.4L759.6 346.5L760.1 341.9L760.6 343.0L761.1 344.7L761.6 345.7L762.1 340.9L762.6 336.9L763.1 341.5L763.6 338.4L764.1 346.8L764.6 345.3L765.1 340.4L765.6 344.1L766.1 343.3L766.6 338.3L767.1 346.4L767.6 343.9L768.1 343.8L768.6 345.7L769.1 338.2L769.6 346.3L770.1 347.2L770.6 346.3L771.1 338.7L771.6 344.7L772.1 338.2L772.6 340.9L773.1 344.7L773.6 345.9L774.1 341.5L774.6 348.8L775.1 346.4L775.7 349.7L776.2 346.1L776.7 342.2L777.2 344.5L777.7 342.1L778.2 346.4L778.7 345.0L779.2 342.8L779.7 345.4L780.2 348.1L780.7 344.3L781.2 349.5L781.7 341.0L782.2 341.7L782.7 345.7L783.2 341.5L783.7 341.1L784.2 345.5L784.7 349.6L785.2 348.0L785.7 345.0L786.2 346.5L786.7 340.8L787.2 346.6L787.7 348.9L788.2 347.1L788.7 342.7L789.2 345.8L789.7 353.4L790.2 351.2L790.7 342.7L791.2 342.7L791.7 339.3L792.2 353.6L792.7 337.9L793.2 343.2L793.7 342.4L794.2 348.9L794.7 345.0L795.2 340.6L795.7 343.5L796.2 344.3L796.7 339.5L797.2 347.5L797.7 343.6L798.2 344.5L798.7 341.2L799.2 342.4L799.7 343.2L800.2 351.5L800.7 345.6L801.2 343.9L801.7 344.4L802.2 356.2L802.7 349.6L803.2 343.8L803.7 342.7L804.2 344.1L804.7 349.0L805.2 343.3L805.7 342.6L806.2 345.1L806.7 347.1L807.2 345.5L807.7 342.5L808.2 350.9L808.7 347.8L809.2 340.0L809.7 343.8L810.2 341.8L810.7 339.2L811.2 341.3L811.7 346.7L812.2 349.9L812.7 346.5L813.2 347.5L813.7 352.5L814.2 345.1L814.7 349.8L815.2 342.4L815.7 344.7L816.2 344.4L816.7 348.1L817.2 350.7L817.7 351.9L818.2 350.1L818.7 348.4L819.2 343.5L819.7 354.7L820.2 347.1L820.7 342.6L821.2 355.8L821.7 349.8L822.2 346.4L822.7 351.0L823.2 347.2L823.7 347.7L824.2 342.0L824.7 353.8L825.2 343.8L825.7 349.1L826.2 350.7L826.7 348.9L827.2 343.5L827.7 345.6L828.2 349.2L828.7 354.5L829.2 348.1L829.7 348.8L830.2 348.4L830.7 350.0L831.2 347.2L831.7 345.8L832.2 348.9L832.7 348.9L833.2 346.9L833.7 347.4L834.2 347.6L834.7 343.5L835.2 348.9L835.7 345.7L836.2 340.4L836.7 349.8L837.2 349.2L837.7 346.8L838.2 345.3L838.7 342.8L839.2 351.7L839.7 351.2L840.2 348.5L840.7 343.4L841.2 351.9L841.7 348.0L842.2 344.1L842.7 344.0L843.2 352.8L843.7 350.4L844.2 343.6L844.7 349.0L845.2 341.8L845.7 352.9L846.2 351.4L846.7 360.5L847.2 347.3L847.7 352.6L848.2 354.1L848.7 350.5L849.2 348.3L849.7 353.5L850.2 345.5L850.7 349.0L851.2 343.8L851.7 347.3L852.2 354.6L852.7 350.7L853.2 346.6L853.7 352.4L854.2 346.7L854.7 347.8L855.2 348.9L855.7 344.8L856.2 353.8L856.7 351.3L857.2 349.2L857.7 353.0L858.3 351.0L858.8 350.8L859.3 349.7L859.8 351.4L860.3 344.6L860.8 355.5L861.3 349.9L861.8 351.7L862.3 346.4L862.8 351.1L863.3 345.0L863.8 347.4L864.3 344.8L864.8 346.0L865.3 349.8L865.8 346.1L866.3 348.5L866.8 348.6L867.3 342.8L867.8 352.3L868.3 347.2L868.8 351.9L869.3 354.6L869.8 347.8L870.3 349.3L870.8 348.0L871.3 349.8L871.8 351.0L872.3 349.4L872.8 352.7L873.3 347.0L873.8 350.5L874.3 345.5L874.8 346.5L875.3 351.1L875.8 355.1L876.3 342.5L876.8 348.7L877.3 345.7L877.8 359.1L878.3 356.3L878.8 345.2L879.3 348.4L879.8 350.9L880.3 350.6L880.8 346.3L881.3 352.6L881.8 346.3L882.3 356.2L882.8 351.8L883.3 352.9L883.8 354.7L884.3 352.3L884.8 353.5L885.3 349.1L885.8 348.9L886.3 349.0L886.8 348.1L887.3 354.9L887.8 349.8L888.3 347.4L888.8 352.6L889.3 350.0L889.8 350.5L890.3 348.5L890.8 351.8L891.3 354.4L891.8 354.4L892.3 354.1L892.8 347.9L893.3 350.6L893.8 351.5L894.3 345.8L894.8 350.5L895.3 358.0L895.8 351.9L896.3 352.5L896.8 355.3L897.3 352.0L897.8 350.7L898.3 344.4L898.8 349.4L899.3 352.8L899.8 355.3L900.3 344.7L900.8 350.4L901.3 349.0L901.8 354.8L902.3 346.0L902.8 346.8L903.3 346.3L903.8 351.5L904.3 347.1L904.8 352.1L905.3 350.5L905.8 358.0L906.3 346.6L906.8 359.0L907.3 352.1L907.8 354.7L908.3 343.4L908.8 346.1L909.3 351.3L909.8 355.7L910.3 348.9L910.8 353.2L911.3 352.4L911.8 353.4L912.3 345.4L912.8 350.6L913.3 353.1L913.8 347.3L914.3 347.4L914.8 346.4L915.3 347.4L915.8 343.6L916.3 353.7L916.8 351.8L917.3 346.5L917.8 347.9L918.3 350.2L918.8 348.4L919.3 348.4L919.8 355.5L920.3 349.7L920.8 352.3L921.3 351.5L921.8 345.5L922.3 351.9L922.8 348.3L923.3 350.9L923.8 352.2L924.3 353.1L924.8 359.5L925.3 351.6L925.8 352.0L926.3 351.0L926.8 354.5L927.3 352.2L927.8 354.6L928.3 350.9L928.8 350.4L929.3 345.8L929.8 349.3L930.3 349.8L930.8 352.7L931.3 343.7L931.8 352.3L932.3 355.1L932.8 347.0L933.3 346.1L933.8 352.3L934.3 344.4L934.8 356.6L935.3 350.7L935.8 350.4L936.3 347.6L936.8 355.3" fill="none" stroke="#f27c24" stroke-width="1" shape-rendering="crispEdges"/><path d="M311.6 345.8L312.1 351.8L312.6 354.6L313.1 355.7L313.6 351.4L314.1 353.5L314.6 350.6L315.1 348.5L315.6 354.4L316.1 346.2L316.6 352.6L317.1 350.0L317.6 349.3L318.1 347.1L318.6 339.7L319.1 351.9L319.6 346.6L320.1 355.1L320.6 347.8L321.1 346.8L321.6 349.4L322.1 352.8L322.6 353.6L323.1 344.4L323.6 348.4L324.1 353.0L324.6 350.2L325.1 350.6L325.6 350.3L326.1 349.6L326.6 353.3L327.1 346.0L327.6 350.4L328.1 350.7L328.6 354.7L329.1 352.0L329.6 352.7L330.1 351.0L330.6 352.4L331.1 349.7L331.6 350.9L332.1 352.0L332.6 348.8L333.1 348.7L333.6 341.5L334.1 353.4L334.6 347.9L335.1 349.8L335.6 349.1L336.1 357.8L336.6 358.2L337.1 351.5L337.6 344.7L338.1 348.7L338.6 352.1L339.1 350.7L339.6 349.1L340.1 355.3L340.6 348.1L341.1 354.5L341.6 352.6L342.1 350.5L342.6 352.8L343.1 343.7L343.6 350.0L344.1 352.7L344.6 349.0L345.1 348.2L345.6 353.8L346.1 348.2L346.6 350.3L347.1 355.8L347.6 352.7L348.1 348.6L348.6 355.0L349.1 350.7L349.6 348.5L350.1 350.1L350.6 359.3L351.1 346.6L351.6 352.3L352.1 348.2L352.6 351.0L353.1 355.0L353.6 352.0L354.1 357.0L354.6 352.3L355.1 345.9L355.6 353.0L356.1 346.8L356.6 354.1L357.1 351.5L357.6 348.4L358.1 350.0L358.6 346.2L359.1 353.6L359.6 344.4L360.1 355.0L360.6 352.3L361.2 352.3L361.7 352.7L362.2 353.9L362.7 351.5L363.2 349.3L363.7 357.1L364.2 357.3L364.7 347.7L365.2 350.6L365.7 352.9L366.2 346.3L366.7 346.9L367.2 345.8L367.7 356.6L368.2 351.9L368.7 342.6L369.2 348.9L369.7 350.0L370.2 348.6L370.7 353.2L371.2 360.0L371.7 352.0L372.2 351.7L372.7 347.3L373.2 346.6L373.7 346.8L374.2 353.7L374.7 360.1L375.2 349.9L375.7 348.9L376.2 354.5L376.7 348.9L377.2 350.0L377.7 353.0L378.2 351.0L378.7 350.6L379.2 355.4L379.7 354.2L380.2 356.3L380.7 352.8L381.2 348.3L381.7 351.8L382.2 356.1L382.7 351.2L383.2 350.5L383.7 347.8L384.2 348.0L384.7 351.4L385.2 361.5L385.7 352.6L386.2 345.0L386.7 355.9L387.2 350.7L387.7 353.3L388.2 351.9L388.7 346.1L389.2 350.8L389.7 348.3L390.2 348.6L390.7 353.6L391.2 348.8L391.7 353.7L392.2 349.5L392.7 349.0L393.2 350.4L393.7 352.8L394.2 354.4L394.7 349.0L395.2 351.0L395.7 347.7L396.2 345.4L396.7 353.6L397.2 344.1L397.7 352.4L398.2 347.0L398.7 351.0L399.2 348.2L399.7 353.9L400.2 349.3L400.7 343.1L401.2 355.3L401.7 350.4L402.2 351.8L402.7 351.5L403.2 348.3L403.7 350.0L404.2 349.0L404.7 352.2L405.2 351.3L405.7 341.6L406.2 356.1L406.7 355.4L407.2 349.7L407.7 350.8L408.2 355.2L408.7 351.5L409.2 352.5L409.7 348.5L410.2 349.4L410.7 347.5L411.2 351.8L411.7 352.8L412.2 352.0L412.7 347.4L413.2 350.6L413.7 354.3L414.2 350.7L414.7 351.3L415.2 350.8L415.7 348.8L416.2 353.5L416.7 352.7L417.2 351.2L417.7 351.0L418.2 349.7L418.7 352.8L419.2 351.7L419.7 355.6L420.2 349.2L420.7 352.5L421.2 349.7L421.7 350.3L422.2 357.4L422.7 347.4L423.2 352.0L423.7 350.8L424.2 354.9L424.7 348.3L425.2 351.9L425.7 349.6L426.2 349.3L426.7 351.4L427.2 354.8L427.7 353.4L428.2 349.0L428.7 351.9L429.2 353.9L429.7 350.8L430.2 351.9L430.7 350.4L431.2 344.2L431.7 352.1L432.2 345.2L432.7 347.3L433.2 352.3L433.7 345.0L434.2 349.6L434.7 349.5L435.2 353.5L435.7 348.2L436.2 351.3L436.7 352.3L437.2 354.9L437.7 351.4L438.2 348.3L438.7 347.0L439.2 340.6L439.7 350.4L440.2 358.6L440.7 355.0L441.2 346.9L441.7 349.0L442.2 350.5L442.7 352.0L443.2 355.4L443.7 359.5L444.3 353.1L444.8 353.2L445.3 349.2L445.8 356.0L446.3 349.3L446.8 354.8L447.3 356.0L447.8 356.0L448.3 355.2L448.8 351.0L449.3 348.0L449.8 349.9L450.3 350.0L450.8 346.5L451.3 351.6L451.8 348.7L452.3 350.8L452.8 357.4L453.3 351.5L453.8 354.5L454.3 355.2L454.8 351.8L455.3 356.5L455.8 350.3L456.3 351.0L456.8 357.7L457.3 349.1L457.8 350.9L458.3 350.7L458.8 355.9L459.3 351.5L459.8 351.8L460.3 348.5L460.8 349.3L461.3 348.5L461.8 355.8L462.3 343.1L462.8 345.2L463.3 349.9L463.8 347.8L464.3 361.0L464.8 354.2L465.3 348.4L465.8 353.6L466.3 349.6L466.8 344.4L467.3 351.9L467.8 347.3L468.3 348.6L468.8 350.3L469.3 346.9L469.8 350.2L470.3 349.4L470.8 341.6L471.3 348.2L471.8 342.3L472.3 351.5L472.8 341.7L473.3 346.0L473.8 345.8L474.3 344.8L474.8 344.0L475.3 344.4L475.8 344.3L476.3 334.5L476.8 341.1L477.3 349.4L477.8 343.2L478.3 340.6L478.8 336.1L479.3 335.9L479.8 337.8L480.3 339.6L480.8 334.0L481.3 333.4L481.8 329.6L482.3 334.5L482.8 334.9L483.3 340.2L483.8 333.3L484.3 334.7L484.8 331.0L485.3 331.3L485.8 332.8L486.3 329.6L486.8 329.9L487.3 329.2L487.8 322.9L488.3 322.7L488.8 320.5L489.3 314.6L489.8 315.5L490.3 315.6L490.8 310.7L491.3 310.3L491.8 310.2L492.3 308.5L492.8 306.1L493.3 313.4L493.8 304.5L494.3 296.3L494.8 299.6L495.3 294.3L495.8 295.9L496.3 297.8L496.8 288.2L497.3 286.5L497.8 290.9L498.3 284.1L498.8 281.5L499.3 277.2L499.8 270.9L500.3 278.1L500.8 263.2L501.3 264.2L501.8 263.9L502.3 256.2L502.8 262.8L503.3 256.1L503.8 250.6L504.3 248.5L504.8 244.1L505.3 230.7L505.8 234.8L506.3 233.0L506.8 228.6L507.3 226.4L507.8 221.7L508.3 220.4L508.8 216.5L509.3 208.6L509.8 203.5L510.3 206.8L510.8 198.5L511.3 197.7L511.8 193.5L512.3 196.6L512.8 184.6L513.3 179.6L513.8 176.6L514.3 168.5L514.8 167.5L515.3 162.6L515.8 165.3L516.3 176.0L516.8 174.3L517.3 183.8L517.8 179.9L518.3 190.0L518.8 198.0L519.3 187.8L519.8 198.1L520.3 198.5L520.8 200.4L521.3 204.0L521.8 209.9L522.3 208.3L522.8 222.1L523.3 227.4L523.8 220.7L524.3 229.8L524.8 229.6L525.3 230.9L525.8 236.7L526.3 239.1L526.9 244.1L527.4 245.0L527.9 250.3L528.4 254.6L528.9 249.4L529.4 250.8L529.9 254.5L530.4 263.2L530.9 260.2L531.4 263.9L531.9 269.0L532.4 269.1L532.9 272.3L533.4 268.3L533.9 271.7L534.4 277.6L534.9 282.3L535.4 276.9L535.9 281.0L536.4 284.8L536.9 279.7L537.4 282.9L537.9 285.2L538.4 287.2L538.9 281.3L539.4 291.4L539.9 293.1L540.4 291.5L540.9 287.4L541.4 293.5L541.9 292.2L542.4 294.1L542.9 296.7L543.4 292.2L543.9 298.7L544.4 297.3L544.9 295.8L545.4 303.0L545.9 297.0L546.4 296.7L546.9 299.4L547.4 306.3L547.9 298.0L548.4 305.5L548.9 299.9L549.4 305.9L549.9 305.3L550.4 301.6L550.9 309.8L551.4 304.5L551.9 307.3L552.4 309.3L552.9 308.9L553.4 311.6L553.9 315.2L554.4 318.3L554.9 313.7L555.4 319.3L555.9 315.2L556.4 320.9L556.9 312.2L557.4 316.9L557.9 317.8L558.4 324.9L558.9 323.1L559.4 324.2L559.9 326.0L560.4 321.3L560.9 321.9L561.4 329.8L561.9 315.7L562.4 323.0L562.9 318.7L563.4 319.4L563.9 315.5L564.4 318.6L564.9 317.0L565.4 320.8L565.9 309.9L566.4 315.0L566.9 308.7L567.4 312.8L567.9 311.5L568.4 312.1L568.9 307.0L569.4 302.9L569.9 301.4L570.4 304.1L570.9 305.3L571.4 293.5L571.9 295.3L572.4 299.1L572.9 297.7L573.4 303.0L573.9 297.1L574.4 292.6L574.9 289.1L575.4 295.8L575.9 296.0L576.4 289.4L576.9 288.5L577.4 288.6L577.9 284.3L578.4 282.6L578.9 284.2L579.4 274.7L579.9 276.3L580.4 278.2L580.9 273.0L581.4 277.2L581.9 263.3L582.4 262.1L582.9 261.9L583.4 255.0L583.9 257.0L584.4 253.3L584.9 246.6L585.4 249.5L585.9 250.1L586.4 238.2L586.9 245.1L587.4 240.4L587.9 231.9L588.4 229.0L588.9 233.9L589.4 231.0L589.9 225.7L590.4 222.1L590.9 228.7L591.4 219.6L591.9 221.6L592.4 219.1L592.9 219.6L593.4 216.2L593.9 216.7L594.4 222.0L594.9 216.2L595.4 221.7L595.9 231.7L596.4 222.8L596.9 225.5L597.4 224.5L597.9 224.8L598.4 229.8L598.9 228.3L599.4 231.7L599.9 228.5L600.4 232.9L600.9 232.2L601.4 235.6L601.9 239.1L602.4 236.6L602.9 237.1L603.4 242.3L603.9 241.8L604.4 234.5L604.9 247.0L605.4 247.8L605.9 253.6L606.4 249.7L606.9 254.6L607.4 255.6L607.9 262.9L608.4 260.9L608.9 267.2L609.4 268.4L610.0 269.7L610.5 270.7L611.0 270.1L611.5 278.1L612.0 272.6L612.5 274.0L613.0 280.1L613.5 274.0L614.0 281.3L614.5 281.6L615.0 281.7L615.5 284.7L616.0 281.7L616.5 287.1L617.0 288.7L617.5 282.0L618.0 285.9L618.5 288.3L619.0 288.6L619.5 292.5L620.0 291.6L620.5 294.2L621.0 292.4L621.5 297.6L622.0 295.7L622.5 291.6L623.0 300.8L623.5 304.1L624.0 298.5L624.5 299.0L625.0 299.7L625.5 296.0L626.0 299.9L626.5 301.7L627.0 310.8L627.5 298.9L628.0 305.2L628.5 301.3L629.0 302.4L629.5 301.6L630.0 305.7L630.5 308.1L631.0 307.9L631.5 303.8L632.0 310.5L632.5 314.3L633.0 308.8L633.5 315.3L634.0 316.5L634.5 315.7L635.0 313.5L635.5 315.8L636.0 318.6L636.5 310.0L637.0 315.4L637.5 321.1L638.0 322.7L638.5 320.4L639.0 321.7L639.5 324.6L640.0 324.7L640.5 323.2L641.0 318.1L641.5 323.6L642.0 320.2L642.5 319.9L643.0 322.7L643.5 322.2L644.0 322.3L644.5 322.7L645.0 326.5L645.5 335.3L646.0 332.3L646.5 323.7L647.0 336.3L647.5 326.2L648.0 334.5L648.5 332.5L649.0 327.5L649.5 324.8L650.0 327.3L650.5 328.9L651.0 334.7L651.5 331.8L652.0 327.0L652.5 333.2L653.0 329.2L653.5 336.1L654.0 334.1L654.5 328.2L655.0 333.2L655.5 343.8L656.0 336.3L656.5 340.4L657.0 331.9L657.5 337.0L658.0 340.4L658.5 331.0L659.0 336.6L659.5 341.7L660.0 337.1L660.5 330.9L661.0 330.0L661.5 342.7L662.0 335.7L662.5 331.3L663.0 332.5L663.5 335.8L664.0 336.2L664.5 332.9L665.0 330.9L665.5 339.7L666.0 335.2L666.5 335.8L667.0 336.5L667.5 335.1L668.0 331.9L668.5 338.1L669.0 336.6L669.5 336.2L670.0 332.6L670.5 338.8L671.0 344.6L671.5 336.0L672.0 333.4L672.5 339.8L673.0 335.5L673.5 333.1L674.0 331.7L674.5 344.2L675.0 340.5L675.5 334.9L676.0 339.6L676.5 334.2L677.0 340.1L677.5 340.7L678.0 336.9L678.5 338.9L679.0 342.5L679.5 336.4L680.0 333.0L680.5 344.1L681.0 342.9L681.5 343.3L682.0 339.8L682.5 338.4L683.0 338.3L683.5 340.7L684.0 341.1L684.5 342.6L685.0 335.4L685.5 347.3L686.0 339.3L686.5 340.5L687.0 339.3L687.5 340.8L688.0 340.0L688.5 338.9L689.0 339.5L689.5 337.9L690.0 339.0L690.5 339.1L691.0 335.7L691.5 338.7L692.0 343.6L692.6 344.0L693.1 336.8L693.6 343.9L694.1 343.4L694.6 333.8L695.1 340.7L695.6 336.4L696.1 340.5L696.6 336.9L697.1 340.3L697.6 343.1L698.1 341.6L698.6 341.0L699.1 343.1L699.6 354.1L700.1 339.6L700.6 337.4L701.1 335.7L701.6 342.9L702.1 339.6L702.6 341.5L703.1 338.0L703.6 341.2L704.1 342.0L704.6 349.6L705.1 341.5L705.6 342.0L706.1 340.2L706.6 338.7L707.1 340.4L707.6 346.9L708.1 334.2L708.6 338.1L709.1 341.5L709.6 333.3L710.1 339.8L710.6 343.2L711.1 339.9L711.6 343.0L712.1 347.1L712.6 338.9L713.1 340.6L713.6 340.1L714.1 342.7L714.6 338.3L715.1 343.7L715.6 340.1L716.1 341.8L716.6 346.8L717.1 343.6L717.6 346.5L718.1 339.8L718.6 336.3L719.1 339.8L719.6 336.8L720.1 340.0L720.6 349.9L721.1 342.9L721.6 343.9L722.1 349.9L722.6 343.7L723.1 341.7L723.6 343.6L724.1 341.8L724.6 343.1L725.1 333.6L725.6 343.2L726.1 341.9L726.6 340.4L727.1 342.1L727.6 337.6L728.1 338.2L728.6 344.8L729.1 338.4L729.6 338.1L730.1 338.0L730.6 345.4L731.1 340.4L731.6 338.0L732.1 342.0L732.6 344.5L733.1 339.5L733.6 347.7L734.1 345.6L734.6 341.6L735.1 343.8L735.6 337.7L736.1 337.8L736.6 341.5L737.1 337.9L737.6 345.8L738.1 339.1L738.6 343.9L739.1 338.7L739.6 343.7L740.1 341.4L740.6 339.1L741.1 344.6L741.6 340.1L742.1 337.1L742.6 344.3L743.1 341.8L743.6 335.8L744.1 341.2L744.6 344.5L745.1 339.2L745.6 340.3L746.1 340.9L746.6 341.6L747.1 341.2L747.6 347.0L748.1 342.4L748.6 340.7L749.1 341.8L749.6 343.7L750.1 340.0L750.6 340.9L751.1 343.3L751.6 336.8L752.1 340.9L752.6 344.2L753.1 339.5L753.6 338.9L754.1 339.4L754.6 342.2L755.1 351.3L755.6 339.6L756.1 341.2L756.6 340.8L757.1 344.4L757.6 345.6L758.1 339.6L758.6 341.9L759.1 336.3L759.6 346.6L760.1 342.5L760.6 342.3L761.1 346.1L761.6 339.1L762.1 341.8L762.6 343.0L763.1 339.7L763.6 340.3L764.1 345.9L764.6 344.2L765.1 337.7L765.6 340.2L766.1 348.0L766.6 354.5L767.1 338.4L767.6 337.1L768.1 344.5L768.6 343.1L769.1 349.4L769.6 340.4L770.1 351.0L770.6 347.3L771.1 343.6L771.6 345.7L772.1 343.9L772.6 335.2L773.1 344.5L773.6 343.2L774.1 341.8L774.6 344.3L775.1 349.8L775.7 343.2L776.2 342.9L776.7 348.3L777.2 347.8L777.7 343.7L778.2 344.2L778.7 339.8L779.2 338.3L779.7 341.2L780.2 349.6L780.7 339.3L781.2 344.0L781.7 343.4L782.2 337.0L782.7 348.2L783.2 342.2L783.7 341.2L784.2 347.9L784.7 346.4L785.2 346.0L785.7 345.3L786.2 344.9L786.7 338.7L787.2 345.6L787.7 347.6L788.2 344.7L788.7 341.8L789.2 348.1L789.7 343.6L790.2 344.9L790.7 337.8L791.2 344.4L791.7 342.3L792.2 340.5L792.7 349.4L793.2 349.4L793.7 348.0L794.2 342.0L794.7 345.2L795.2 341.5L795.7 344.2L796.2 345.1L796.7 341.4L797.2 341.3L797.7 346.8L798.2 345.5L798.7 344.9L799.2 342.8L799.7 349.3L800.2 345.3L800.7 345.0L801.2 350.2L801.7 345.9L802.2 345.1L802.7 337.1L803.2 346.9L803.7 343.6L804.2 345.1L804.7 344.2L805.2 343.6L805.7 350.2L806.2 347.5L806.7 347.8L807.2 341.4L807.7 351.3L808.2 343.0L808.7 347.1L809.2 346.4L809.7 344.8L810.2 344.8L810.7 350.8L811.2 343.0L811.7 346.4L812.2 347.0L812.7 351.1L813.2 348.0L813.7 342.4L814.2 346.2L814.7 346.7L815.2 348.2L815.7 346.4L816.2 350.2L816.7 345.7L817.2 343.1L817.7 351.5L818.2 341.6L818.7 345.0L819.2 346.9L819.7 352.4L820.2 347.8L820.7 346.7L821.2 347.0L821.7 353.5L822.2 337.6L822.7 341.8L823.2 344.4L823.7 344.2L824.2 345.1L824.7 343.5L825.2 349.7L825.7 344.7L826.2 352.5L826.7 344.6L827.2 344.5L827.7 351.6L828.2 343.2L828.7 345.2L829.2 356.5L829.7 348.4L830.2 352.5L830.7 352.7L831.2 353.2L831.7 350.7L832.2 349.8L832.7 344.2L833.2 350.2L833.7 352.3L834.2 354.4L834.7 352.2L835.2 346.5L835.7 347.0L836.2 345.7L836.7 343.1L837.2 348.8L837.7 349.7L838.2 349.6L838.7 347.8L839.2 350.7L839.7 351.0L840.2 347.6L840.7 346.5L841.2 347.7L841.7 347.3L842.2 348.9L842.7 347.5L843.2 351.7L843.7 355.5L844.2 345.6L844.7 348.8L845.2 345.5L845.7 342.0L846.2 348.5L846.7 348.0L847.2 353.7L847.7 350.5L848.2 348.0L848.7 355.2L849.2 355.2L849.7 342.6L850.2 350.2L850.7 348.4L851.2 356.3L851.7 350.3L852.2 347.6L852.7 351.6L853.2 349.7L853.7 352.8L854.2 350.3L854.7 345.0L855.2 357.3L855.7 357.5L856.2 348.6L856.7 343.9L857.2 347.7L857.7 349.6L858.3 354.7L858.8 350.4L859.3 352.7L859.8 356.5L860.3 353.2L860.8 353.9L861.3 354.8L861.8 351.4L862.3 351.7L862.8 351.2L863.3 349.1L863.8 347.1L864.3 345.1L864.8 346.2L865.3 354.4L865.8 345.2L866.3 349.5L866.8 349.6L867.3 347.7L867.8 352.2L868.3 349.0L868.8 354.1L869.3 348.8L869.8 345.0L870.3 350.7L870.8 353.4L871.3 347.6L871.8 347.4L872.3 350.6L872.8 352.2L873.3 348.9L873.8 348.7L874.3 350.9L874.8 345.6L875.3 348.0L875.8 346.6L876.3 353.6L876.8 354.2L877.3 349.3L877.8 351.4L878.3 347.8L878.8 354.1L879.3 350.5L879.8 351.5L880.3 352.5L880.8 346.3L881.3 352.9L881.8 351.9L882.3 351.5L882.8 351.8L883.3 349.7L883.8 348.8L884.3 357.5L884.8 347.1L885.3 349.7L885.8 357.9L886.3 349.6L886.8 356.1L887.3 347.8L887.8 350.0L888.3 350.2L888.8 352.5L889.3 347.6L889.8 350.3L890.3 347.9L890.8 354.6L891.3 354.0L891.8 348.9L892.3 358.4L892.8 356.0L893.3 348.7L893.8 353.0L894.3 350.0L894.8 354.4L895.3 354.4L895.8 352.7L896.3 347.5L896.8 347.0L897.3 353.8L897.8 354.9L898.3 348.2L898.8 352.6L899.3 353.5L899.8 354.8L900.3 352.2L900.8 346.0L901.3 347.9L901.8 352.6L902.3 354.6L902.8 351.0L903.3 349.2L903.8 351.4L904.3 347.2L904.8 346.1L905.3 353.0L905.8 351.2L906.3 351.1L906.8 355.8L907.3 353.0L907.8 355.1L908.3 353.5L908.8 355.9L909.3 355.4L909.8 347.9L910.3 347.4L910.8 347.2L911.3 348.1L911.8 350.2L912.3 344.0L912.8 353.7L913.3 352.4L913.8 350.1L914.3 350.5L914.8 350.8L915.3 350.3L915.8 347.3L916.3 353.0L916.8 353.1L917.3 348.9L917.8 350.8L918.3 354.4L918.8 348.0L919.3 350.2L919.8 352.1L920.3 349.8L920.8 350.3L921.3 354.5L921.8 351.2L922.3 357.7L922.8 355.3L923.3 345.3L923.8 356.2L924.3 352.5L924.8 345.5L925.3 343.0L925.8 350.2L926.3 352.6L926.8 351.9L927.3 348.3L927.8 354.4L928.3 355.8L928.8 359.6L929.3 352.3L929.8 356.3L930.3 345.7L930.8 352.7L931.3 347.6L931.8 351.4L932.3 352.0L932.8 350.8L933.3 354.7L933.8 358.9L934.3 350.2L934.8 349.5L935.3 346.8L935.8 350.5L936.3 353.9L936.8 343.3" fill="none" stroke="#e84a1e" stroke-width="1" shape-rendering="crispEdges"/><path d="M311.6 356.9L312.1 353.3L312.6 346.9L313.1 350.6L313.6 353.3L314.1 354.7L314.6 350.7L315.1 347.7L315.6 346.7L316.1 345.8L316.6 347.3L317.1 347.3L317.6 344.6L318.1 347.7L318.6 346.2L319.1 346.0L319.6 349.9L320.1 354.5L320.6 348.3L321.1 345.4L321.6 342.0L322.1 354.6L322.6 344.4L323.1 347.3L323.6 349.8L324.1 352.2L324.6 350.6L325.1 355.8L325.6 351.9L326.1 350.3L326.6 352.3L327.1 347.5L327.6 347.8L328.1 350.5L328.6 347.7L329.1 353.4L329.6 348.8L330.1 352.5L330.6 351.0L331.1 360.6L331.6 349.6L332.1 355.8L332.6 346.0L333.1 351.2L333.6 352.3L334.1 355.0L334.6 353.4L335.1 351.3L335.6 350.6L336.1 346.3L336.6 353.1L337.1 353.5L337.6 353.0L338.1 352.9L338.6 350.0L339.1 354.9L339.6 356.5L340.1 354.9L340.6 354.6L341.1 352.5L341.6 348.2L342.1 369.9L342.6 348.7L343.1 350.2L343.6 346.5L344.1 349.3L344.6 352.9L345.1 345.9L345.6 346.9L346.1 350.9L346.6 346.2L347.1 349.2L347.6 353.3L348.1 352.7L348.6 353.8L349.1 351.7L349.6 347.3L350.1 358.8L350.6 352.1L351.1 351.5L351.6 345.1L352.1 351.0L352.6 352.9L353.1 354.5L353.6 354.0L354.1 354.8L354.6 352.2L355.1 345.6L355.6 349.3L356.1 346.9L356.6 352.8L357.1 353.5L357.6 350.6L358.1 358.8L358.6 353.3L359.1 352.6L359.6 350.7L360.1 356.7L360.6 352.3L361.2 352.3L361.7 356.8L362.2 350.3L362.7 346.0L363.2 351.3L363.7 356.2L364.2 362.7L364.7 350.5L365.2 358.5L365.7 348.2L366.2 351.3L366.7 350.4L367.2 351.0L367.7 351.7L368.2 346.1L368.7 362.4L369.2 345.7L369.7 349.8L370.2 349.8L370.7 346.0L371.2 357.4L371.7 350.8L372.2 353.8L372.7 348.9L373.2 352.1L373.7 351.2L374.2 348.7L374.7 351.2L375.2 352.4L375.7 347.3L376.2 356.7L376.7 354.1L377.2 356.4L377.7 343.7L378.2 352.8L378.7 349.7L379.2 351.4L379.7 346.9L380.2 355.1L380.7 346.1L381.2 352.1L381.7 358.1L382.2 351.2L382.7 345.9L383.2 348.4L383.7 352.1L384.2 348.5L384.7 350.7L385.2 345.3L385.7 350.0L386.2 355.0L386.7 346.1L387.2 358.7L387.7 348.8L388.2 354.9L388.7 348.2L389.2 353.4L389.7 347.8L390.2 354.4L390.7 348.7L391.2 354.7L391.7 351.1L392.2 347.7L392.7 352.0L393.2 353.8L393.7 354.8L394.2 352.4L394.7 358.0L395.2 351.0L395.7 349.5L396.2 353.9L396.7 354.1L397.2 349.3L397.7 350.0L398.2 352.0L398.7 348.2L399.2 351.0L399.7 349.8L400.2 350.3L400.7 344.8L401.2 353.6L401.7 344.4L402.2 353.0L402.7 350.1L403.2 355.6L403.7 352.7L404.2 359.1L404.7 346.1L405.2 355.6L405.7 347.6L406.2 348.4L406.7 345.0L407.2 356.0L407.7 350.6L408.2 352.8L408.7 351.7L409.2 350.7L409.7 349.8L410.2 344.7L410.7 346.3L411.2 352.8L411.7 353.0L412.2 353.1L412.7 351.7L413.2 353.6L413.7 344.1L414.2 346.9L414.7 351.3L415.2 356.1L415.7 349.6L416.2 349.9L416.7 350.0L417.2 349.0L417.7 352.4L418.2 352.0L418.7 350.5L419.2 355.9L419.7 350.8L420.2 352.5L420.7 351.4L421.2 350.1L421.7 352.9L422.2 356.5L422.7 357.3L423.2 351.5L423.7 348.8L424.2 348.5L424.7 345.0L425.2 356.3L425.7 344.8L426.2 351.5L426.7 353.2L427.2 346.5L427.7 345.8L428.2 352.8L428.7 350.5L429.2 350.9L429.7 349.4L430.2 355.6L430.7 349.4L431.2 351.7L431.7 355.5L432.2 354.7L432.7 350.5L433.2 349.0L433.7 354.2L434.2 354.0L434.7 354.3L435.2 346.7L435.7 351.1L436.2 356.8L436.7 346.1L437.2 356.5L437.7 353.2L438.2 351.1L438.7 347.3L439.2 345.6L439.7 354.1L440.2 352.9L440.7 348.5L441.2 358.3L441.7 347.4L442.2 347.5L442.7 358.4L443.2 353.0L443.7 353.1L444.3 350.9L444.8 344.8L445.3 351.2L445.8 351.9L446.3 349.6L446.8 350.0L447.3 352.9L447.8 352.3L448.3 350.4L448.8 348.8L449.3 357.0L449.8 353.1L450.3 351.8L450.8 343.2L451.3 350.8L451.8 351.2L452.3 348.8L452.8 347.3L453.3 344.9L453.8 352.4L454.3 351.5L454.8 346.5L455.3 352.2L455.8 348.8L456.3 349.7L456.8 348.1L457.3 350.1L457.8 352.2L458.3 351.8L458.8 352.6L459.3 351.4L459.8 349.5L460.3 354.7L460.8 354.9L461.3 346.7L461.8 348.2L462.3 350.3L462.8 349.7L463.3 345.1L463.8 351.4L464.3 346.9L464.8 347.8L465.3 357.9L465.8 349.7L466.3 347.8L466.8 350.1L467.3 348.6L467.8 348.2L468.3 349.7L468.8 352.4L469.3 344.3L469.8 349.7L470.3 346.1L470.8 348.9L471.3 349.8L471.8 341.1L472.3 349.1L472.8 344.4L473.3 341.9L473.8 342.6L474.3 343.9L474.8 347.0L475.3 337.6L475.8 342.3L476.3 344.4L476.8 343.3L477.3 342.1L477.8 341.8L478.3 344.8L478.8 344.7L479.3 335.9L479.8 338.1L480.3 337.3L480.8 342.3L481.3 341.7L481.8 337.7L482.3 334.1L482.8 336.3L483.3 335.0L483.8 339.1L484.3 334.7L484.8 330.7L485.3 333.9L485.8 331.0L486.3 325.0L486.8 324.2L487.3 328.0L487.8 324.4L488.3 321.5L488.8 329.2L489.3 320.7L489.8 315.8L490.3 309.0L490.8 317.7L491.3 313.2L491.8 309.6L492.3 303.4L492.8 310.1L493.3 297.6L493.8 305.1L494.3 303.1L494.8 302.2L495.3 302.6L495.8 295.6L496.3 294.3L496.8 295.5L497.3 283.9L497.8 289.1L498.3 283.8L498.8 279.4L499.3 275.4L499.8 274.2L500.3 263.5L500.8 272.8L501.3 266.6L501.8 267.2L502.3 258.6L502.8 262.4L503.3 252.9L503.8 249.3L504.3 246.4L504.8 244.4L505.3 238.5L505.8 231.5L506.3 234.5L506.8 231.9L507.3 229.1L507.8 215.1L508.3 213.1L508.8 213.4L509.3 211.4L509.8 210.3L510.3 202.1L510.8 201.7L511.3 188.7L511.8 198.2L512.3 190.2L512.8 190.2L513.3 179.5L513.8 179.6L514.3 184.2L514.8 174.4L515.3 166.4L515.8 170.2L516.3 176.4L516.8 179.1L517.3 181.5L517.8 184.9L518.3 191.7L518.8 189.3L519.3 187.9L519.8 199.9L520.3 201.2L520.8 205.1L521.3 207.5L521.8 211.5L522.3 214.1L522.8 223.5L523.3 222.6L523.8 218.8L524.3 225.7L524.8 230.6L525.3 237.9L525.8 239.0L526.3 238.7L526.9 250.3L527.4 243.8L527.9 251.1L528.4 255.5L528.9 250.2L529.4 257.5L529.9 263.3L530.4 267.7L530.9 264.2L531.4 270.5L531.9 266.8L532.4 263.1L532.9 271.5L533.4 274.8L533.9 280.0L534.4 280.0L534.9 280.3L535.4 281.4L535.9 274.8L536.4 284.6L536.9 286.6L537.4 285.3L537.9 282.7L538.4 285.7L538.9 293.2L539.4 284.0L539.9 286.7L540.4 293.0L540.9 292.3L541.4 293.8L541.9 290.5L542.4 290.4L542.9 293.3L543.4 292.7L543.9 299.9L544.4 296.3L544.9 293.4L545.4 299.5L545.9 305.5L546.4 299.8L546.9 302.5L547.4 300.5L547.9 305.0L548.4 302.2L548.9 305.0L549.4 300.3L549.9 306.6L550.4 308.3L550.9 306.1L551.4 311.1L551.9 308.6L552.4 321.2L552.9 312.0L553.4 316.2L553.9 318.7L554.4 310.3L554.9 314.9L555.4 321.4L555.9 321.5L556.4 310.1L556.9 317.3L557.4 316.9L557.9 320.6L558.4 328.2L558.9 325.0L559.4 321.3L559.9 321.9L560.4 323.2L560.9 321.5L561.4 316.7L561.9 325.1L562.4 322.6L562.9 331.4L563.4 321.3L563.9 314.7L564.4 313.7L564.9 323.1L565.4 316.7L565.9 319.5L566.4 314.3L566.9 313.1L567.4 315.4L567.9 307.8L568.4 310.3L568.9 305.0L569.4 301.1L569.9 312.3L570.4 302.4L570.9 305.9L571.4 301.4L571.9 305.9L572.4 296.8L572.9 304.3L573.4 301.6L573.9 296.0L574.4 293.8L574.9 288.7L575.4 286.4L575.9 286.8L576.4 288.9L576.9 289.8L577.4 282.9L577.9 293.7L578.4 289.3L578.9 280.3L579.4 277.8L579.9 273.4L580.4 279.1L580.9 266.2L581.4 270.8L581.9 266.1L582.4 262.0L582.9 259.5L583.4 261.0L583.9 253.8L584.4 257.8L584.9 249.5L585.4 244.0L585.9 241.2L586.4 242.0L586.9 247.2L587.4 230.7L587.9 234.1L588.4 231.0L588.9 237.8L589.4 230.0L589.9 222.8L590.4 229.4L590.9 220.2L591.4 228.7L591.9 220.7L592.4 221.5L592.9 220.0L593.4 221.8L593.9 221.2L594.4 223.2L594.9 228.9L595.4 222.6L595.9 222.8L596.4 219.8L596.9 229.1L597.4 229.2L597.9 227.1L598.4 228.2L598.9 233.6L599.4 227.3L599.9 223.5L600.4 230.7L600.9 233.8L601.4 232.2L601.9 233.1L602.4 234.7L602.9 237.4L603.4 245.4L603.9 249.7L604.4 249.5L604.9 248.6L605.4 249.6L605.9 254.5L606.4 254.4L606.9 262.2L607.4 263.9L607.9 256.0L608.4 272.3L608.9 267.8L609.4 271.1L610.0 274.2L610.5 270.0L611.0 272.3L611.5 270.3L612.0 276.5L612.5 274.5L613.0 284.1L613.5 276.1L614.0 275.9L614.5 278.4L615.0 283.8L615.5 281.7L616.0 287.1L616.5 289.1L617.0 287.0L617.5 285.3L618.0 282.1L618.5 291.0L619.0 290.4L619.5 290.3L620.0 295.3L620.5 295.8L621.0 286.8L621.5 288.9L622.0 290.5L622.5 297.9L623.0 294.7L623.5 293.4L624.0 300.2L624.5 296.6L625.0 301.5L625.5 297.3L626.0 300.5L626.5 302.7L627.0 304.1L627.5 310.9L628.0 305.6L628.5 308.1L629.0 303.9L629.5 307.1L630.0 313.6L630.5 305.7L631.0 310.7L631.5 309.9L632.0 308.9L632.5 315.3L633.0 312.1L633.5 315.7L634.0 308.3L634.5 315.2L635.0 319.4L635.5 308.1L636.0 315.7L636.5 316.8L637.0 312.9L637.5 324.3L638.0 320.7L638.5 320.1L639.0 325.0L639.5 318.1L640.0 319.9L640.5 326.6L641.0 324.2L641.5 326.2L642.0 321.0L642.5 326.0L643.0 323.9L643.5 322.9L644.0 324.5L644.5 323.5L645.0 326.2L645.5 334.0L646.0 324.1L646.5 330.2L647.0 326.5L647.5 331.7L648.0 331.8L648.5 328.5L649.0 329.4L649.5 333.5L650.0 325.9L650.5 327.9L651.0 334.3L651.5 324.4L652.0 330.9L652.5 332.0L653.0 329.8L653.5 330.8L654.0 332.0L654.5 327.7L655.0 328.9L655.5 339.1L656.0 332.8L656.5 334.1L657.0 337.9L657.5 332.7L658.0 331.4L658.5 342.4L659.0 332.4L659.5 336.8L660.0 335.4L660.5 331.1L661.0 336.0L661.5 334.7L662.0 335.9L662.5 333.9L663.0 331.2L663.5 339.2L664.0 334.6L664.5 340.1L665.0 336.0L665.5 340.1L666.0 336.1L666.5 340.2L667.0 336.9L667.5 333.3L668.0 330.2L668.5 345.3L669.0 330.8L669.5 335.8L670.0 343.8L670.5 335.8L671.0 334.4L671.5 341.2L672.0 341.3L672.5 338.7L673.0 331.6L673.5 333.7L674.0 335.4L674.5 343.7L675.0 334.0L675.5 334.9L676.0 339.8L676.5 334.0L677.0 333.2L677.5 339.1L678.0 337.5L678.5 337.5L679.0 338.8L679.5 341.2L680.0 340.2L680.5 337.3L681.0 342.7L681.5 340.9L682.0 338.2L682.5 334.7L683.0 341.9L683.5 343.2L684.0 340.4L684.5 340.1L685.0 337.9L685.5 342.0L686.0 343.9L686.5 347.9L687.0 335.6L687.5 336.5L688.0 336.5L688.5 343.4L689.0 335.2L689.5 342.0L690.0 338.0L690.5 346.4L691.0 334.7L691.5 336.6L692.0 341.8L692.6 342.8L693.1 335.9L693.6 334.5L694.1 338.7L694.6 338.4L695.1 342.3L695.6 345.9L696.1 340.0L696.6 340.7L697.1 342.6L697.6 337.7L698.1 332.8L698.6 341.0L699.1 338.3L699.6 338.6L700.1 342.2L700.6 339.5L701.1 345.3L701.6 343.5L702.1 342.0L702.6 336.2L703.1 339.9L703.6 341.7L704.1 348.2L704.6 339.8L705.1 345.0L705.6 339.2L706.1 342.5L706.6 341.9L707.1 342.7L707.6 348.4L708.1 338.3L708.6 346.1L709.1 346.7L709.6 338.5L710.1 339.8L710.6 343.7L711.1 341.8L711.6 339.7L712.1 341.4L712.6 343.6L713.1 337.2L713.6 342.5L714.1 347.1L714.6 336.5L715.1 341.6L715.6 335.7L716.1 339.7L716.6 344.3L717.1 344.3L717.6 348.1L718.1 343.0L718.6 341.0L719.1 340.6L719.6 337.5L720.1 345.0L720.6 348.8L721.1 342.5L721.6 339.7L722.1 341.2L722.6 340.8L723.1 342.4L723.6 349.2L724.1 344.2L724.6 340.3L725.1 344.8L725.6 341.9L726.1 335.4L726.6 345.7L727.1 341.5L727.6 341.8L728.1 346.2L728.6 344.0L729.1 335.4L729.6 341.7L730.1 343.9L730.6 341.0L731.1 341.8L731.6 346.3L732.1 345.5L732.6 338.9L733.1 342.4L733.6 341.5L734.1 339.9L734.6 344.5L735.1 340.9L735.6 344.0L736.1 345.9L736.6 339.2L737.1 342.2L737.6 337.6L738.1 341.3L738.6 341.3L739.1 342.8L739.6 338.9L740.1 343.6L740.6 342.8L741.1 339.2L741.6 341.5L742.1 339.6L742.6 340.8L743.1 339.9L743.6 342.4L744.1 341.9L744.6 346.1L745.1 344.5L745.6 343.0L746.1 336.3L746.6 344.0L747.1 343.2L747.6 345.0L748.1 342.6L748.6 342.1L749.1 338.8L749.6 340.7L750.1 341.7L750.6 345.2L751.1 343.6L751.6 336.5L752.1 345.3L752.6 349.4L753.1 341.8L753.6 341.5L754.1 344.8L754.6 335.8L755.1 342.2L755.6 344.5L756.1 338.3L756.6 342.7L757.1 346.1L757.6 340.0L758.1 342.8L758.6 339.8L759.1 349.2L759.6 339.5L760.1 340.6L760.6 338.5L761.1 343.3L761.6 345.4L762.1 342.3L762.6 342.9L763.1 339.4L763.6 341.3L764.1 340.6L764.6 345.0L765.1 346.1L765.6 340.0L766.1 340.3L766.6 344.9L767.1 337.2L767.6 345.4L768.1 344.4L768.6 345.3L769.1 345.8L769.6 344.1L770.1 344.8L770.6 341.0L771.1 346.0L771.6 348.6L772.1 342.1L772.6 349.6L773.1 347.6L773.6 345.7L774.1 344.7L774.6 348.0L775.1 345.8L775.7 339.6L776.2 346.7L776.7 349.1L777.2 347.7L777.7 345.0L778.2 346.1L778.7 342.8L779.2 345.8L779.7 346.2L780.2 346.0L780.7 345.9L781.2 343.2L781.7 340.5L782.2 343.6L782.7 350.9L783.2 345.0L783.7 344.3L784.2 339.1L784.7 340.9L785.2 342.7L785.7 345.0L786.2 347.6L786.7 348.6L787.2 339.5L787.7 339.6L788.2 340.2L788.7 350.3L789.2 345.3L789.7 346.2L790.2 346.7L790.7 340.4L791.2 344.9L791.7 344.0L792.2 351.2L792.7 344.1L793.2 349.6L793.7 345.2L794.2 345.8L794.7 346.1L795.2 347.3L795.7 347.4L796.2 348.5L796.7 343.8L797.2 337.2L797.7 348.0L798.2 342.1L798.7 349.6L799.2 347.5L799.7 348.2L800.2 342.1L800.7 339.1L801.2 350.1L801.7 347.2L802.2 349.9L802.7 339.3L803.2 355.9L803.7 345.2L804.2 346.6L804.7 345.8L805.2 342.2L805.7 348.0L806.2 342.9L806.7 348.5L807.2 345.8L807.7 336.9L808.2 348.1L808.7 350.2L809.2 343.7L809.7 343.5L810.2 346.6L810.7 348.0L811.2 351.2L811.7 344.9L812.2 343.5L812.7 354.1L813.2 343.9L813.7 346.6L814.2 347.4L814.7 345.2L815.2 350.0L815.7 346.6L816.2 341.2L816.7 346.8L817.2 352.4L817.7 346.9L818.2 338.2L818.7 339.4L819.2 352.8L819.7 339.5L820.2 349.1L820.7 341.0L821.2 352.6L821.7 344.8L822.2 339.6L822.7 346.7L823.2 351.8L823.7 343.1L824.2 353.9L824.7 351.4L825.2 344.7L825.7 345.0L826.2 346.8L826.7 355.5L827.2 345.6L827.7 348.5L828.2 344.8L828.7 352.6L829.2 354.1L829.7 349.4L830.2 350.9L830.7 346.2L831.2 352.8L831.7 356.1L832.2 344.7L832.7 345.1L833.2 345.2L833.7 351.9L834.2 346.4L834.7 343.2L835.2 345.4L835.7 354.6L836.2 346.7L836.7 352.8L837.2 354.9L837.7 345.2L838.2 345.1L838.7 350.9L839.2 350.8L839.7 349.8L840.2 342.5L840.7 352.4L841.2 349.1L841.7 359.2L842.2 349.9L842.7 352.2L843.2 343.3L843.7 346.4L844.2 345.3L844.7 346.3L845.2 344.5L845.7 351.4L846.2 344.2L846.7 352.7L847.2 354.3L847.7 346.3L848.2 349.1L848.7 348.7L849.2 350.5L849.7 344.3L850.2 348.5L850.7 349.2L851.2 347.9L851.7 349.8L852.2 350.9L852.7 349.4L853.2 352.5L853.7 351.7L854.2 355.4L854.7 346.5L855.2 351.0L855.7 353.6L856.2 349.6L856.7 348.8L857.2 339.4L857.7 340.4L858.3 345.5L858.8 345.7L859.3 356.1L859.8 343.8L860.3 346.6L860.8 346.9L861.3 350.2L861.8 349.7L862.3 339.2L862.8 350.8L863.3 344.6L863.8 348.6L864.3 356.7L864.8 347.8L865.3 347.1L865.8 353.1L866.3 346.4L866.8 348.5L867.3 345.4L867.8 354.3L868.3 347.4L868.8 346.0L869.3 353.4L869.8 350.9L870.3 347.8L870.8 352.7L871.3 347.0L871.8 356.0L872.3 346.2L872.8 352.3L873.3 352.7L873.8 347.4L874.3 351.5L874.8 349.6L875.3 349.7L875.8 354.5L876.3 349.1L876.8 349.1L877.3 348.2L877.8 343.8L878.3 354.0L878.8 345.1L879.3 348.8L879.8 350.9L880.3 352.5L880.8 349.5L881.3 356.1L881.8 344.1L882.3 349.0L882.8 347.5L883.3 344.8L883.8 350.6L884.3 350.9L884.8 348.2L885.3 342.5L885.8 356.9L886.3 351.3L886.8 353.5L887.3 346.3L887.8 356.4L888.3 358.0L888.8 345.1L889.3 347.6L889.8 348.9L890.3 351.9L890.8 341.3L891.3 355.0L891.8 346.6L892.3 345.3L892.8 350.7L893.3 354.0L893.8 348.3L894.3 352.5L894.8 350.8L895.3 347.4L895.8 346.6L896.3 352.9L896.8 348.2L897.3 350.8L897.8 349.3L898.3 352.2L898.8 354.7L899.3 347.3L899.8 348.1L900.3 351.9L900.8 351.5L901.3 348.4L901.8 349.6L902.3 347.3L902.8 361.6L903.3 350.2L903.8 349.4L904.3 347.4L904.8 351.1L905.3 348.3L905.8 347.1L906.3 352.2L906.8 351.9L907.3 348.4L907.8 353.0L908.3 353.1L908.8 354.7L909.3 358.3L909.8 347.1L910.3 355.7L910.8 347.4L911.3 348.1L911.8 358.7L912.3 349.0L912.8 354.8L913.3 344.6L913.8 355.9L914.3 351.7L914.8 353.1L915.3 346.1L915.8 352.5L916.3 347.2L916.8 352.4L917.3 348.3L917.8 351.6L918.3 351.3L918.8 349.6L919.3 349.5L919.8 346.6L920.3 347.4L920.8 348.1L921.3 350.3L921.8 354.7L922.3 346.4L922.8 352.7L923.3 360.8L923.8 346.5L924.3 352.9L924.8 345.5L925.3 351.6L925.8 351.4L926.3 346.7L926.8 350.8L927.3 356.7L927.8 348.6L928.3 356.7L928.8 355.3L929.3 347.7L929.8 356.1L930.3 351.7L930.8 348.4L931.3 355.2L931.8 353.8L932.3 349.2L932.8 352.5L933.3 349.1L933.8 348.7L934.3 353.4L934.8 351.0L935.3 352.3L935.8 348.1L936.3 346.1L936.8 355.5" fill="none" stroke="#e00a0a" stroke-width="1" shape-rendering="crispEdges"/><line x1="297" y1="136.5" x2="318" y2="136.5" stroke="#1a1a7e" stroke-width="1.5"/><line x1="297" y1="160.5" x2="318" y2="160.5" stroke="#1e1eab" stroke-width="1.5"/><line x1="297" y1="184.5" x2="318" y2="184.5" stroke="#3a50c8" stroke-width="1.5"/><line x1="297" y1="208.5" x2="318" y2="208.5" stroke="#2f62e6" stroke-width="1.5"/><line x1="297" y1="232.5" x2="318" y2="232.5" stroke="#1a8a8c" stroke-width="1.5"/><line x1="297" y1="256.5" x2="318" y2="256.5" stroke="#39a03a" stroke-width="1.5"/><line x1="297" y1="280.5" x2="318" y2="280.5" stroke="#8ec43a" stroke-width="1.5"/><line x1="297" y1="304.5" x2="318" y2="304.5" stroke="#c8d21e" stroke-width="1.5"/><line x1="297" y1="328.5" x2="318" y2="328.5" stroke="#f0c81c" stroke-width="1.5"/><line x1="297" y1="352.5" x2="318" y2="352.5" stroke="#f2a31e" stroke-width="1.5"/><line x1="297" y1="376.5" x2="318" y2="376.5" stroke="#f27c24" stroke-width="1.5"/></g><line x1="286.5" y1="114" x2="286.5" y2="378.5" stroke="#8c8c8c" stroke-width="1"/><line x1="286" y1="378.5" x2="963" y2="378.5" stroke="#8c8c8c" stroke-width="1"/></svg>
<div class="t" style="left:326px;top:131.36px;font-size:12px;color:#939393;font-weight:normal;">rgb</div>
<div class="t" style="left:326px;top:155.36px;font-size:12px;color:#939393;font-weight:normal;">rgb</div>
<div class="t" style="left:326px;top:179.36px;font-size:12px;color:#939393;font-weight:normal;">rgb</div>
<div class="t" style="left:326px;top:203.36px;font-size:12px;color:#939393;font-weight:normal;">rgb</div>
<div class="t" style="left:326px;top:227.36px;font-size:12px;color:#939393;font-weight:normal;">rb</div>
<div class="t" style="left:326px;top:251.36px;font-size:12px;color:#939393;font-weight:normal;">rb</div>
<div class="t" style="left:326px;top:275.36px;font-size:12px;color:#939393;font-weight:normal;">rb</div>
<div class="t" style="left:326px;top:299.36px;font-size:12px;color:#939393;font-weight:normal;">rb</div>
<div class="t" style="left:326px;top:323.36px;font-size:12px;color:#939393;font-weight:normal;">rg</div>
<div class="t" style="left:326px;top:347.36px;font-size:12px;color:#939393;font-weight:normal;">rg</div>
<div class="r" style="left:320px;top:366.5px;width:40px;height:11.5px;overflow:hidden"><div class="t" style="left:6px;top:3.86px;font-size:12px;color:#939393;font-weight:normal;">gb</div></div>
<div class="t" style="left:242px;top:361.76px;width:40px;text-align:right;font-size:12px;color:#939393;">-1</div>
<div class="t" style="left:242px;top:325.16px;width:40px;text-align:right;font-size:12px;color:#939393;">0</div>
<div class="t" style="left:242px;top:288.56px;width:40px;text-align:right;font-size:12px;color:#939393;">1</div>
<div class="t" style="left:242px;top:251.96px;width:40px;text-align:right;font-size:12px;color:#939393;">2</div>
<div class="t" style="left:242px;top:215.36px;width:40px;text-align:right;font-size:12px;color:#939393;">3</div>
<div class="t" style="left:242px;top:178.76px;width:40px;text-align:right;font-size:12px;color:#939393;">4</div>
<div class="t" style="left:242px;top:142.16px;width:40px;text-align:right;font-size:12px;color:#939393;">5</div>
<div class="t" style="left:244.265px;top:381.86px;width:200px;text-align:center;font-size:12px;color:#939393;font-weight:60;letter-spacing:-0.8px;">350</div>
<div class="t" style="left:318.4px;top:381.86px;width:200px;text-align:center;font-size:12px;color:#939393;font-weight:60;letter-spacing:-0.8px;">400</div>
<div class="t" style="left:392.53499999999997px;top:381.86px;width:200px;text-align:center;font-size:12px;color:#939393;font-weight:60;letter-spacing:-0.8px;">450</div>
<div class="t" style="left:466.66999999999996px;top:381.86px;width:200px;text-align:center;font-size:12px;color:#939393;font-weight:60;letter-spacing:-0.8px;">500</div>
<div class="t" style="left:540.805px;top:381.86px;width:200px;text-align:center;font-size:12px;color:#939393;font-weight:60;letter-spacing:-0.8px;">550</div>
<div class="t" style="left:614.9399999999999px;top:381.86px;width:200px;text-align:center;font-size:12px;color:#939393;font-weight:60;letter-spacing:-0.8px;">600</div>
<div class="t" style="left:689.0749999999999px;top:381.86px;width:200px;text-align:center;font-size:12px;color:#939393;font-weight:60;letter-spacing:-0.8px;">650</div>
<div class="t" style="left:763.2099999999999px;top:381.86px;width:200px;text-align:center;font-size:12px;color:#939393;font-weight:60;letter-spacing:-0.8px;">700</div>
<div class="t" style="left:837.3449999999999px;top:381.86px;width:200px;text-align:center;font-size:12px;color:#939393;font-weight:60;letter-spacing:-0.8px;">750</div>
<div class="t" style="left:521.5px;top:403.86px;width:200px;text-align:center;font-size:12px;color:#939393;font-weight:200;">Wavelength [nm]</div>
<div class="t" style="left:252.5px;top:246.7px;font-size:12px;color:#939393;transform:translate(-50%,-50%) rotate(-90deg);">Counts</div>
<div class="r" style="left:253px;top:432px;width:497px;height:286px;background:#fff;"></div>
<svg class="r" style="left:0;top:0" width="1282" height="752"><rect x="297" y="447" width="432" height="236" fill="#f0f0f0"/><rect x="297" y="624" width="108" height="59" fill="#3a77b0"/><rect x="405" y="565" width="108" height="59" fill="#3a77b0"/><rect x="513" y="506" width="108" height="59" fill="#3a77b0"/><rect x="621" y="447" width="108" height="59" fill="#3a77b0"/><line x1="276.5" y1="432" x2="276.5" y2="698.5" stroke="#8c8c8c"/><line x1="276" y1="698.5" x2="750" y2="698.5" stroke="#8c8c8c"/><line x1="277" y1="476.5" x2="283" y2="476.5" stroke="#8c8c8c"/><line x1="350.5" y1="692" x2="350.5" y2="698" stroke="#8c8c8c"/><line x1="277" y1="535.5" x2="283" y2="535.5" stroke="#8c8c8c"/><line x1="458.5" y1="692" x2="458.5" y2="698" stroke="#8c8c8c"/><line x1="277" y1="594.5" x2="283" y2="594.5" stroke="#8c8c8c"/><line x1="566.5" y1="692" x2="566.5" y2="698" stroke="#8c8c8c"/><line x1="277" y1="653.5" x2="283" y2="653.5" stroke="#8c8c8c"/><line x1="674.5" y1="692" x2="674.5" y2="698" stroke="#8c8c8c"/></svg>
<div class="t" style="left:232px;top:471.36px;width:40px;text-align:right;font-size:12px;color:#939393;">rgb</div>
<div class="t" style="left:232px;top:530.36px;width:40px;text-align:right;font-size:12px;color:#939393;">rg</div>
<div class="t" style="left:232px;top:589.36px;width:40px;text-align:right;font-size:12px;color:#939393;">rb</div>
<div class="t" style="left:232px;top:648.36px;width:40px;text-align:right;font-size:12px;color:#939393;">gb</div>
<div class="t" style="left:250.5px;top:700.86px;width:200px;text-align:center;font-size:12px;color:#939393;font-weight:60;">gb</div>
<div class="t" style="left:358.5px;top:700.86px;width:200px;text-align:center;font-size:12px;color:#939393;font-weight:60;">rb</div>
<div class="t" style="left:466.5px;top:700.86px;width:200px;text-align:center;font-size:12px;color:#939393;font-weight:60;">rg</div>
<div class="t" style="left:574.5px;top:700.86px;width:200px;text-align:center;font-size:12px;color:#939393;font-weight:60;">rgb</div>
<div class="t" style="left:251.0px;top:648.36px;width:200px;text-align:center;font-size:12px;color:#d8d8d8;font-weight:60;letter-spacing:-0.6px;">1.00</div>
<div class="t" style="left:359.0px;top:589.36px;width:200px;text-align:center;font-size:12px;color:#d8d8d8;font-weight:60;letter-spacing:-0.6px;">1.00</div>
<div class="t" style="left:467.0px;top:530.36px;width:200px;text-align:center;font-size:12px;color:#d8d8d8;font-weight:60;letter-spacing:-0.6px;">1.00</div>
<div class="t" style="left:575.0px;top:471.36px;width:200px;text-align:center;font-size:12px;color:#d8d8d8;font-weight:60;letter-spacing:-0.6px;">1.00</div>
<div class="r" style="left:756px;top:433px;width:197px;height:284px;background:#fff;border:1px solid #ebebeb;border-radius:4px;box-sizing:border-box;"></div>
<div class="t" style="left:763.5px;top:438.86px;width:100px;text-align:center;font-size:12px;color:#1a1a1a;font-weight:normal;">Assigned</div>
<div class="t" style="left:839px;top:438.86px;width:100px;text-align:right;font-size:12px;color:#1a1a1a;">Predicted</div>
<div class="r" style="left:863px;top:434px;width:1px;height:271px;background:#e6e6e6;"></div>
<div class="r" style="left:763px;top:456px;width:1px;height:249px;background:#e6e6e6;"></div>
<div class="r" style="left:763px;top:456px;width:178px;height:1px;background:#e6e6e6;"></div>
<div class="t" style="left:767px;top:464.86px;font-size:12px;color:#1a1a1a;font-weight:normal;">rgb</div>
<div class="t" style="left:867px;top:464.86px;font-size:12px;color:#1a1a1a;font-weight:normal;">rgb</div>
<div class="r" style="left:757px;top:486px;width:184px;height:1px;background:#e6e6e6;"></div>
<div class="t" style="left:767px;top:494.86px;font-size:12px;color:#1a1a1a;font-weight:normal;">rgb</div>
<div class="t" style="left:867px;top:494.86px;font-size:12px;color:#1a1a1a;font-weight:normal;">rgb</div>
<div class="r" style="left:757px;top:516px;width:184px;height:1px;background:#e6e6e6;"></div>
<div class="t" style="left:767px;top:524.86px;font-size:12px;color:#1a1a1a;font-weight:normal;">rgb</div>
<div class="t" style="left:867px;top:524.86px;font-size:12px;color:#1a1a1a;font-weight:normal;">rgb</div>
<div class="r" style="left:757px;top:546px;width:184px;height:1px;background:#e6e6e6;"></div>
<div class="t" style="left:767px;top:554.86px;font-size:12px;color:#1a1a1a;font-weight:normal;">rgb</div>
<div class="t" style="left:867px;top:554.86px;font-size:12px;color:#1a1a1a;font-weight:normal;">rgb</div>
<div class="r" style="left:757px;top:576px;width:184px;height:1px;background:#e6e6e6;"></div>
<div class="t" style="left:767px;top:584.86px;font-size:12px;color:#1a1a1a;font-weight:normal;">rb</div>
<div class="t" style="left:867px;top:584.86px;font-size:12px;color:#1a1a1a;font-weight:normal;">rb</div>
<div class="r" style="left:757px;top:606px;width:184px;height:1px;background:#e6e6e6;"></div>
<div class="t" style="left:767px;top:614.86px;font-size:12px;color:#1a1a1a;font-weight:normal;">rb</div>
<div class="t" style="left:867px;top:614.86px;font-size:12px;color:#1a1a1a;font-weight:normal;">rb</div>
<div class="r" style="left:757px;top:636px;width:184px;height:1px;background:#e6e6e6;"></div>
<div class="t" style="left:767px;top:644.86px;font-size:12px;color:#1a1a1a;font-weight:normal;">rb</div>
<div class="t" style="left:867px;top:644.86px;font-size:12px;color:#1a1a1a;font-weight:normal;">rb</div>
<div class="r" style="left:757px;top:666px;width:184px;height:1px;background:#e6e6e6;"></div>
<div class="t" style="left:767px;top:674.86px;font-size:12px;color:#1a1a1a;font-weight:normal;">rb</div>
<div class="t" style="left:867px;top:674.86px;font-size:12px;color:#1a1a1a;font-weight:normal;">rb</div>
<div class="r" style="left:757px;top:696px;width:184px;height:1px;background:#e6e6e6;"></div>
<div class="r" style="left:757px;top:705px;width:195px;height:11px;background:#fcfcfc;border-radius:0 0 4px 4px;"></div>
<div class="r" style="left:946px;top:445px;width:2px;height:151px;background:#c4c4c4;border-radius:1px;"></div>
<div class="r" style="left:769px;top:710px;width:78px;height:2px;background:#c4c4c4;border-radius:1px;"></div>
<div class="r" style="left:978px;top:132px;width:269px;height:140px;border:1px solid #6c6c6c;border-radius:5px;box-sizing:border-box;"></div>
<div class="r" style="left:984px;top:125px;width:78px;height:12px;background:#fafafa;"></div>
<div class="t" style="left:986px;top:124.86px;font-size:12px;color:#1a1a1a;font-weight:normal;">Preprocessing</div>
<svg class="r" style="left:988px;top:153px" width="16" height="16" viewBox="0 0 16 16"><rect x="0" y="0" width="16" height="16" rx="4" fill="#005fb8"/><path d="M4 8.3 L6.8 11 L12 5.2" fill="none" stroke="#fff" stroke-width="1.1"/></svg>
<div class="t" style="left:1008px;top:155.16px;font-size:12px;color:#1a1a1a;font-weight:normal;">Crop</div>
<div class="r" style="left:1057px;top:150px;width:86px;height:22px;background:#fff;border:1px solid #ececec;border-radius:4px;box-sizing:border-box;"></div>
<div class="r" style="left:1061px;top:172px;width:78px;height:1px;background:#8a8a8a;"></div>
<div class="t" style="left:1063px;top:154.66px;font-size:12px;color:#1a1a1a;font-weight:normal;">328.39</div>
<svg class="r" style="left:1114px;top:158px" width="28" height="7" viewBox="0 0 28 7"><path d="M0.5 5.5 L5 1 L9.5 5.5" fill="none" stroke="#222" stroke-width="1.15"/><path d="M16.5 1.5 L21 6 L25.5 1.5" fill="none" stroke="#222" stroke-width="1.15"/></svg>
<div class="r" style="left:1152px;top:150px;width:85px;height:22px;background:#fff;border:1px solid #ececec;border-radius:4px;box-sizing:border-box;"></div>
<div class="r" style="left:1156px;top:172px;width:77px;height:1px;background:#8a8a8a;"></div>
<div class="t" style="left:1158px;top:154.66px;font-size:12px;color:#1a1a1a;font-weight:normal;">750.00</div>
<svg class="r" style="left:1208px;top:158px" width="28" height="7" viewBox="0 0 28 7"><path d="M0.5 5.5 L5 1 L9.5 5.5" fill="none" stroke="#222" stroke-width="1.15"/><path d="M16.5 1.5 L21 6 L25.5 1.5" fill="none" stroke="#222" stroke-width="1.15"/></svg>
<div class="t" style="left:987px;top:184.86px;font-size:12px;color:#1a1a1a;font-weight:normal;">Baseline</div>
<div class="r" style="left:1043px;top:180px;width:62px;height:22px;background:#fff;border:1px solid #ececec;border-radius:4px;box-sizing:border-box;"></div>
<div class="t" style="left:1051px;top:185.16px;font-size:12px;color:#1a1a1a;font-weight:normal;">None</div>
<svg class="r" style="left:1092px;top:190px" width="11" height="6" viewBox="0 0 11 6"><path d="M0.5 0.5 L5 5 L9.5 0.5" fill="none" stroke="#222" stroke-width="1.15"/></svg>
<div class="t" style="left:1112px;top:184.86px;font-size:12px;color:#1a1a1a;font-weight:normal;">Extent</div>
<div class="r" style="left:1167px;top:180px;width:70px;height:22px;background:#fff;border:1px solid #ececec;border-radius:4px;box-sizing:border-box;"></div>
<div class="r" style="left:1171px;top:202px;width:62px;height:1px;background:#8a8a8a;"></div>
<div class="t" style="left:1173px;top:184.66px;font-size:12px;color:#1a1a1a;font-weight:normal;">40</div>
<svg class="r" style="left:1208px;top:188px" width="28" height="7" viewBox="0 0 28 7"><path d="M0.5 5.5 L5 1 L9.5 5.5" fill="none" stroke="#222" stroke-width="1.15"/><path d="M16.5 1.5 L21 6 L25.5 1.5" fill="none" stroke="#222" stroke-width="1.15"/></svg>
<div class="t" style="left:987px;top:214.86px;font-size:12px;color:#1a1a1a;font-weight:normal;">Filter</div>
<div class="r" style="left:1020px;top:210px;width:102px;height:22px;background:#fff;border:1px solid #ececec;border-radius:4px;box-sizing:border-box;"></div>
<div class="t" style="left:1028px;top:215.16px;font-size:12px;color:#1a1a1a;font-weight:normal;">None</div>
<svg class="r" style="left:1109px;top:220px" width="11" height="6" viewBox="0 0 11 6"><path d="M0.5 0.5 L5 5 L9.5 0.5" fill="none" stroke="#222" stroke-width="1.15"/></svg>
<div class="t" style="left:1129px;top:214.86px;font-size:12px;color:#1a1a1a;font-weight:normal;">Order</div>
<div class="r" style="left:1167px;top:210px;width:70px;height:22px;background:#fff;border:1px solid #ececec;border-radius:4px;box-sizing:border-box;"></div>
<div class="r" style="left:1171px;top:232px;width:62px;height:1px;background:#8a8a8a;"></div>
<div class="t" style="left:1173px;top:214.66px;font-size:12px;color:#1a1a1a;font-weight:normal;">3</div>
<svg class="r" style="left:1208px;top:218px" width="28" height="7" viewBox="0 0 28 7"><path d="M0.5 5.5 L5 1 L9.5 5.5" fill="none" stroke="#222" stroke-width="1.15"/><path d="M16.5 1.5 L21 6 L25.5 1.5" fill="none" stroke="#222" stroke-width="1.15"/></svg>
<div class="t" style="left:987px;top:244.86px;font-size:12px;color:#1a1a1a;font-weight:normal;">Scaling</div>
<div class="r" style="left:1117px;top:240px;width:120px;height:22px;background:#fff;border:1px solid #ececec;border-radius:4px;box-sizing:border-box;"></div>
<div class="t" style="left:1125px;top:245.16px;font-size:12px;color:#1a1a1a;font-weight:normal;">SNV</div>
<svg class="r" style="left:1224px;top:250px" width="11" height="6" viewBox="0 0 11 6"><path d="M0.5 0.5 L5 5 L9.5 0.5" fill="none" stroke="#222" stroke-width="1.15"/></svg>
<div class="r" style="left:978px;top:288px;width:269px;height:127px;border:1px solid #6c6c6c;border-radius:5px;box-sizing:border-box;"></div>
<div class="r" style="left:984px;top:281px;width:38px;height:12px;background:#fafafa;"></div>
<div class="t" style="left:986px;top:280.86px;font-size:12px;color:#1a1a1a;font-weight:normal;">Model</div>
<div class="r" style="left:988px;top:306px;width:249px;height:21px;background:#fff;border:1px solid #ececec;border-radius:4px;box-sizing:border-box;"></div>
<div class="t" style="left:996px;top:311.16px;font-size:12px;color:#1a1a1a;font-weight:normal;">SVM</div>
<svg class="r" style="left:1224px;top:316px" width="11" height="6" viewBox="0 0 11 6"><path d="M0.5 0.5 L5 5 L9.5 0.5" fill="none" stroke="#222" stroke-width="1.15"/></svg>
<div class="t" style="left:996px;top:349.86px;font-size:12px;color:#1a1a1a;font-weight:normal;">C</div>
<div class="r" style="left:1016px;top:346px;width:110px;height:21px;background:#fff;border:1px solid #ececec;border-radius:4px;box-sizing:border-box;"></div>
<div class="r" style="left:1020px;top:367px;width:102px;height:1px;background:#8a8a8a;"></div>
<div class="t" style="left:1022px;top:350.66px;font-size:12px;color:#1a1a1a;font-weight:normal;">100.00</div>
<svg class="r" style="left:1097px;top:354px" width="28" height="7" viewBox="0 0 28 7"><path d="M0.5 5.5 L5 1 L9.5 5.5" fill="none" stroke="#222" stroke-width="1.15"/><path d="M16.5 1.5 L21 6 L25.5 1.5" fill="none" stroke="#222" stroke-width="1.15"/></svg>
<div class="t" style="left:1133px;top:349.86px;font-size:12px;color:#1a1a1a;font-weight:normal;">nu</div>
<div class="r" style="left:1154px;top:346px;width:73px;height:21px;background:#fff;border:1px solid #ececec;border-radius:4px;box-sizing:border-box;"></div>
<div class="r" style="left:1158px;top:367px;width:65px;height:1px;background:#8a8a8a;"></div>
<div class="t" style="left:1160px;top:350.66px;font-size:12px;color:#1a1a1a;font-weight:normal;">0.55</div>
<svg class="r" style="left:1198px;top:354px" width="28" height="7" viewBox="0 0 28 7"><path d="M0.5 5.5 L5 1 L9.5 5.5" fill="none" stroke="#222" stroke-width="1.15"/><path d="M16.5 1.5 L21 6 L25.5 1.5" fill="none" stroke="#222" stroke-width="1.15"/></svg>
<div class="r" style="left:998px;top:376px;width:229px;height:20px;background:#fff;border:1px solid #ececec;border-bottom-color:#d0d0d0;border-radius:4px;box-sizing:border-box;"></div>
<div class="t" style="left:1082.5px;top:379.86px;width:60px;text-align:center;font-size:12px;color:#1a1a1a;font-weight:normal;">Fit</div>
</body></html>
